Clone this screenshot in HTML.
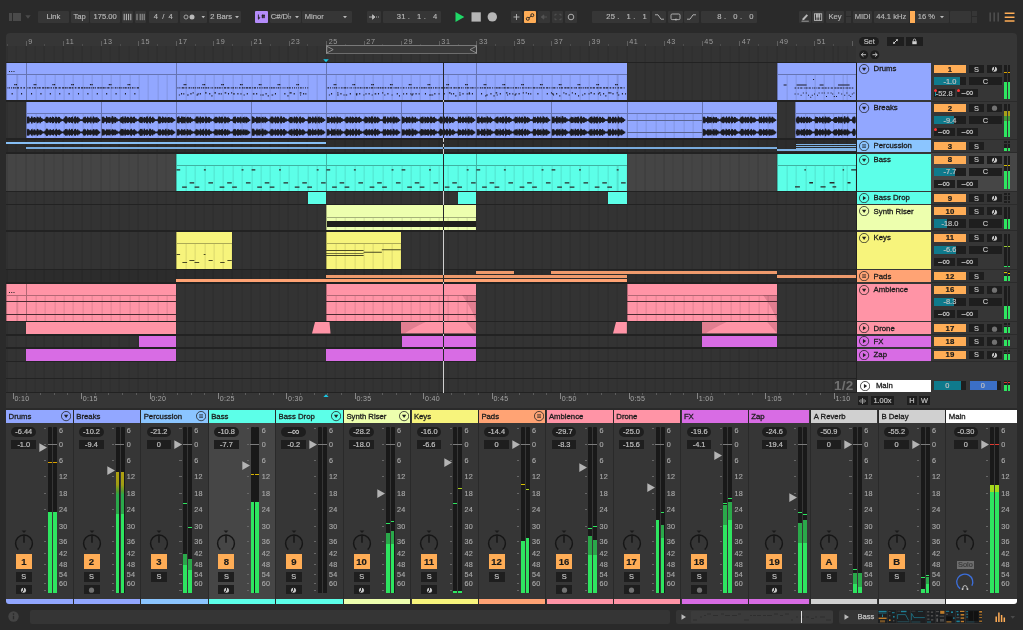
<!DOCTYPE html>
<html lang="en"><head><meta charset="utf-8"><title>Live Set</title><style>
*{box-sizing:border-box;margin:0;padding:0}
html,body{width:1023px;height:630px;overflow:hidden;background:#2a2a2a}
body{font-family:"Liberation Sans",sans-serif;font-size:7.5px;color:#b9b9b9;position:relative}
#r{position:absolute;left:0;top:0;width:1023px;height:630px;overflow:hidden;background:#2a2a2a}
#r div,#r svg{position:absolute}
#r svg{display:block}
#r div>span{position:static}
.tb{-webkit-text-stroke-width:0.15px;display:flex;align-items:center;justify-content:center;font-size:7.6px;color:#b9b9b9;white-space:nowrap;border-radius:1px}
.tb svg{position:static!important;flex:none}
.tb svg.a{position:absolute!important}
.pos{letter-spacing:0.2px}
.cb{-webkit-text-stroke-width:0.2px;display:flex;align-items:center;justify-content:center;font-size:7.4px;color:#c0c0c0;white-space:nowrap;overflow:hidden}
.cb svg{position:static!important;flex:none}
.dk{color:#1a1a1a;font-weight:bold;font-size:7.8px}
.tn{font-size:7.75px;font-weight:normal;color:#1c1c1c;white-space:nowrap;-webkit-text-stroke:0.3px #1c1c1c}
.rl{font-size:7.2px;color:#9c9c9c;white-space:nowrap;line-height:1;letter-spacing:0.65px}
.sl{font-size:7.2px;color:#a8a8a8;white-space:nowrap;letter-spacing:0.25px;-webkit-text-stroke-width:0.15px}
</style></head><body><div id="r">
<div style="left:8.75px;top:12.50px;width:3.00px;height:8.30px;background:#4a4a4a;"></div>
<div style="left:13.25px;top:12.50px;width:7.30px;height:8.30px;background:#4a4a4a;"></div>
<svg class="a" style="left:24.5px;top:14.5px" width="6" height="4"><path d="M0.3 0.3H5.7L3 3.7Z" fill="#4a4a4a"/></svg>
<div class="tb" style="left:38.00px;top:10.90px;width:30.75px;height:11.90px;background:#363636;">Link</div>
<div class="tb" style="left:70.50px;top:10.90px;width:18.00px;height:11.90px;background:#363636;">Tap</div>
<div class="tb" style="left:90.25px;top:10.90px;width:29.75px;height:11.90px;background:#363636;">175.00</div>
<div class="tb" style="left:121.75px;top:10.90px;width:11.00px;height:11.90px;background:#363636;"><svg width="11" height="12"><path d="M2.2 2.8V9.2M4.4 2.8V9.2M6.6 2.8V9.2M8.8 2.8V9.2" stroke="#b9b9b9" stroke-width="1"/></svg></div>
<div class="tb" style="left:135.00px;top:10.90px;width:11.25px;height:11.90px;background:#363636;"><svg width="11" height="12"><path d="M2 2.8V9.2M5.2 2.8V9.2M7.2 2.8V9.2M9.2 2.8V9.2" stroke="#b9b9b9" stroke-width="0.8"/></svg></div>
<div class="tb" style="left:148.75px;top:10.90px;width:29.00px;height:11.90px;background:#363636;">4&nbsp; / &nbsp;4</div>
<div class="tb" style="left:180.00px;top:10.90px;width:27.00px;height:11.90px;background:#363636;"><svg width="27" height="12"><circle cx="6" cy="6" r="2" fill="none" stroke="#b9b9b9" stroke-width="0.8"/><circle cx="12" cy="6" r="2.5" fill="#b9b9b9"/><path d="M21.5 5H25L23.25 7.3Z" fill="#b9b9b9"/></svg></div>
<div class="tb" style="left:209.00px;top:10.90px;width:31.75px;height:11.90px;background:#363636;">2 Bars<svg width="6" height="12" style="margin-left:1.5px"><path d="M1 5H5L3 7.3Z" fill="#b9b9b9"/></svg></div>
<div class="tb" style="left:254.50px;top:10.90px;width:13.25px;height:11.90px;background:#b48cfa;"><svg width="13" height="12"><path d="M3.4 3.5V8.2M3.4 6.6C5 5.6 5.4 7.2 3.4 8.2" stroke="#1e1e1e" stroke-width="0.9" fill="none"/><path d="M6.6 4.6H10M6.6 6H10M7.6 3.4V7.2M9 3.4V7.2" stroke="#1e1e1e" stroke-width="0.9"/></svg></div>
<div class="tb" style="left:269.75px;top:10.90px;width:30.75px;height:11.90px;background:#363636;overflow:hidden;">C#/D&#9837;<svg width="6" height="12" style="margin-left:1.5px"><path d="M1 5H5L3 7.3Z" fill="#b9b9b9"/></svg></div>
<div class="tb" style="left:302.25px;top:10.90px;width:49.50px;height:11.90px;background:#363636;"><span style="position:absolute;left:2.5px">Minor</span><svg class="a" style="right:3.5px;top:0" width="6" height="12"><path d="M1 5H5L3 7.3Z" fill="#b9b9b9"/></svg></div>
<div class="tb" style="left:366.75px;top:10.90px;width:13.75px;height:11.90px;background:#363636;"><svg width="14" height="12"><path d="M2 6H7.5M5.5 3.8L8 6L5.5 8.2Z" stroke="#b9b9b9" stroke-width="0.9" fill="#b9b9b9"/><path d="M9 6H10M11 6H12" stroke="#b9b9b9" stroke-width="0.9"/></svg></div>
<div class="tb" style="left:382.75px;top:10.90px;width:57.75px;height:11.90px;background:#363636;justify-content:flex-end;"><span class="pos" style="padding-right:3px">31 .&nbsp;&nbsp; 1 .&nbsp;&nbsp; 4</span></div>
<svg class="a" style="left:454px;top:10px" width="48" height="14"><path d="M1.5 2L10.3 6.9L1.5 12Z" fill="#1fd867"/><rect x="17.5" y="2.3" width="9.3" height="9.3" fill="#b6b6b6"/><circle cx="38.3" cy="6.9" r="4.7" fill="#b6b6b6"/></svg>
<div class="tb" style="left:511.40px;top:10.90px;width:11.00px;height:11.90px;background:#363636;"><svg width="11" height="12"><path d="M5.5 3V9M2.5 6H8.5" stroke="#b9b9b9" stroke-width="0.9"/></svg></div>
<div class="tb" style="left:524.10px;top:10.90px;width:12.20px;height:11.90px;background:#ffad56;"><svg width="12" height="12"><circle cx="3.8" cy="7.8" r="1.5" fill="none" stroke="#1e1e1e" stroke-width="0.9"/><circle cx="8.3" cy="4.2" r="1.5" fill="none" stroke="#1e1e1e" stroke-width="0.9"/><path d="M4.8 6.9L7.3 5.1" stroke="#1e1e1e" stroke-width="0.9"/></svg></div>
<div class="tb" style="left:538.10px;top:10.90px;width:11.70px;height:11.90px;background:#363636;"><svg width="12" height="12"><path d="M3.5 6H9M5.8 3.9L3.3 6L5.8 8.1Z" stroke="#555" stroke-width="0.9" fill="#555"/></svg></div>
<div class="tb" style="left:551.60px;top:10.90px;width:11.90px;height:11.90px;background:#363636;"><svg width="12" height="12"><path d="M3 4.8V3.3H4.6M7.4 3.3H9V4.8M9 7.2V8.7H7.4M4.6 8.7H3V7.2" stroke="#555" stroke-width="0.9" fill="none"/></svg></div>
<div class="tb" style="left:565.00px;top:10.90px;width:12.00px;height:11.90px;background:#363636;"><svg width="12" height="12"><circle cx="6" cy="6" r="2.8" fill="none" stroke="#b9b9b9" stroke-width="0.9"/></svg></div>
<div class="tb" style="left:592.00px;top:10.90px;width:58.00px;height:11.90px;background:#363636;justify-content:flex-end;"><span class="pos" style="padding-right:3px">25 .&nbsp;&nbsp; 1 .&nbsp;&nbsp; 1</span></div>
<div class="tb" style="left:651.70px;top:10.90px;width:14.80px;height:11.90px;background:#363636;"><svg width="15" height="12"><path d="M3 3.8H6L9 8.2H12" stroke="#b9b9b9" stroke-width="0.9" fill="none"/></svg></div>
<div class="tb" style="left:668.20px;top:10.90px;width:14.80px;height:11.90px;background:#363636;"><svg width="15" height="12"><rect x="3" y="3" width="9" height="5.6" rx="1.2" fill="none" stroke="#b9b9b9" stroke-width="0.9"/><path d="M6.5 8.6L8.3 7.2V10Z" fill="#b9b9b9"/></svg></div>
<div class="tb" style="left:684.20px;top:10.90px;width:14.80px;height:11.90px;background:#363636;"><svg width="15" height="12"><path d="M3 8.2H6L9 3.8H12" stroke="#b9b9b9" stroke-width="0.9" fill="none"/></svg></div>
<div class="tb" style="left:700.80px;top:10.90px;width:55.90px;height:11.90px;background:#363636;justify-content:flex-end;"><span class="pos" style="padding-right:3px">8 .&nbsp;&nbsp; 0 .&nbsp;&nbsp; 0</span></div>
<div class="tb" style="left:798.60px;top:10.90px;width:12.00px;height:11.90px;background:#363636;"><svg width="12" height="12"><path d="M3.6 7.6L7.6 3.2L9 4.5L5 8.9L3.3 9.2Z" fill="#b9b9b9"/><path d="M2.5 10.2H9.8" stroke="#b9b9b9" stroke-width="0.8"/></svg></div>
<div class="tb" style="left:812.20px;top:10.90px;width:12.10px;height:11.90px;background:#363636;"><svg width="12" height="12"><rect x="2.5" y="2.8" width="7.2" height="6.6" fill="none" stroke="#b9b9b9" stroke-width="0.9"/><path d="M4.9 2.8V9.4M7.3 2.8V9.4" stroke="#b9b9b9" stroke-width="0.9"/><path d="M4.9 2.8V6.5M7.3 2.8V6.5" stroke="#b9b9b9" stroke-width="1.8"/></svg></div>
<div class="tb" style="left:825.80px;top:10.90px;width:18.50px;height:11.90px;background:#363636;">Key</div>
<div style="left:845.90px;top:10.90px;width:5.40px;height:5.60px;background:#363636;"></div>
<div style="left:845.90px;top:17.20px;width:5.40px;height:5.60px;background:#363636;"></div>
<div class="tb" style="left:853.00px;top:10.90px;width:19.30px;height:11.90px;background:#363636;">MIDI</div>
<div class="tb" style="left:873.90px;top:10.90px;width:34.70px;height:11.90px;background:#363636;">44.1 kHz</div>
<div style="left:910.40px;top:10.90px;width:4.40px;height:11.90px;background:#ffad56;"></div>
<div class="tb" style="left:914.80px;top:10.90px;width:34.20px;height:11.90px;background:#363636;"><span style="position:absolute;left:3px">16 %</span><svg class="a" style="right:3.5px;top:0" width="6" height="12"><path d="M1 5H5L3 7.3Z" fill="#b9b9b9"/></svg></div>
<div class="tb" style="left:950.20px;top:10.90px;width:20.60px;height:11.90px;background:#363636;"></div>
<div style="left:971.80px;top:10.90px;width:5.40px;height:5.60px;background:#363636;"></div>
<div style="left:971.80px;top:17.20px;width:5.40px;height:5.60px;background:#363636;"></div>
<svg class="a" style="left:989px;top:11.5px" width="28" height="11"><path d="M1.2 0.5V9.5M5.2 0.5V9.5M9.2 0.5V9.5" stroke="#4c4c4c" stroke-width="1.6"/><path d="M15.7 1.3H25.5M15.7 5.2H25.5M15.7 9.1H25.5" stroke="#ffad56" stroke-width="1.5"/></svg>
<div style="left:6.20px;top:33.40px;width:1010.50px;height:374.40px;background:#363636;border-radius:4px 4px 0 0;"></div>
<div style="left:6.20px;top:45.50px;width:850.00px;height:347.00px;background:#222222;"></div>
<div style="left:6.20px;top:45.50px;width:850.00px;height:16.50px;background:#333333;background-image:repeating-linear-gradient(90deg,rgba(0,0,0,0.15) 0,rgba(0,0,0,0.15) 1px,rgba(0,0,0,0) 1px,rgba(0,0,0,0) 9.39px,rgba(0,0,0,0.09) 9.39px,rgba(0,0,0,0.09) 10.39px,rgba(0,0,0,0) 10.39px,rgba(0,0,0,0) 18.78px);background-position:-18.46px 0;"></div>
<div style="left:6.20px;top:63.10px;width:850.00px;height:37.30px;background:#333333;background-image:repeating-linear-gradient(90deg,rgba(0,0,0,0.15) 0,rgba(0,0,0,0.15) 1px,rgba(0,0,0,0) 1px,rgba(0,0,0,0) 9.39px,rgba(0,0,0,0.09) 9.39px,rgba(0,0,0,0.09) 10.39px,rgba(0,0,0,0) 10.39px,rgba(0,0,0,0) 18.78px);background-position:-18.46px 0;"></div>
<div style="left:6.20px;top:102.10px;width:850.00px;height:36.40px;background:#333333;background-image:repeating-linear-gradient(90deg,rgba(0,0,0,0.15) 0,rgba(0,0,0,0.15) 1px,rgba(0,0,0,0) 1px,rgba(0,0,0,0) 9.39px,rgba(0,0,0,0.09) 9.39px,rgba(0,0,0,0.09) 10.39px,rgba(0,0,0,0) 10.39px,rgba(0,0,0,0) 18.78px);background-position:-18.46px 0;"></div>
<div style="left:6.20px;top:140.30px;width:850.00px;height:11.90px;background:#2c2c2c;background-image:repeating-linear-gradient(90deg,rgba(0,0,0,0.15) 0,rgba(0,0,0,0.15) 1px,rgba(0,0,0,0) 1px,rgba(0,0,0,0) 9.39px,rgba(0,0,0,0.09) 9.39px,rgba(0,0,0,0.09) 10.39px,rgba(0,0,0,0) 10.39px,rgba(0,0,0,0) 18.78px);background-position:-18.46px 0;"></div>
<div style="left:6.20px;top:153.80px;width:850.00px;height:36.90px;background:#454545;background-image:repeating-linear-gradient(90deg,rgba(0,0,0,0.15) 0,rgba(0,0,0,0.15) 1px,rgba(0,0,0,0) 1px,rgba(0,0,0,0) 9.39px,rgba(0,0,0,0.09) 9.39px,rgba(0,0,0,0.09) 10.39px,rgba(0,0,0,0) 10.39px,rgba(0,0,0,0) 18.78px);background-position:-18.46px 0;"></div>
<div style="left:6.20px;top:192.30px;width:850.00px;height:11.40px;background:#333333;background-image:repeating-linear-gradient(90deg,rgba(0,0,0,0.15) 0,rgba(0,0,0,0.15) 1px,rgba(0,0,0,0) 1px,rgba(0,0,0,0) 9.39px,rgba(0,0,0,0.09) 9.39px,rgba(0,0,0,0.09) 10.39px,rgba(0,0,0,0) 10.39px,rgba(0,0,0,0) 18.78px);background-position:-18.46px 0;"></div>
<div style="left:6.20px;top:205.40px;width:850.00px;height:24.80px;background:#333333;background-image:repeating-linear-gradient(90deg,rgba(0,0,0,0.15) 0,rgba(0,0,0,0.15) 1px,rgba(0,0,0,0) 1px,rgba(0,0,0,0) 9.39px,rgba(0,0,0,0.09) 9.39px,rgba(0,0,0,0.09) 10.39px,rgba(0,0,0,0) 10.39px,rgba(0,0,0,0) 18.78px);background-position:-18.46px 0;"></div>
<div style="left:6.20px;top:231.90px;width:850.00px;height:36.90px;background:#333333;background-image:repeating-linear-gradient(90deg,rgba(0,0,0,0.15) 0,rgba(0,0,0,0.15) 1px,rgba(0,0,0,0) 1px,rgba(0,0,0,0) 9.39px,rgba(0,0,0,0.09) 9.39px,rgba(0,0,0,0.09) 10.39px,rgba(0,0,0,0) 10.39px,rgba(0,0,0,0) 18.78px);background-position:-18.46px 0;"></div>
<div style="left:6.20px;top:270.40px;width:850.00px;height:11.80px;background:#2c2c2c;background-image:repeating-linear-gradient(90deg,rgba(0,0,0,0.15) 0,rgba(0,0,0,0.15) 1px,rgba(0,0,0,0) 1px,rgba(0,0,0,0) 9.39px,rgba(0,0,0,0.09) 9.39px,rgba(0,0,0,0.09) 10.39px,rgba(0,0,0,0) 10.39px,rgba(0,0,0,0) 18.78px);background-position:-18.46px 0;"></div>
<div style="left:6.20px;top:283.80px;width:850.00px;height:37.00px;background:#333333;background-image:repeating-linear-gradient(90deg,rgba(0,0,0,0.15) 0,rgba(0,0,0,0.15) 1px,rgba(0,0,0,0) 1px,rgba(0,0,0,0) 9.39px,rgba(0,0,0,0.09) 9.39px,rgba(0,0,0,0.09) 10.39px,rgba(0,0,0,0) 10.39px,rgba(0,0,0,0) 18.78px);background-position:-18.46px 0;"></div>
<div style="left:6.20px;top:322.40px;width:850.00px;height:11.40px;background:#333333;background-image:repeating-linear-gradient(90deg,rgba(0,0,0,0.15) 0,rgba(0,0,0,0.15) 1px,rgba(0,0,0,0) 1px,rgba(0,0,0,0) 9.39px,rgba(0,0,0,0.09) 9.39px,rgba(0,0,0,0.09) 10.39px,rgba(0,0,0,0) 10.39px,rgba(0,0,0,0) 18.78px);background-position:-18.46px 0;"></div>
<div style="left:6.20px;top:335.70px;width:850.00px;height:11.70px;background:#333333;background-image:repeating-linear-gradient(90deg,rgba(0,0,0,0.15) 0,rgba(0,0,0,0.15) 1px,rgba(0,0,0,0) 1px,rgba(0,0,0,0) 9.39px,rgba(0,0,0,0.09) 9.39px,rgba(0,0,0,0.09) 10.39px,rgba(0,0,0,0) 10.39px,rgba(0,0,0,0) 18.78px);background-position:-18.46px 0;"></div>
<div style="left:6.20px;top:349.20px;width:850.00px;height:11.60px;background:#333333;background-image:repeating-linear-gradient(90deg,rgba(0,0,0,0.15) 0,rgba(0,0,0,0.15) 1px,rgba(0,0,0,0) 1px,rgba(0,0,0,0) 9.39px,rgba(0,0,0,0.09) 9.39px,rgba(0,0,0,0.09) 10.39px,rgba(0,0,0,0) 10.39px,rgba(0,0,0,0) 18.78px);background-position:-18.46px 0;"></div>
<div style="left:6.20px;top:362.20px;width:850.00px;height:15.40px;background:#333333;background-image:repeating-linear-gradient(90deg,rgba(0,0,0,0.15) 0,rgba(0,0,0,0.15) 1px,rgba(0,0,0,0) 1px,rgba(0,0,0,0) 9.39px,rgba(0,0,0,0.09) 9.39px,rgba(0,0,0,0.09) 10.39px,rgba(0,0,0,0) 10.39px,rgba(0,0,0,0) 18.78px);background-position:-18.46px 0;"></div>
<div style="left:6.20px;top:379.30px;width:850.00px;height:12.80px;background:#333333;background-image:repeating-linear-gradient(90deg,rgba(0,0,0,0.15) 0,rgba(0,0,0,0.15) 1px,rgba(0,0,0,0) 1px,rgba(0,0,0,0) 9.39px,rgba(0,0,0,0.09) 9.39px,rgba(0,0,0,0.09) 10.39px,rgba(0,0,0,0) 10.39px,rgba(0,0,0,0) 18.78px);background-position:-18.46px 0;"></div>
<div class="a" style="left:25.60px;top:41px;width:0.8px;height:4.5px;background:#5e5e5e"></div>
<div class="a rl" style="left:28.20px;top:38.3px">9</div>
<div class="a" style="left:63.16px;top:41px;width:0.8px;height:4.5px;background:#5e5e5e"></div>
<div class="a rl" style="left:65.76px;top:38.3px">11</div>
<div class="a" style="left:100.72px;top:41px;width:0.8px;height:4.5px;background:#5e5e5e"></div>
<div class="a rl" style="left:103.32px;top:38.3px">13</div>
<div class="a" style="left:138.28px;top:41px;width:0.8px;height:4.5px;background:#5e5e5e"></div>
<div class="a rl" style="left:140.88px;top:38.3px">15</div>
<div class="a" style="left:175.84px;top:41px;width:0.8px;height:4.5px;background:#5e5e5e"></div>
<div class="a rl" style="left:178.44px;top:38.3px">17</div>
<div class="a" style="left:213.40px;top:41px;width:0.8px;height:4.5px;background:#5e5e5e"></div>
<div class="a rl" style="left:216.00px;top:38.3px">19</div>
<div class="a" style="left:250.96px;top:41px;width:0.8px;height:4.5px;background:#5e5e5e"></div>
<div class="a rl" style="left:253.56px;top:38.3px">21</div>
<div class="a" style="left:288.52px;top:41px;width:0.8px;height:4.5px;background:#5e5e5e"></div>
<div class="a rl" style="left:291.12px;top:38.3px">23</div>
<div class="a" style="left:326.08px;top:41px;width:0.8px;height:4.5px;background:#5e5e5e"></div>
<div class="a rl" style="left:328.68px;top:38.3px">25</div>
<div class="a" style="left:363.64px;top:41px;width:0.8px;height:4.5px;background:#5e5e5e"></div>
<div class="a rl" style="left:366.24px;top:38.3px">27</div>
<div class="a" style="left:401.20px;top:41px;width:0.8px;height:4.5px;background:#5e5e5e"></div>
<div class="a rl" style="left:403.80px;top:38.3px">29</div>
<div class="a" style="left:438.76px;top:41px;width:0.8px;height:4.5px;background:#5e5e5e"></div>
<div class="a rl" style="left:441.36px;top:38.3px">31</div>
<div class="a" style="left:476.32px;top:41px;width:0.8px;height:4.5px;background:#5e5e5e"></div>
<div class="a rl" style="left:478.92px;top:38.3px">33</div>
<div class="a" style="left:513.88px;top:41px;width:0.8px;height:4.5px;background:#5e5e5e"></div>
<div class="a rl" style="left:516.48px;top:38.3px">35</div>
<div class="a" style="left:551.44px;top:41px;width:0.8px;height:4.5px;background:#5e5e5e"></div>
<div class="a rl" style="left:554.04px;top:38.3px">37</div>
<div class="a" style="left:589.00px;top:41px;width:0.8px;height:4.5px;background:#5e5e5e"></div>
<div class="a rl" style="left:591.60px;top:38.3px">39</div>
<div class="a" style="left:626.56px;top:41px;width:0.8px;height:4.5px;background:#5e5e5e"></div>
<div class="a rl" style="left:629.16px;top:38.3px">41</div>
<div class="a" style="left:664.12px;top:41px;width:0.8px;height:4.5px;background:#5e5e5e"></div>
<div class="a rl" style="left:666.72px;top:38.3px">43</div>
<div class="a" style="left:701.68px;top:41px;width:0.8px;height:4.5px;background:#5e5e5e"></div>
<div class="a rl" style="left:704.28px;top:38.3px">45</div>
<div class="a" style="left:739.24px;top:41px;width:0.8px;height:4.5px;background:#5e5e5e"></div>
<div class="a rl" style="left:741.84px;top:38.3px">47</div>
<div class="a" style="left:776.80px;top:41px;width:0.8px;height:4.5px;background:#5e5e5e"></div>
<div class="a rl" style="left:779.40px;top:38.3px">49</div>
<div class="a" style="left:814.36px;top:41px;width:0.8px;height:4.5px;background:#5e5e5e"></div>
<div class="a rl" style="left:816.96px;top:38.3px">51</div>
<div class="a" style="left:851.92px;top:41px;width:0.8px;height:4.5px;background:#5e5e5e"></div>
<div class="a" style="left:6.82px;top:44px;width:0.8px;height:1.6px;background:#4c4c4c"></div>
<div class="a" style="left:44.38px;top:44px;width:0.8px;height:1.6px;background:#4c4c4c"></div>
<div class="a" style="left:81.94px;top:44px;width:0.8px;height:1.6px;background:#4c4c4c"></div>
<div class="a" style="left:119.50px;top:44px;width:0.8px;height:1.6px;background:#4c4c4c"></div>
<div class="a" style="left:157.06px;top:44px;width:0.8px;height:1.6px;background:#4c4c4c"></div>
<div class="a" style="left:194.62px;top:44px;width:0.8px;height:1.6px;background:#4c4c4c"></div>
<div class="a" style="left:232.18px;top:44px;width:0.8px;height:1.6px;background:#4c4c4c"></div>
<div class="a" style="left:269.74px;top:44px;width:0.8px;height:1.6px;background:#4c4c4c"></div>
<div class="a" style="left:307.30px;top:44px;width:0.8px;height:1.6px;background:#4c4c4c"></div>
<div class="a" style="left:344.86px;top:44px;width:0.8px;height:1.6px;background:#4c4c4c"></div>
<div class="a" style="left:382.42px;top:44px;width:0.8px;height:1.6px;background:#4c4c4c"></div>
<div class="a" style="left:419.98px;top:44px;width:0.8px;height:1.6px;background:#4c4c4c"></div>
<div class="a" style="left:457.54px;top:44px;width:0.8px;height:1.6px;background:#4c4c4c"></div>
<div class="a" style="left:495.10px;top:44px;width:0.8px;height:1.6px;background:#4c4c4c"></div>
<div class="a" style="left:532.66px;top:44px;width:0.8px;height:1.6px;background:#4c4c4c"></div>
<div class="a" style="left:570.22px;top:44px;width:0.8px;height:1.6px;background:#4c4c4c"></div>
<div class="a" style="left:607.78px;top:44px;width:0.8px;height:1.6px;background:#4c4c4c"></div>
<div class="a" style="left:645.34px;top:44px;width:0.8px;height:1.6px;background:#4c4c4c"></div>
<div class="a" style="left:682.90px;top:44px;width:0.8px;height:1.6px;background:#4c4c4c"></div>
<div class="a" style="left:720.46px;top:44px;width:0.8px;height:1.6px;background:#4c4c4c"></div>
<div class="a" style="left:758.02px;top:44px;width:0.8px;height:1.6px;background:#4c4c4c"></div>
<div class="a" style="left:795.58px;top:44px;width:0.8px;height:1.6px;background:#4c4c4c"></div>
<div class="a" style="left:833.14px;top:44px;width:0.8px;height:1.6px;background:#4c4c4c"></div>
<svg class="a" style="left:325.58px;top:44.8px" width="151.74" height="9.5"><rect x="0.5" y="0.5" width="150.24" height="8.2" fill="#3a3a3a" stroke="#808080" stroke-width="0.9"/><path d="M0.8 1.2L7.2 4.6L0.8 8Z" fill="none" stroke="#a0a0a0" stroke-width="0.8"/><path d="M150.44 1.2L144.04 4.6L150.44 8Z" fill="none" stroke="#a0a0a0" stroke-width="0.8"/></svg>
<svg class="a" style="left:323.08px;top:58.8px" width="6" height="3.4"><path d="M0.2 0.2H5.8L3 3.2Z" fill="#19c8e4"/></svg>
<div class="a" style="left:6.20px;top:63.10px;width:19.40px;height:37.30px;background:#92a7ff;overflow:hidden;"><div class="a" style="left:0;top:11.60px;width:100%;height:25.70px;background-image:repeating-linear-gradient(90deg,#8193e1 0,#8193e1 1px,rgba(0,0,0,0) 1px,rgba(0,0,0,0) 9.39px);background-position:-8.77px 0;"></div><div class="a" style="left:0;top:11.20px;width:100%;height:0.9px;background:#6674b2"></div><div class="a" style="left:0;top:0;width:0.9px;height:100%;background:#6674b2"></div><div class="a" style="left:2.3px;top:3.2px;font-size:7px;color:#222;letter-spacing:0.3px;font-weight:bold">...</div><svg class="a" style="left:0;top:0" width="19.40" height="37.40"><path d="M1.50 24.20h0.90v1.30h-0.90zM3.10 24.20h0.90v1.30h-0.90zM5.00 24.20h0.90v1.30h-0.90zM6.90 24.20h1.60v1.30h-1.60zM9.20 24.20h0.90v1.30h-0.90zM10.80 24.20h2.20v1.30h-2.20zM14.40 24.20h1.60v1.30h-1.60zM17.40 24.20h1.60v1.30h-1.60zM8.22 21.00h1.20v1.20h-1.20zM9.82 21.00h1.20v1.20h-1.20zM5.62 30.00h1.10v1.40h-1.10zM15.02 30.00h1.10v1.40h-1.10z" fill="#1e1e28"/></svg></div>
<div class="a" style="left:25.60px;top:63.10px;width:150.24px;height:37.30px;background:#92a7ff;overflow:hidden;"><div class="a" style="left:0;top:11.60px;width:100%;height:25.70px;background-image:repeating-linear-gradient(90deg,#8193e1 0,#8193e1 1px,rgba(0,0,0,0) 1px,rgba(0,0,0,0) 9.39px);background-position:-9.39px 0;"></div><div class="a" style="left:0;top:11.20px;width:100%;height:0.9px;background:#6674b2"></div><div class="a" style="left:0;top:0;width:0.9px;height:100%;background:#6674b2"></div><svg class="a" style="left:0;top:0" width="150.24" height="37.40"><path d="M1.50 24.20h0.90v1.30h-0.90zM3.10 24.20h1.60v1.30h-1.60zM6.10 24.20h0.90v1.30h-0.90zM7.70 24.20h2.20v1.30h-2.20zM10.90 24.20h0.90v1.30h-0.90zM12.50 24.20h2.20v1.30h-2.20zM16.10 24.20h2.20v1.30h-2.20zM19.00 24.20h0.90v1.30h-0.90zM20.60 24.20h2.20v1.30h-2.20zM23.50 24.20h0.90v1.30h-0.90zM25.10 24.20h0.90v1.30h-0.90zM27.00 24.20h0.90v1.30h-0.90zM28.90 24.20h2.20v1.30h-2.20zM32.50 24.20h2.20v1.30h-2.20zM36.10 24.20h2.20v1.30h-2.20zM39.00 24.20h1.60v1.30h-1.60zM41.30 24.20h0.90v1.30h-0.90zM42.90 24.20h2.20v1.30h-2.20zM45.80 24.20h1.60v1.30h-1.60zM48.80 24.20h1.60v1.30h-1.60zM51.80 24.20h2.20v1.30h-2.20zM55.00 24.20h2.20v1.30h-2.20zM57.90 24.20h1.60v1.30h-1.60zM60.20 24.20h1.60v1.30h-1.60zM62.50 24.20h1.60v1.30h-1.60zM64.80 24.20h0.90v1.30h-0.90zM66.70 24.20h1.60v1.30h-1.60zM69.00 24.20h0.90v1.30h-0.90zM71.30 24.20h2.20v1.30h-2.20zM74.20 24.20h1.60v1.30h-1.60zM76.50 24.20h2.20v1.30h-2.20zM79.40 24.20h0.90v1.30h-0.90zM81.30 24.20h2.20v1.30h-2.20zM84.90 24.20h0.90v1.30h-0.90zM86.50 24.20h0.90v1.30h-0.90zM88.80 24.20h1.60v1.30h-1.60zM91.40 24.20h0.90v1.30h-0.90zM93.00 24.20h1.60v1.30h-1.60zM95.30 24.20h0.90v1.30h-0.90zM96.90 24.20h0.90v1.30h-0.90zM98.50 24.20h2.20v1.30h-2.20zM101.70 24.20h1.60v1.30h-1.60zM104.00 24.20h0.90v1.30h-0.90zM105.90 24.20h1.60v1.30h-1.60zM108.50 24.20h0.90v1.30h-0.90zM110.80 24.20h2.20v1.30h-2.20zM7.60 21.00h1.20v1.20h-1.20zM9.20 21.00h1.20v1.20h-1.20zM26.38 21.00h1.20v1.20h-1.20zM27.98 21.00h1.20v1.20h-1.20zM45.16 21.00h1.20v1.20h-1.20zM46.76 21.00h1.20v1.20h-1.20zM63.94 21.00h1.20v1.20h-1.20zM65.54 21.00h1.20v1.20h-1.20zM82.72 21.00h1.20v1.20h-1.20zM84.32 21.00h1.20v1.20h-1.20zM101.50 21.00h1.20v1.20h-1.20zM103.10 21.00h1.20v1.20h-1.20zM5.00 30.00h1.10v1.40h-1.10zM14.40 30.00h1.10v1.40h-1.10zM23.78 30.00h1.10v1.40h-1.10zM33.18 30.00h1.10v1.40h-1.10zM42.56 30.00h1.10v1.40h-1.10zM51.96 30.00h1.10v1.40h-1.10zM61.34 30.00h1.10v1.40h-1.10zM70.74 30.00h1.10v1.40h-1.10zM80.12 30.00h1.10v1.40h-1.10zM89.52 30.00h1.10v1.40h-1.10zM98.90 30.00h1.10v1.40h-1.10zM108.30 30.00h1.10v1.40h-1.10z" fill="#1e1e28"/></svg></div>
<div class="a" style="left:175.84px;top:63.10px;width:150.24px;height:37.30px;background:#92a7ff;overflow:hidden;"><div class="a" style="left:0;top:11.60px;width:100%;height:25.70px;background-image:repeating-linear-gradient(90deg,#8193e1 0,#8193e1 1px,rgba(0,0,0,0) 1px,rgba(0,0,0,0) 9.39px);background-position:-9.39px 0;"></div><div class="a" style="left:0;top:11.20px;width:100%;height:0.9px;background:#6674b2"></div><div class="a" style="left:0;top:0;width:0.9px;height:100%;background:#6674b2"></div><svg class="a" style="left:0;top:0" width="150.24" height="37.40"><path d="M1.50 24.20h0.90v1.30h-0.90zM3.40 24.20h0.90v1.30h-0.90zM5.70 24.20h2.20v1.30h-2.20zM8.60 24.20h0.90v1.30h-0.90zM10.20 24.20h0.90v1.30h-0.90zM12.50 24.20h1.60v1.30h-1.60zM14.80 24.20h0.90v1.30h-0.90zM16.70 24.20h1.60v1.30h-1.60zM19.00 24.20h0.90v1.30h-0.90zM20.90 24.20h0.90v1.30h-0.90zM22.50 24.20h1.60v1.30h-1.60zM25.10 24.20h0.90v1.30h-0.90zM26.70 24.20h1.60v1.30h-1.60zM29.30 24.20h1.60v1.30h-1.60zM31.60 24.20h1.60v1.30h-1.60zM34.60 24.20h0.90v1.30h-0.90zM36.20 24.20h0.90v1.30h-0.90zM38.50 24.20h1.60v1.30h-1.60zM40.80 24.20h1.60v1.30h-1.60zM43.10 24.20h1.60v1.30h-1.60zM45.70 24.20h0.90v1.30h-0.90zM48.00 24.20h2.20v1.30h-2.20zM51.20 24.20h2.20v1.30h-2.20zM54.80 24.20h0.90v1.30h-0.90zM56.40 24.20h1.60v1.30h-1.60zM59.00 24.20h0.90v1.30h-0.90zM60.60 24.20h0.90v1.30h-0.90zM62.90 24.20h1.60v1.30h-1.60zM65.90 24.20h1.60v1.30h-1.60zM68.20 24.20h0.90v1.30h-0.90zM69.80 24.20h2.20v1.30h-2.20zM72.70 24.20h2.20v1.30h-2.20zM75.90 24.20h0.90v1.30h-0.90zM77.80 24.20h2.20v1.30h-2.20zM81.00 24.20h0.90v1.30h-0.90zM82.90 24.20h0.90v1.30h-0.90zM84.50 24.20h0.90v1.30h-0.90zM86.40 24.20h0.90v1.30h-0.90zM88.00 24.20h1.60v1.30h-1.60zM90.30 24.20h1.60v1.30h-1.60zM93.30 24.20h0.90v1.30h-0.90zM94.90 24.20h1.60v1.30h-1.60zM97.20 24.20h1.60v1.30h-1.60zM99.80 24.20h0.90v1.30h-0.90zM101.70 24.20h1.60v1.30h-1.60zM104.30 24.20h0.90v1.30h-0.90zM106.60 24.20h0.90v1.30h-0.90zM108.50 24.20h0.90v1.30h-0.90zM110.80 24.20h1.60v1.30h-1.60zM113.10 24.20h1.60v1.30h-1.60zM116.10 24.20h0.90v1.30h-0.90zM118.00 24.20h0.90v1.30h-0.90zM119.90 24.20h0.90v1.30h-0.90zM122.20 24.20h0.90v1.30h-0.90zM124.10 24.20h1.60v1.30h-1.60zM126.70 24.20h0.90v1.30h-0.90zM129.00 24.20h0.90v1.30h-0.90zM131.30 24.20h0.90v1.30h-0.90zM7.60 21.00h1.20v1.20h-1.20zM9.20 21.00h1.20v1.20h-1.20zM26.38 21.00h1.20v1.20h-1.20zM27.98 21.00h1.20v1.20h-1.20zM45.16 21.00h1.20v1.20h-1.20zM46.76 21.00h1.20v1.20h-1.20zM63.94 21.00h1.20v1.20h-1.20zM65.54 21.00h1.20v1.20h-1.20zM82.72 21.00h1.20v1.20h-1.20zM84.32 21.00h1.20v1.20h-1.20zM101.50 21.00h1.20v1.20h-1.20zM103.10 21.00h1.20v1.20h-1.20zM120.28 21.00h1.20v1.20h-1.20zM121.88 21.00h1.20v1.20h-1.20zM5.00 30.00h1.10v1.40h-1.10zM7.20 30.20h1.10v1.20h-1.10zM2.80 31.40h1.10v1.20h-1.10zM11.10 31.40h1.60v1.20h-1.60zM14.40 30.00h1.10v1.40h-1.10zM16.60 29.20h1.10v1.20h-1.10zM20.50 31.40h1.60v1.20h-1.60zM23.78 30.00h1.10v1.40h-1.10zM21.58 30.20h1.10v1.20h-1.10zM28.98 29.20h1.60v1.20h-1.60zM33.18 30.00h1.10v1.40h-1.10zM35.38 32.20h1.10v1.20h-1.10zM38.38 29.20h1.60v1.20h-1.60zM42.56 30.00h1.10v1.40h-1.10zM44.76 30.20h1.10v1.20h-1.10zM48.66 29.20h1.60v1.20h-1.60zM51.96 30.00h1.10v1.40h-1.10zM55.06 29.20h1.10v1.20h-1.10zM57.16 30.20h1.60v1.20h-1.60zM61.34 30.00h1.10v1.40h-1.10zM64.44 30.20h1.10v1.20h-1.10zM70.74 30.00h1.10v1.40h-1.10zM67.64 31.40h1.10v1.20h-1.10zM76.84 30.20h1.60v1.20h-1.60zM80.12 30.00h1.10v1.40h-1.10zM84.32 31.40h1.10v1.20h-1.10zM77.02 30.20h1.10v1.20h-1.10zM86.22 31.40h1.60v1.20h-1.60zM89.52 30.00h1.10v1.40h-1.10zM91.72 32.20h1.10v1.20h-1.10zM95.62 31.40h1.60v1.20h-1.60zM98.90 30.00h1.10v1.40h-1.10zM108.30 30.00h1.10v1.40h-1.10zM111.40 32.20h1.10v1.20h-1.10zM113.50 29.20h1.60v1.20h-1.60zM117.68 30.00h1.10v1.40h-1.10zM114.58 29.20h1.10v1.20h-1.10zM123.78 29.20h1.60v1.20h-1.60zM127.08 30.00h1.10v1.40h-1.10zM129.28 30.20h1.10v1.20h-1.10zM123.98 31.40h1.10v1.20h-1.10z" fill="#1e1e28"/></svg></div>
<div class="a" style="left:326.08px;top:63.10px;width:150.24px;height:37.30px;background:#92a7ff;overflow:hidden;"><div class="a" style="left:0;top:11.60px;width:100%;height:25.70px;background-image:repeating-linear-gradient(90deg,#8193e1 0,#8193e1 1px,rgba(0,0,0,0) 1px,rgba(0,0,0,0) 9.39px);background-position:-9.39px 0;"></div><div class="a" style="left:0;top:11.20px;width:100%;height:0.9px;background:#6674b2"></div><div class="a" style="left:0;top:0;width:0.9px;height:100%;background:#6674b2"></div><svg class="a" style="left:0;top:0" width="150.24" height="37.40"><path d="M1.50 24.20h1.60v1.30h-1.60zM4.10 24.20h0.90v1.30h-0.90zM6.40 24.20h0.90v1.30h-0.90zM8.00 24.20h0.90v1.30h-0.90zM9.60 24.20h1.60v1.30h-1.60zM12.60 24.20h0.90v1.30h-0.90zM14.90 24.20h0.90v1.30h-0.90zM16.50 24.20h0.90v1.30h-0.90zM18.10 24.20h2.20v1.30h-2.20zM21.30 24.20h0.90v1.30h-0.90zM23.60 24.20h0.90v1.30h-0.90zM25.20 24.20h0.90v1.30h-0.90zM27.50 24.20h0.90v1.30h-0.90zM29.10 24.20h0.90v1.30h-0.90zM30.70 24.20h0.90v1.30h-0.90zM32.30 24.20h0.90v1.30h-0.90zM33.90 24.20h1.60v1.30h-1.60zM36.50 24.20h0.90v1.30h-0.90zM38.10 24.20h0.90v1.30h-0.90zM39.70 24.20h2.20v1.30h-2.20zM42.90 24.20h0.90v1.30h-0.90zM44.80 24.20h2.20v1.30h-2.20zM47.70 24.20h0.90v1.30h-0.90zM49.60 24.20h0.90v1.30h-0.90zM51.50 24.20h1.60v1.30h-1.60zM53.80 24.20h1.60v1.30h-1.60zM56.10 24.20h1.60v1.30h-1.60zM58.70 24.20h1.60v1.30h-1.60zM61.70 24.20h1.60v1.30h-1.60zM64.00 24.20h2.20v1.30h-2.20zM67.60 24.20h0.90v1.30h-0.90zM69.20 24.20h1.60v1.30h-1.60zM71.50 24.20h1.60v1.30h-1.60zM74.50 24.20h0.90v1.30h-0.90zM76.80 24.20h1.60v1.30h-1.60zM79.80 24.20h0.90v1.30h-0.90zM82.10 24.20h0.90v1.30h-0.90zM83.70 24.20h0.90v1.30h-0.90zM85.30 24.20h0.90v1.30h-0.90zM87.60 24.20h1.60v1.30h-1.60zM90.20 24.20h1.60v1.30h-1.60zM93.20 24.20h0.90v1.30h-0.90zM95.10 24.20h1.60v1.30h-1.60zM97.40 24.20h2.20v1.30h-2.20zM100.30 24.20h0.90v1.30h-0.90zM102.20 24.20h1.60v1.30h-1.60zM104.50 24.20h1.60v1.30h-1.60zM107.10 24.20h0.90v1.30h-0.90zM109.00 24.20h1.60v1.30h-1.60zM111.60 24.20h0.90v1.30h-0.90zM113.20 24.20h0.90v1.30h-0.90zM115.10 24.20h2.20v1.30h-2.20zM118.00 24.20h0.90v1.30h-0.90zM119.60 24.20h2.20v1.30h-2.20zM122.50 24.20h0.90v1.30h-0.90zM124.40 24.20h1.60v1.30h-1.60zM127.40 24.20h2.20v1.30h-2.20zM130.30 24.20h0.90v1.30h-0.90zM131.90 24.20h2.20v1.30h-2.20zM135.10 24.20h0.90v1.30h-0.90zM136.70 24.20h0.90v1.30h-0.90zM139.00 24.20h0.90v1.30h-0.90zM140.60 24.20h2.20v1.30h-2.20zM143.80 24.20h0.90v1.30h-0.90zM145.40 24.20h2.20v1.30h-2.20zM148.60 24.20h0.90v1.30h-0.90zM7.60 21.00h1.20v1.20h-1.20zM9.20 21.00h1.20v1.20h-1.20zM26.38 21.00h1.20v1.20h-1.20zM27.98 21.00h1.20v1.20h-1.20zM45.16 21.00h1.20v1.20h-1.20zM46.76 21.00h1.20v1.20h-1.20zM63.94 21.00h1.20v1.20h-1.20zM65.54 21.00h1.20v1.20h-1.20zM82.72 21.00h1.20v1.20h-1.20zM84.32 21.00h1.20v1.20h-1.20zM101.50 21.00h1.20v1.20h-1.20zM103.10 21.00h1.20v1.20h-1.20zM120.28 21.00h1.20v1.20h-1.20zM121.88 21.00h1.20v1.20h-1.20zM139.06 21.00h1.20v1.20h-1.20zM140.66 21.00h1.20v1.20h-1.20zM5.00 30.00h1.10v1.40h-1.10zM2.80 31.40h1.10v1.20h-1.10zM11.10 31.40h1.60v1.20h-1.60zM14.40 30.00h1.10v1.40h-1.10zM17.50 31.40h1.10v1.20h-1.10zM11.30 29.20h1.10v1.20h-1.10zM19.60 31.40h1.60v1.20h-1.60zM23.78 30.00h1.10v1.40h-1.10zM29.88 30.20h1.60v1.20h-1.60zM33.18 30.00h1.10v1.40h-1.10zM37.38 31.40h1.10v1.20h-1.10zM30.08 31.40h1.10v1.20h-1.10zM42.56 30.00h1.10v1.40h-1.10zM45.66 31.40h1.10v1.20h-1.10zM39.46 30.20h1.10v1.20h-1.10zM48.66 30.20h1.60v1.20h-1.60zM51.96 30.00h1.10v1.40h-1.10zM56.16 29.20h1.10v1.20h-1.10zM48.86 30.20h1.10v1.20h-1.10zM61.34 30.00h1.10v1.40h-1.10zM65.54 31.40h1.10v1.20h-1.10zM58.24 31.40h1.10v1.20h-1.10zM70.74 30.00h1.10v1.40h-1.10zM72.94 32.20h1.10v1.20h-1.10zM80.12 30.00h1.10v1.40h-1.10zM84.32 30.20h1.10v1.20h-1.10zM77.02 30.20h1.10v1.20h-1.10zM85.32 31.40h1.60v1.20h-1.60zM89.52 30.00h1.10v1.40h-1.10zM92.62 30.20h1.10v1.20h-1.10zM86.42 30.20h1.10v1.20h-1.10zM98.90 30.00h1.10v1.40h-1.10zM103.10 31.40h1.10v1.20h-1.10zM104.10 31.40h1.60v1.20h-1.60zM108.30 30.00h1.10v1.40h-1.10zM112.50 30.20h1.10v1.20h-1.10zM106.10 31.40h1.10v1.20h-1.10zM117.68 30.00h1.10v1.40h-1.10zM122.88 29.20h1.60v1.20h-1.60zM127.08 30.00h1.10v1.40h-1.10zM129.28 32.20h1.10v1.20h-1.10zM124.88 30.20h1.10v1.20h-1.10zM133.18 31.40h1.60v1.20h-1.60zM136.46 30.00h1.10v1.40h-1.10zM140.66 30.20h1.10v1.20h-1.10zM133.36 29.20h1.10v1.20h-1.10zM142.56 30.20h1.60v1.20h-1.60zM145.86 30.00h1.10v1.40h-1.10zM142.76 29.20h1.10v1.20h-1.10z" fill="#1e1e28"/></svg></div>
<div class="a" style="left:476.32px;top:63.10px;width:150.24px;height:37.30px;background:#92a7ff;overflow:hidden;"><div class="a" style="left:0;top:11.60px;width:100%;height:25.70px;background-image:repeating-linear-gradient(90deg,#8193e1 0,#8193e1 1px,rgba(0,0,0,0) 1px,rgba(0,0,0,0) 9.39px);background-position:-9.39px 0;"></div><div class="a" style="left:0;top:11.20px;width:100%;height:0.9px;background:#6674b2"></div><div class="a" style="left:0;top:0;width:0.9px;height:100%;background:#6674b2"></div><svg class="a" style="left:0;top:0" width="150.24" height="37.40"><path d="M1.50 24.20h0.90v1.30h-0.90zM3.80 24.20h1.60v1.30h-1.60zM6.10 24.20h0.90v1.30h-0.90zM7.70 24.20h2.20v1.30h-2.20zM10.90 24.20h1.60v1.30h-1.60zM13.20 24.20h1.60v1.30h-1.60zM16.20 24.20h0.90v1.30h-0.90zM18.50 24.20h0.90v1.30h-0.90zM20.10 24.20h1.60v1.30h-1.60zM22.40 24.20h2.20v1.30h-2.20zM25.60 24.20h0.90v1.30h-0.90zM27.50 24.20h2.20v1.30h-2.20zM30.70 24.20h2.20v1.30h-2.20zM33.60 24.20h0.90v1.30h-0.90zM35.50 24.20h0.90v1.30h-0.90zM37.10 24.20h0.90v1.30h-0.90zM39.00 24.20h2.20v1.30h-2.20zM41.90 24.20h0.90v1.30h-0.90zM43.80 24.20h0.90v1.30h-0.90zM46.10 24.20h1.60v1.30h-1.60zM48.70 24.20h0.90v1.30h-0.90zM50.30 24.20h0.90v1.30h-0.90zM51.90 24.20h1.60v1.30h-1.60zM54.50 24.20h0.90v1.30h-0.90zM56.80 24.20h2.20v1.30h-2.20zM59.70 24.20h0.90v1.30h-0.90zM61.30 24.20h0.90v1.30h-0.90zM62.90 24.20h0.90v1.30h-0.90zM64.50 24.20h1.60v1.30h-1.60zM67.10 24.20h1.60v1.30h-1.60zM70.10 24.20h2.20v1.30h-2.20zM73.30 24.20h0.90v1.30h-0.90zM75.60 24.20h0.90v1.30h-0.90zM77.20 24.20h2.20v1.30h-2.20zM80.80 24.20h0.90v1.30h-0.90zM83.10 24.20h0.90v1.30h-0.90zM84.70 24.20h2.20v1.30h-2.20zM88.30 24.20h2.20v1.30h-2.20zM91.20 24.20h2.20v1.30h-2.20zM94.80 24.20h1.60v1.30h-1.60zM97.80 24.20h0.90v1.30h-0.90zM99.40 24.20h1.60v1.30h-1.60zM102.40 24.20h2.20v1.30h-2.20zM105.30 24.20h0.90v1.30h-0.90zM106.90 24.20h0.90v1.30h-0.90zM108.80 24.20h1.60v1.30h-1.60zM111.10 24.20h1.60v1.30h-1.60zM114.10 24.20h1.60v1.30h-1.60zM116.70 24.20h2.20v1.30h-2.20zM120.30 24.20h2.20v1.30h-2.20zM123.50 24.20h2.20v1.30h-2.20zM127.10 24.20h2.20v1.30h-2.20zM130.00 24.20h2.20v1.30h-2.20zM133.60 24.20h1.60v1.30h-1.60zM136.60 24.20h1.60v1.30h-1.60zM139.20 24.20h0.90v1.30h-0.90zM141.50 24.20h1.60v1.30h-1.60zM144.10 24.20h2.20v1.30h-2.20zM147.70 24.20h0.90v1.30h-0.90zM7.60 21.00h1.20v1.20h-1.20zM9.20 21.00h1.20v1.20h-1.20zM26.38 21.00h1.20v1.20h-1.20zM27.98 21.00h1.20v1.20h-1.20zM45.16 21.00h1.20v1.20h-1.20zM46.76 21.00h1.20v1.20h-1.20zM63.94 21.00h1.20v1.20h-1.20zM65.54 21.00h1.20v1.20h-1.20zM82.72 21.00h1.20v1.20h-1.20zM84.32 21.00h1.20v1.20h-1.20zM101.50 21.00h1.20v1.20h-1.20zM103.10 21.00h1.20v1.20h-1.20zM120.28 21.00h1.20v1.20h-1.20zM121.88 21.00h1.20v1.20h-1.20zM139.06 21.00h1.20v1.20h-1.20zM140.66 21.00h1.20v1.20h-1.20zM5.00 30.00h1.10v1.40h-1.10zM9.20 32.20h1.10v1.20h-1.10zM10.20 31.40h1.60v1.20h-1.60zM14.40 30.00h1.10v1.40h-1.10zM17.50 32.20h1.10v1.20h-1.10zM19.60 29.20h1.60v1.20h-1.60zM23.78 30.00h1.10v1.40h-1.10zM20.68 31.40h1.10v1.20h-1.10zM29.88 29.20h1.60v1.20h-1.60zM33.18 30.00h1.10v1.40h-1.10zM36.28 30.20h1.10v1.20h-1.10zM30.98 31.40h1.10v1.20h-1.10zM38.38 31.40h1.60v1.20h-1.60zM42.56 30.00h1.10v1.40h-1.10zM46.76 29.20h1.10v1.20h-1.10zM39.46 30.20h1.10v1.20h-1.10zM51.96 30.00h1.10v1.40h-1.10zM54.16 30.20h1.10v1.20h-1.10zM49.76 29.20h1.10v1.20h-1.10zM61.34 30.00h1.10v1.40h-1.10zM70.74 30.00h1.10v1.40h-1.10zM74.94 29.20h1.10v1.20h-1.10zM75.94 30.20h1.60v1.20h-1.60zM80.12 30.00h1.10v1.40h-1.10zM83.22 32.20h1.10v1.20h-1.10zM77.02 31.40h1.10v1.20h-1.10zM89.52 30.00h1.10v1.40h-1.10zM92.62 31.40h1.10v1.20h-1.10zM87.32 29.20h1.10v1.20h-1.10zM98.90 30.00h1.10v1.40h-1.10zM102.00 32.20h1.10v1.20h-1.10zM95.80 29.20h1.10v1.20h-1.10zM108.30 30.00h1.10v1.40h-1.10zM112.50 30.20h1.10v1.20h-1.10zM106.10 31.40h1.10v1.20h-1.10zM114.40 29.20h1.60v1.20h-1.60zM117.68 30.00h1.10v1.40h-1.10zM121.88 30.20h1.10v1.20h-1.10zM122.88 29.20h1.60v1.20h-1.60zM127.08 30.00h1.10v1.40h-1.10zM129.28 32.20h1.10v1.20h-1.10zM123.98 31.40h1.10v1.20h-1.10zM132.28 29.20h1.60v1.20h-1.60zM136.46 30.00h1.10v1.40h-1.10zM140.66 29.20h1.10v1.20h-1.10zM134.26 29.20h1.10v1.20h-1.10zM141.66 31.40h1.60v1.20h-1.60zM145.86 30.00h1.10v1.40h-1.10zM148.96 30.20h1.10v1.20h-1.10z" fill="#1e1e28"/></svg></div>
<div class="a" style="left:776.80px;top:63.10px;width:79.40px;height:37.30px;background:#92a7ff;overflow:hidden;"><div class="a" style="left:0;top:11.60px;width:100%;height:25.70px;background-image:repeating-linear-gradient(90deg,#8193e1 0,#8193e1 1px,rgba(0,0,0,0) 1px,rgba(0,0,0,0) 9.39px);background-position:-9.39px 0;"></div><div class="a" style="left:0;top:11.20px;width:100%;height:0.9px;background:#6674b2"></div><div class="a" style="left:0;top:0;width:0.9px;height:100%;background:#6674b2"></div><svg class="a" style="left:0;top:0" width="80.00" height="37.40"><path d="M17.60 24.40h1.60v1.10h-1.60zM20.60 24.40h1.60v1.10h-1.60zM23.20 24.40h2.20v1.10h-2.20zM26.80 24.40h0.90v1.10h-0.90zM28.40 24.40h2.20v1.10h-2.20zM31.60 24.40h2.20v1.10h-2.20zM35.20 24.40h0.90v1.10h-0.90zM36.80 24.40h1.60v1.10h-1.60zM39.40 24.40h0.90v1.10h-0.90zM41.00 24.40h2.20v1.10h-2.20zM44.60 24.40h2.20v1.10h-2.20zM47.50 24.40h2.20v1.10h-2.20zM50.70 24.40h1.60v1.10h-1.60zM53.70 24.40h2.20v1.10h-2.20zM57.30 24.40h2.20v1.10h-2.20zM60.20 24.40h2.20v1.10h-2.20zM63.10 24.40h2.20v1.10h-2.20zM66.00 24.40h0.90v1.10h-0.90zM67.60 24.40h0.90v1.10h-0.90zM69.20 24.40h2.20v1.10h-2.20zM72.10 24.40h1.60v1.10h-1.60zM74.70 24.40h1.60v1.10h-1.60zM6.60 21.50h3.00v1.10h-3.00zM19.60 21.50h10.00v1.10h-10.00zM42.60 21.50h4.00v1.10h-4.00zM61.00 21.50h11.60v1.10h-11.60zM36.00 15.90h1.10v1.10h-1.10zM17.60 30.60h1.00v1.00h-1.00zM20.60 30.60h1.00v1.00h-1.00zM23.60 31.80h1.00v1.00h-1.00zM25.80 29.40h1.00v1.00h-1.00zM28.80 29.40h1.00v1.00h-1.00zM31.00 31.80h1.00v1.00h-1.00zM33.20 33.80h1.00v1.00h-1.00zM34.80 31.80h1.00v1.00h-1.00zM37.00 30.60h1.00v1.00h-1.00zM40.00 31.80h1.00v1.00h-1.00zM41.60 29.40h1.00v1.00h-1.00zM44.60 29.40h1.00v1.00h-1.00zM46.80 29.40h1.00v1.00h-1.00zM49.00 33.00h1.00v1.00h-1.00zM50.60 29.40h1.00v1.00h-1.00zM53.60 29.40h1.00v1.00h-1.00zM55.20 30.60h1.00v1.00h-1.00zM56.80 33.00h1.00v1.00h-1.00zM59.00 33.00h1.00v1.00h-1.00zM61.20 29.40h1.00v1.00h-1.00zM64.20 30.60h1.00v1.00h-1.00zM67.20 31.80h1.00v1.00h-1.00zM69.40 29.40h1.00v1.00h-1.00zM71.60 31.80h1.00v1.00h-1.00zM73.20 33.00h1.00v1.00h-1.00zM74.80 30.60h1.00v1.00h-1.00zM76.40 29.40h1.00v1.00h-1.00z" fill="#1e1e28"/></svg></div>
<div class="a" style="left:25.60px;top:102.10px;width:75.12px;height:36.40px;background:#92a7ff;overflow:hidden;"><div class="a" style="left:0;top:11.60px;width:100%;height:24.80px;background-image:repeating-linear-gradient(90deg,#8193e1 0,#8193e1 1px,rgba(0,0,0,0) 1px,rgba(0,0,0,0) 9.39px);background-position:-9.39px 0;"></div><div class="a" style="left:0;top:11.20px;width:100%;height:0.9px;background:#6674b2"></div><div class="a" style="left:0;top:0;width:0.9px;height:100%;background:#6674b2"></div><svg class="a" style="left:0;top:0" width="75.12" height="37"><path d="M0.8 14.3L1.3 14.5L1.8 15.0L2.3 14.3L2.8 14.7L3.3 14.8L3.8 16.4L4.3 15.9L4.8 16.3L5.3 14.1L5.8 14.7L6.3 14.2L6.8 16.0L7.3 16.0L7.8 15.1L8.3 15.0L8.8 15.1L9.3 15.3L9.8 16.1L10.3 16.5L10.8 14.4L11.3 15.0L11.8 14.5L12.3 15.0L12.8 15.8L13.3 16.1L13.8 14.6L14.3 14.4L14.8 15.1L15.3 16.1L15.8 16.2L16.3 15.9L16.8 17.2L17.3 17.2L17.8 17.2L18.3 17.2L18.8 16.4L19.3 16.4L19.8 14.9L20.3 14.5L20.8 15.0L21.3 14.6L21.8 15.2L22.3 15.1L22.8 16.5L23.3 16.1L23.8 15.0L24.3 15.0L24.8 14.7L25.3 15.9L25.8 15.8L26.3 14.3L26.8 14.8L27.3 15.1L27.8 14.9L28.3 16.1L28.8 16.4L29.3 14.4L29.8 14.8L30.3 14.7L30.8 14.7L31.3 15.8L31.8 15.8L32.3 14.5L32.8 14.9L33.3 14.9L33.8 14.7L34.3 16.3L34.8 16.4L35.3 16.5L35.8 17.2L36.3 17.2L36.8 17.2L37.3 17.2L37.8 15.9L38.3 15.9L38.8 15.0L39.3 14.3L39.8 14.3L40.3 14.5L40.8 14.2L41.3 15.1L41.8 16.4L42.3 16.0L42.8 15.0L43.3 15.0L43.8 15.1L44.3 15.8L44.8 15.8L45.3 15.0L45.8 14.9L46.3 14.5L46.8 14.6L47.3 16.5L47.8 16.6L48.3 14.7L48.8 14.4L49.3 14.6L49.8 14.1L50.3 15.7L50.8 15.7L51.3 14.7L51.8 14.7L52.3 14.8L52.8 16.2L53.3 16.2L53.8 16.2L54.3 17.2L54.8 17.2L55.3 17.2L55.8 17.2L56.3 17.2L56.8 16.4L57.3 15.2L57.8 15.2L58.3 15.2L58.8 14.5L59.3 14.6L59.8 15.1L60.3 16.2L60.8 15.9L61.3 14.4L61.8 14.6L62.3 14.9L62.8 15.9L63.3 16.0L63.8 15.4L64.3 15.2L64.8 14.3L65.3 14.5L65.8 16.5L66.3 16.4L66.8 14.7L67.3 14.2L67.8 14.5L68.3 15.0L68.8 15.9L69.3 15.5L69.8 15.3L70.3 14.8L70.8 15.4L71.3 14.5L71.8 16.4L72.3 15.9L72.8 16.2L73.3 17.2L73.8 17.2L74.3 17.2L74.3 19.0L73.8 19.0L73.3 19.0L72.8 20.0L72.3 20.2L71.8 19.6L71.3 21.4L70.8 20.7L70.3 21.1L69.8 20.5L69.3 20.7L68.8 20.1L68.3 20.9L67.8 21.6L67.3 21.5L66.8 21.1L66.3 19.7L65.8 19.5L65.3 21.6L64.8 21.8L64.3 20.7L63.8 20.6L63.3 20.1L62.8 20.1L62.3 20.9L61.8 21.2L61.3 21.7L60.8 20.1L60.3 19.9L59.8 20.9L59.3 21.5L58.8 21.4L58.3 20.7L57.8 20.6L57.3 20.7L56.8 19.6L56.3 19.0L55.8 18.9L55.3 19.0L54.8 18.9L54.3 18.9L53.8 19.8L53.3 19.8L52.8 19.7L52.3 21.2L51.8 21.4L51.3 21.2L50.8 20.4L50.3 20.3L49.8 22.1L49.3 21.3L48.8 21.7L48.3 21.0L47.8 19.5L47.3 19.7L46.8 21.4L46.3 21.3L45.8 21.1L45.3 20.9L44.8 20.2L44.3 20.1L43.8 20.9L43.3 21.1L42.8 20.8L42.3 19.9L41.8 19.6L41.3 20.7L40.8 21.6L40.3 21.4L39.8 21.5L39.3 21.4L38.8 21.1L38.3 20.1L37.8 20.1L37.3 19.0L36.8 18.9L36.3 18.9L35.8 18.9L35.3 19.7L34.8 19.8L34.3 19.9L33.8 21.1L33.3 21.3L32.8 21.3L32.3 21.5L31.8 20.2L31.3 20.1L30.8 21.4L30.3 21.5L29.8 21.3L29.3 21.3L28.8 19.6L28.3 19.9L27.8 21.3L27.3 20.9L26.8 20.9L26.3 21.7L25.8 20.3L25.3 20.1L24.8 21.1L24.3 20.9L23.8 20.9L23.3 20.0L22.8 19.5L22.3 20.9L21.8 20.5L21.3 21.3L20.8 20.8L20.3 21.2L19.8 20.8L19.3 19.7L18.8 19.7L18.3 19.0L17.8 19.0L17.3 18.9L16.8 18.9L16.3 20.0L15.8 20.0L15.3 20.0L14.8 20.7L14.3 21.6L13.8 21.5L13.3 20.1L12.8 20.2L12.3 21.1L11.8 21.4L11.3 21.0L10.8 21.4L10.3 19.5L9.8 19.8L9.3 20.8L8.8 20.7L8.3 21.1L7.8 21.0L7.3 19.9L6.8 20.1L6.3 21.7L5.8 21.4L5.3 21.7L4.8 19.7L4.3 20.1L3.8 19.6L3.3 21.4L2.8 21.1L2.3 21.8L1.8 21.0L1.3 21.7L0.8 21.7Z" fill="#1c1c22"/><path d="M0.8 27.1L1.3 27.5L1.8 26.6L2.3 27.1L2.8 27.2L3.3 27.4L3.8 28.6L4.3 28.6L4.8 28.3L5.3 27.2L5.8 26.9L6.3 26.5L6.8 28.4L7.3 28.4L7.8 26.9L8.3 27.4L8.8 27.2L9.3 27.7L9.8 28.8L10.3 28.7L10.8 27.2L11.3 27.0L11.8 26.8L12.3 27.2L12.8 28.4L13.3 28.5L13.8 27.5L14.3 27.7L14.8 27.7L15.3 28.3L15.8 28.5L16.3 28.7L16.8 29.6L17.3 29.6L17.8 29.6L18.3 29.6L18.8 28.6L19.3 28.7L19.8 27.3L20.3 26.6L20.8 26.8L21.3 26.6L21.8 27.2L22.3 27.6L22.8 28.5L23.3 28.3L23.8 27.1L24.3 27.5L24.8 27.0L25.3 28.2L25.8 28.1L26.3 27.7L26.8 27.7L27.3 27.2L27.8 26.7L28.3 28.6L28.8 28.8L29.3 27.5L29.8 27.5L30.3 26.4L30.8 26.9L31.3 28.1L31.8 28.3L32.3 27.4L32.8 27.8L33.3 27.7L33.8 27.0L34.3 28.3L34.8 28.7L35.3 28.8L35.8 29.6L36.3 29.6L36.8 29.6L37.3 29.6L37.8 28.3L38.3 28.4L38.8 27.5L39.3 27.1L39.8 27.0L40.3 26.7L40.8 27.4L41.3 26.7L41.8 28.4L42.3 28.5L42.8 27.2L43.3 26.5L43.8 27.1L44.3 28.2L44.8 28.0L45.3 26.8L45.8 27.1L46.3 26.8L46.8 27.5L47.3 28.7L47.8 29.0L48.3 27.0L48.8 27.3L49.3 27.0L49.8 26.6L50.3 28.3L50.8 28.3L51.3 26.9L51.8 27.6L52.3 27.4L52.8 28.8L53.3 28.3L53.8 28.9L54.3 29.6L54.8 29.6L55.3 29.6L55.8 29.6L56.3 29.6L56.8 28.8L57.3 26.7L57.8 27.7L58.3 27.4L58.8 26.6L59.3 27.5L59.8 27.2L60.3 28.5L60.8 28.9L61.3 27.0L61.8 26.7L62.3 27.4L62.8 28.3L63.3 27.7L63.8 28.4L64.3 27.6L64.8 27.5L65.3 27.6L65.8 28.9L66.3 28.5L66.8 27.3L67.3 26.9L67.8 27.2L68.3 27.0L68.8 28.5L69.3 28.0L69.8 27.1L70.3 26.9L70.8 27.5L71.3 26.9L71.8 28.3L72.3 28.3L72.8 28.7L73.3 29.6L73.8 29.6L74.3 29.6L74.3 31.3L73.8 31.3L73.3 31.4L72.8 32.1L72.3 32.6L71.8 32.4L71.3 34.0L70.8 33.4L70.3 33.9L69.8 33.7L69.3 32.8L68.8 32.4L68.3 33.7L67.8 33.4L67.3 34.0L66.8 33.7L66.3 32.3L65.8 32.0L65.3 33.0L64.8 33.2L64.3 33.4L63.8 32.5L63.3 33.2L62.8 32.4L62.3 33.3L61.8 33.8L61.3 33.7L60.8 31.9L60.3 32.4L59.8 33.4L59.3 33.2L58.8 34.3L58.3 33.5L57.8 33.1L57.3 34.0L56.8 32.2L56.3 31.4L55.8 31.3L55.3 31.3L54.8 31.3L54.3 31.3L53.8 31.9L53.3 32.7L52.8 32.1L52.3 33.5L51.8 33.3L51.3 33.7L50.8 32.4L50.3 32.4L49.8 34.2L49.3 33.6L48.8 33.7L48.3 33.7L47.8 31.8L47.3 32.2L46.8 33.1L46.3 33.7L45.8 33.4L45.3 34.1L44.8 32.9L44.3 32.7L43.8 33.5L43.3 34.3L42.8 33.6L42.3 32.5L41.8 32.6L41.3 34.3L40.8 33.1L40.3 33.9L39.8 34.0L39.3 33.5L38.8 33.1L38.3 32.4L37.8 32.6L37.3 31.3L36.8 31.3L36.3 31.3L35.8 31.3L35.3 32.0L34.8 32.1L34.3 32.4L33.8 33.8L33.3 33.1L32.8 32.8L32.3 33.3L31.8 32.4L31.3 32.6L30.8 34.0L30.3 34.5L29.8 33.4L29.3 33.2L28.8 32.1L28.3 32.4L27.8 33.8L27.3 33.5L26.8 33.3L26.3 32.9L25.8 32.7L25.3 32.6L24.8 33.6L24.3 33.4L23.8 33.7L23.3 32.7L22.8 32.4L22.3 33.0L21.8 33.7L21.3 34.0L20.8 33.7L20.3 34.2L19.8 33.3L19.3 32.3L18.8 32.4L18.3 31.3L17.8 31.3L17.3 31.4L16.8 31.3L16.3 32.1L15.8 32.3L15.3 32.7L14.8 33.3L14.3 33.0L13.8 33.4L13.3 32.2L12.8 32.4L12.3 33.3L11.8 34.1L11.3 33.8L10.8 33.7L10.3 32.2L9.8 32.2L9.3 33.2L8.8 33.7L8.3 33.1L7.8 33.7L7.3 32.4L6.8 32.6L6.3 34.4L5.8 33.9L5.3 33.4L4.8 32.6L4.3 32.2L3.8 32.3L3.3 33.4L2.8 33.5L2.3 33.7L1.8 33.8L1.3 33.5L0.8 33.7Z" fill="#1c1c22"/></svg></div>
<div class="a" style="left:100.72px;top:102.10px;width:75.12px;height:36.40px;background:#92a7ff;overflow:hidden;"><div class="a" style="left:0;top:11.60px;width:100%;height:24.80px;background-image:repeating-linear-gradient(90deg,#8193e1 0,#8193e1 1px,rgba(0,0,0,0) 1px,rgba(0,0,0,0) 9.39px);background-position:-9.39px 0;"></div><div class="a" style="left:0;top:11.20px;width:100%;height:0.9px;background:#6674b2"></div><div class="a" style="left:0;top:0;width:0.9px;height:100%;background:#6674b2"></div><svg class="a" style="left:0;top:0" width="75.12" height="37"><path d="M0.8 15.1L1.3 14.6L1.8 15.1L2.3 14.4L2.8 14.7L3.3 15.3L3.8 16.1L4.3 16.0L4.8 16.3L5.3 14.0L5.8 14.1L6.3 15.1L6.8 15.6L7.3 15.3L7.8 15.1L8.3 15.2L8.8 14.8L9.3 14.9L9.8 16.5L10.3 16.1L10.8 14.3L11.3 14.0L11.8 14.3L12.3 14.5L12.8 16.1L13.3 15.6L13.8 14.5L14.3 15.0L14.8 15.0L15.3 15.8L15.8 16.5L16.3 16.0L16.8 17.2L17.3 17.2L17.8 17.2L18.3 17.2L18.8 16.4L19.3 16.3L19.8 14.9L20.3 15.0L20.8 15.2L21.3 14.4L21.8 14.6L22.3 14.3L22.8 16.2L23.3 15.9L23.8 14.1L24.3 14.7L24.8 14.1L25.3 16.0L25.8 15.4L26.3 14.4L26.8 15.0L27.3 14.8L27.8 15.2L28.3 16.1L28.8 16.2L29.3 14.9L29.8 14.5L30.3 15.1L30.8 14.2L31.3 15.5L31.8 15.9L32.3 14.6L32.8 14.9L33.3 14.6L33.8 14.7L34.3 16.5L34.8 16.1L35.3 16.1L35.8 17.2L36.3 17.2L36.8 17.2L37.3 17.2L37.8 16.4L38.3 16.1L38.8 14.7L39.3 14.8L39.8 15.1L40.3 14.9L40.8 14.7L41.3 14.5L41.8 16.0L42.3 16.5L42.8 15.1L43.3 14.9L43.8 14.9L44.3 15.8L44.8 15.7L45.3 14.3L45.8 14.7L46.3 14.3L46.8 14.6L47.3 16.2L47.8 16.4L48.3 14.5L48.8 15.1L49.3 14.0L49.8 14.8L50.3 16.1L50.8 16.1L51.3 14.7L51.8 14.8L52.3 14.8L52.8 16.1L53.3 16.2L53.8 16.4L54.3 17.2L54.8 17.2L55.3 17.2L55.8 17.2L56.3 17.2L56.8 16.4L57.3 14.8L57.8 14.3L58.3 14.6L58.8 14.6L59.3 14.5L59.8 15.0L60.3 16.2L60.8 16.0L61.3 14.0L61.8 14.8L62.3 14.7L62.8 15.6L63.3 15.8L63.8 15.4L64.3 15.2L64.8 14.5L65.3 14.9L65.8 16.2L66.3 16.1L66.8 14.9L67.3 15.0L67.8 14.9L68.3 14.8L68.8 15.5L69.3 15.9L69.8 15.2L70.3 15.0L70.8 15.2L71.3 15.4L71.8 15.9L72.3 16.5L72.8 16.5L73.3 17.2L73.8 17.2L74.3 17.2L74.3 18.9L73.8 18.9L73.3 18.9L72.8 19.7L72.3 19.6L71.8 20.2L71.3 20.7L70.8 20.9L70.3 20.8L69.8 20.7L69.3 20.2L68.8 20.5L68.3 21.1L67.8 21.1L67.3 21.1L66.8 21.3L66.3 19.9L65.8 19.8L65.3 21.1L64.8 21.2L64.3 21.0L63.8 20.5L63.3 20.4L62.8 20.3L62.3 21.1L61.8 21.1L61.3 21.6L60.8 20.2L60.3 19.9L59.8 21.1L59.3 21.5L58.8 21.6L58.3 21.5L57.8 21.8L57.3 21.3L56.8 19.6L56.3 19.0L55.8 18.9L55.3 18.9L54.8 19.0L54.3 19.0L53.8 19.6L53.3 19.8L52.8 19.9L52.3 21.1L51.8 20.9L51.3 21.3L50.8 20.0L50.3 19.8L49.8 21.4L49.3 21.8L48.8 21.0L48.3 21.4L47.8 19.7L47.3 20.0L46.8 21.3L46.3 21.4L45.8 21.2L45.3 21.5L44.8 20.2L44.3 20.1L43.8 21.2L43.3 21.1L42.8 21.0L42.3 19.6L41.8 20.1L41.3 21.6L40.8 21.0L40.3 21.2L39.8 20.7L39.3 21.1L38.8 21.1L38.3 19.9L37.8 19.8L37.3 18.9L36.8 18.9L36.3 18.9L35.8 19.0L35.3 19.9L34.8 20.1L34.3 19.6L33.8 21.4L33.3 21.0L32.8 21.0L32.3 21.3L31.8 20.2L31.3 20.5L30.8 21.9L30.3 20.7L29.8 21.5L29.3 21.3L28.8 19.9L28.3 20.1L27.8 20.7L27.3 21.0L26.8 20.9L26.3 21.3L25.8 20.6L25.3 20.2L24.8 21.6L24.3 21.1L23.8 21.8L23.3 20.2L22.8 20.0L22.3 21.9L21.8 21.5L21.3 21.4L20.8 20.9L20.3 20.8L19.8 21.1L19.3 19.9L18.8 19.6L18.3 18.9L17.8 18.9L17.3 19.0L16.8 18.9L16.3 20.2L15.8 19.5L15.3 20.1L14.8 20.9L14.3 20.9L13.8 21.6L13.3 20.3L12.8 20.0L12.3 21.6L11.8 21.8L11.3 22.1L10.8 21.5L10.3 19.8L9.8 19.5L9.3 21.0L8.8 21.2L8.3 21.0L7.8 21.0L7.3 20.7L6.8 20.2L6.3 20.8L5.8 21.8L5.3 22.0L4.8 19.6L4.3 20.0L3.8 19.8L3.3 20.6L2.8 21.1L2.3 21.5L1.8 21.0L1.3 21.3L0.8 20.9Z" fill="#1c1c22"/><path d="M0.8 27.2L1.3 27.3L1.8 26.8L2.3 27.1L2.8 27.5L3.3 27.1L3.8 28.4L4.3 28.3L4.8 28.9L5.3 27.5L5.8 26.7L6.3 27.3L6.8 27.8L7.3 27.9L7.8 26.8L8.3 27.4L8.8 27.4L9.3 26.7L9.8 29.0L10.3 28.6L10.8 27.2L11.3 27.5L11.8 26.8L12.3 27.4L12.8 27.9L13.3 28.3L13.8 27.1L14.3 27.8L14.8 27.6L15.3 28.7L15.8 28.5L16.3 28.4L16.8 29.6L17.3 29.6L17.8 29.6L18.3 29.6L18.8 28.5L19.3 28.3L19.8 26.7L20.3 26.8L20.8 27.3L21.3 27.0L21.8 27.0L22.3 26.7L22.8 28.3L23.3 28.2L23.8 26.7L24.3 26.5L24.8 27.5L25.3 28.3L25.8 27.8L26.3 27.6L26.8 27.2L27.3 27.7L27.8 27.5L28.3 28.5L28.8 28.5L29.3 27.4L29.8 27.1L30.3 26.7L30.8 26.8L31.3 28.3L31.8 28.2L32.3 27.3L32.8 27.8L33.3 27.2L33.8 27.1L34.3 28.2L34.8 28.6L35.3 28.5L35.8 29.6L36.3 29.6L36.8 29.6L37.3 29.6L37.8 28.6L38.3 28.6L38.8 27.3L39.3 27.0L39.8 26.8L40.3 27.3L40.8 26.8L41.3 26.7L41.8 28.3L42.3 28.8L42.8 26.8L43.3 26.6L43.8 26.8L44.3 28.3L44.8 28.0L45.3 27.5L45.8 27.3L46.3 27.3L46.8 27.5L47.3 28.6L47.8 29.0L48.3 26.8L48.8 26.7L49.3 27.0L49.8 26.4L50.3 28.1L50.8 28.3L51.3 27.1L51.8 27.4L52.3 27.6L52.8 28.9L53.3 28.6L53.8 28.5L54.3 29.6L54.8 29.6L55.3 29.6L55.8 29.6L56.3 29.6L56.8 28.5L57.3 27.5L57.8 27.1L58.3 27.3L58.8 27.5L59.3 27.1L59.8 27.4L60.3 28.8L60.8 28.5L61.3 27.0L61.8 27.5L62.3 27.2L62.8 28.1L63.3 28.4L63.8 27.7L64.3 27.1L64.8 26.7L65.3 26.6L65.8 28.6L66.3 28.9L66.8 26.8L67.3 27.1L67.8 27.5L68.3 27.4L68.8 28.0L69.3 28.5L69.8 27.7L70.3 27.4L70.8 27.5L71.3 27.4L71.8 28.5L72.3 28.5L72.8 28.8L73.3 29.6L73.8 29.6L74.3 29.6L74.3 31.3L73.8 31.4L73.3 31.3L72.8 32.1L72.3 32.3L71.8 32.4L71.3 33.5L70.8 33.5L70.3 33.3L69.8 33.1L69.3 32.3L68.8 32.9L68.3 33.2L67.8 33.2L67.3 33.8L66.8 34.0L66.3 31.9L65.8 32.3L65.3 34.2L64.8 33.8L64.3 33.5L63.8 33.2L63.3 32.4L62.8 32.8L62.3 33.8L61.8 33.2L61.3 33.9L60.8 32.4L60.3 32.0L59.8 33.4L59.3 33.4L58.8 33.4L58.3 33.6L57.8 33.4L57.3 33.1L56.8 32.5L56.3 31.3L55.8 31.3L55.3 31.3L54.8 31.4L54.3 31.3L53.8 32.4L53.3 32.2L52.8 32.0L52.3 33.3L51.8 33.4L51.3 33.7L50.8 32.5L50.3 32.8L49.8 34.2L49.3 33.7L48.8 34.1L48.3 33.7L47.8 32.0L47.3 32.2L46.8 33.0L46.3 33.3L45.8 33.5L45.3 33.4L44.8 32.9L44.3 32.5L43.8 33.8L43.3 34.0L42.8 33.7L42.3 32.0L41.8 32.6L41.3 33.9L40.8 34.0L40.3 33.4L39.8 34.1L39.3 33.8L38.8 33.5L38.3 32.3L37.8 32.3L37.3 31.3L36.8 31.4L36.3 31.3L35.8 31.4L35.3 32.4L34.8 32.1L34.3 32.5L33.8 33.8L33.3 33.7L32.8 33.1L32.3 33.5L31.8 32.5L31.3 32.5L30.8 33.8L30.3 34.2L29.8 33.8L29.3 33.2L28.8 32.3L28.3 32.4L27.8 33.1L27.3 33.2L26.8 33.6L26.3 33.0L25.8 33.0L25.3 32.6L24.8 33.3L24.3 34.1L23.8 34.2L23.3 32.6L22.8 32.4L22.3 34.1L21.8 33.6L21.3 33.8L20.8 33.5L20.3 33.6L19.8 34.3L19.3 32.5L18.8 32.4L18.3 31.4L17.8 31.3L17.3 31.4L16.8 31.4L16.3 32.4L15.8 32.3L15.3 32.2L14.8 33.0L14.3 33.2L13.8 33.7L13.3 32.6L12.8 32.9L12.3 33.2L11.8 34.0L11.3 33.3L10.8 33.3L10.3 32.1L9.8 31.9L9.3 33.7L8.8 33.5L8.3 33.3L7.8 33.8L7.3 32.9L6.8 33.1L6.3 33.2L5.8 34.2L5.3 33.5L4.8 32.0L4.3 32.7L3.8 32.6L3.3 33.5L2.8 33.2L2.3 33.4L1.8 34.1L1.3 33.3L0.8 33.7Z" fill="#1c1c22"/></svg></div>
<div class="a" style="left:175.84px;top:102.10px;width:75.12px;height:36.40px;background:#92a7ff;overflow:hidden;"><div class="a" style="left:0;top:11.60px;width:100%;height:24.80px;background-image:repeating-linear-gradient(90deg,#8193e1 0,#8193e1 1px,rgba(0,0,0,0) 1px,rgba(0,0,0,0) 9.39px);background-position:-9.39px 0;"></div><div class="a" style="left:0;top:11.20px;width:100%;height:0.9px;background:#6674b2"></div><div class="a" style="left:0;top:0;width:0.9px;height:100%;background:#6674b2"></div><svg class="a" style="left:0;top:0" width="75.12" height="37"><path d="M0.8 14.3L1.3 15.3L1.8 15.1L2.3 14.6L2.8 14.3L3.3 14.2L3.8 16.1L4.3 16.0L4.8 16.0L5.3 14.1L5.8 14.8L6.3 14.2L6.8 15.3L7.3 15.3L7.8 14.5L8.3 15.0L8.8 15.0L9.3 14.3L9.8 16.5L10.3 16.2L10.8 15.1L11.3 15.1L11.8 14.6L12.3 14.7L12.8 15.5L13.3 15.9L13.8 15.1L14.3 14.9L14.8 14.7L15.3 16.4L15.8 16.3L16.3 16.2L16.8 17.2L17.3 17.2L17.8 17.2L18.3 17.2L18.8 16.3L19.3 16.4L19.8 14.7L20.3 14.6L20.8 14.5L21.3 14.8L21.8 14.3L22.3 14.4L22.8 16.1L23.3 15.9L23.8 14.6L24.3 14.4L24.8 14.2L25.3 15.5L25.8 16.0L26.3 14.6L26.8 15.1L27.3 14.8L27.8 15.2L28.3 16.4L28.8 16.5L29.3 14.2L29.8 14.8L30.3 14.6L30.8 14.8L31.3 15.5L31.8 16.2L32.3 14.6L32.8 15.2L33.3 15.0L33.8 14.7L34.3 16.3L34.8 16.3L35.3 16.1L35.8 17.2L36.3 17.2L36.8 17.2L37.3 17.2L37.8 16.0L38.3 16.1L38.8 14.4L39.3 14.7L39.8 14.9L40.3 14.4L40.8 14.9L41.3 15.1L41.8 15.9L42.3 16.2L42.8 14.6L43.3 14.8L43.8 14.2L44.3 15.5L44.8 15.3L45.3 14.9L45.8 14.5L46.3 14.6L46.8 15.1L47.3 16.4L47.8 16.3L48.3 15.0L48.8 14.2L49.3 14.5L49.8 15.1L50.3 15.7L50.8 15.6L51.3 15.4L51.8 14.9L52.3 14.5L52.8 16.1L53.3 16.3L53.8 15.9L54.3 17.2L54.8 17.2L55.3 17.2L55.8 17.2L56.3 17.2L56.8 16.3L57.3 14.8L57.8 15.1L58.3 14.8L58.8 14.4L59.3 14.7L59.8 14.2L60.3 16.5L60.8 16.2L61.3 15.0L61.8 14.8L62.3 15.1L62.8 15.4L63.3 15.6L63.8 15.6L64.3 14.9L64.8 14.3L65.3 14.8L65.8 16.6L66.3 16.2L66.8 14.7L67.3 15.1L67.8 15.0L68.3 14.3L68.8 15.8L69.3 15.7L69.8 14.5L70.3 15.1L70.8 14.7L71.3 15.1L71.8 16.1L72.3 16.2L72.8 16.1L73.3 17.2L73.8 17.2L74.3 17.2L74.3 19.0L73.8 18.9L73.3 19.0L72.8 20.0L72.3 20.0L71.8 19.8L71.3 20.8L70.8 21.4L70.3 20.7L69.8 21.5L69.3 20.1L68.8 20.2L68.3 21.5L67.8 21.0L67.3 20.7L66.8 21.1L66.3 19.9L65.8 19.5L65.3 21.2L64.8 21.7L64.3 21.0L63.8 20.2L63.3 20.5L62.8 20.5L62.3 21.1L61.8 21.0L61.3 20.8L60.8 19.8L60.3 19.7L59.8 21.6L59.3 21.4L58.8 21.4L58.3 21.0L57.8 20.9L57.3 21.1L56.8 19.7L56.3 18.9L55.8 19.0L55.3 18.9L54.8 18.9L54.3 19.0L53.8 20.2L53.3 19.9L52.8 20.0L52.3 21.4L51.8 21.2L51.3 20.5L50.8 20.3L50.3 20.5L49.8 21.1L49.3 21.5L48.8 21.8L48.3 21.0L47.8 19.9L47.3 19.6L46.8 20.7L46.3 21.2L45.8 21.4L45.3 21.3L44.8 20.6L44.3 20.7L43.8 21.7L43.3 21.0L42.8 21.2L42.3 19.9L41.8 20.1L41.3 21.0L40.8 21.1L40.3 21.2L39.8 21.2L39.3 21.1L38.8 21.4L38.3 20.1L37.8 19.9L37.3 18.9L36.8 18.9L36.3 18.9L35.8 19.0L35.3 19.9L34.8 19.6L34.3 19.7L33.8 21.2L33.3 21.0L32.8 20.7L32.3 21.1L31.8 19.9L31.3 20.6L30.8 21.3L30.3 21.2L29.8 20.9L29.3 21.6L28.8 19.5L28.3 19.6L27.8 20.9L27.3 21.0L26.8 21.0L26.3 21.3L25.8 20.0L25.3 20.6L24.8 21.8L24.3 21.4L23.8 21.5L23.3 20.3L22.8 19.9L22.3 21.5L21.8 21.6L21.3 21.3L20.8 21.2L20.3 21.2L19.8 21.4L19.3 19.6L18.8 19.8L18.3 18.9L17.8 18.9L17.3 18.9L16.8 18.9L16.3 20.0L15.8 19.8L15.3 19.8L14.8 21.2L14.3 21.0L13.8 20.9L13.3 20.2L12.8 20.4L12.3 21.3L11.8 21.4L11.3 21.1L10.8 20.9L10.3 19.7L9.8 19.6L9.3 21.7L8.8 21.1L8.3 21.2L7.8 21.5L7.3 20.8L6.8 20.8L6.3 21.8L5.8 21.0L5.3 21.8L4.8 19.9L4.3 20.1L3.8 20.1L3.3 21.6L2.8 21.4L2.3 21.3L1.8 20.7L1.3 20.9L0.8 21.5Z" fill="#1c1c22"/><path d="M0.8 27.1L1.3 27.4L1.8 27.3L2.3 27.3L2.8 27.1L3.3 27.2L3.8 28.4L4.3 28.5L4.8 28.4L5.3 26.8L5.8 27.3L6.3 27.1L6.8 28.2L7.3 28.1L7.8 27.5L8.3 27.1L8.8 27.6L9.3 27.2L9.8 29.0L10.3 28.9L10.8 27.0L11.3 26.9L11.8 27.3L12.3 27.5L12.8 28.5L13.3 28.2L13.8 27.2L14.3 27.4L14.8 27.6L15.3 28.6L15.8 28.7L16.3 28.8L16.8 29.6L17.3 29.6L17.8 29.6L18.3 29.6L18.8 28.6L19.3 28.8L19.8 26.8L20.3 27.4L20.8 26.8L21.3 27.4L21.8 27.7L22.3 27.4L22.8 28.6L23.3 28.9L23.8 27.2L24.3 26.6L24.8 27.2L25.3 27.8L25.8 28.4L26.3 27.5L26.8 27.3L27.3 26.7L27.8 26.7L28.3 29.0L28.8 28.6L29.3 26.5L29.8 27.5L30.3 27.2L30.8 26.6L31.3 28.3L31.8 28.4L32.3 27.4L32.8 27.2L33.3 26.9L33.8 27.4L34.3 28.7L34.8 28.8L35.3 28.7L35.8 29.6L36.3 29.6L36.8 29.6L37.3 29.6L37.8 28.7L38.3 28.7L38.8 26.7L39.3 27.6L39.8 27.1L40.3 27.2L40.8 27.7L41.3 26.9L41.8 28.6L42.3 28.5L42.8 27.0L43.3 27.2L43.8 27.4L44.3 28.0L44.8 28.0L45.3 27.4L45.8 27.0L46.3 26.9L46.8 27.1L47.3 28.8L47.8 28.8L48.3 27.1L48.8 27.4L49.3 27.0L49.8 27.1L50.3 28.0L50.8 28.4L51.3 27.0L51.8 27.5L52.3 27.5L52.8 28.7L53.3 28.3L53.8 28.8L54.3 29.6L54.8 29.6L55.3 29.6L55.8 29.6L56.3 29.6L56.8 28.6L57.3 27.3L57.8 27.2L58.3 26.8L58.8 27.3L59.3 27.2L59.8 26.7L60.3 28.5L60.8 28.5L61.3 26.9L61.8 27.1L62.3 26.7L62.8 27.7L63.3 27.7L63.8 28.0L64.3 27.7L64.8 26.9L65.3 26.9L65.8 28.6L66.3 28.8L66.8 27.1L67.3 27.5L67.8 27.3L68.3 26.9L68.8 28.5L69.3 28.0L69.8 27.1L70.3 27.7L70.8 27.7L71.3 27.3L71.8 28.7L72.3 28.7L72.8 28.4L73.3 29.6L73.8 29.6L74.3 29.6L74.3 31.4L73.8 31.3L73.3 31.4L72.8 32.5L72.3 32.3L71.8 32.3L71.3 33.6L70.8 32.9L70.3 33.2L69.8 33.7L69.3 33.0L68.8 32.2L68.3 33.5L67.8 33.3L67.3 33.1L66.8 33.6L66.3 32.2L65.8 32.2L65.3 33.6L64.8 34.0L64.3 33.2L63.8 32.8L63.3 33.2L62.8 33.2L62.3 34.0L61.8 33.6L61.3 33.9L60.8 32.5L60.3 32.4L59.8 34.2L59.3 33.7L58.8 33.4L58.3 33.7L57.8 33.6L57.3 33.6L56.8 32.1L56.3 31.3L55.8 31.4L55.3 31.4L54.8 31.4L54.3 31.4L53.8 32.1L53.3 32.5L52.8 32.2L52.3 33.1L51.8 33.2L51.3 34.0L50.8 32.5L50.3 32.7L49.8 33.5L49.3 34.0L48.8 33.2L48.3 33.8L47.8 32.0L47.3 32.1L46.8 33.4L46.3 33.8L45.8 33.8L45.3 33.2L44.8 32.8L44.3 32.7L43.8 33.2L43.3 33.3L42.8 33.6L42.3 32.2L41.8 32.3L41.3 33.9L40.8 33.2L40.3 33.6L39.8 33.5L39.3 33.1L38.8 33.9L38.3 32.3L37.8 32.0L37.3 31.3L36.8 31.3L36.3 31.3L35.8 31.4L35.3 32.2L34.8 32.0L34.3 32.1L33.8 33.5L33.3 33.8L32.8 33.5L32.3 33.2L31.8 32.4L31.3 32.4L30.8 33.9L30.3 33.7L29.8 33.1L29.3 34.2L28.8 32.3L28.3 32.0L27.8 34.1L27.3 33.9L26.8 33.3L26.3 33.2L25.8 32.5L25.3 32.9L24.8 33.6L24.3 34.1L23.8 33.6L23.3 31.9L22.8 32.2L22.3 33.6L21.8 33.3L21.3 33.4L20.8 33.7L20.3 33.4L19.8 33.9L19.3 32.1L18.8 32.2L18.3 31.4L17.8 31.3L17.3 31.4L16.8 31.3L16.3 32.2L15.8 32.2L15.3 32.1L14.8 33.3L14.3 33.5L13.8 33.5L13.3 32.8L12.8 32.4L12.3 33.1L11.8 33.6L11.3 33.7L10.8 33.8L10.3 32.0L9.8 31.9L9.3 33.4L8.8 33.1L8.3 33.4L7.8 33.5L7.3 32.9L6.8 32.4L6.3 33.7L5.8 33.3L5.3 34.1L4.8 32.3L4.3 32.3L3.8 32.3L3.3 33.3L2.8 33.5L2.3 33.7L1.8 33.6L1.3 33.4L0.8 33.7Z" fill="#1c1c22"/></svg></div>
<div class="a" style="left:250.96px;top:102.10px;width:75.12px;height:36.40px;background:#92a7ff;overflow:hidden;"><div class="a" style="left:0;top:11.60px;width:100%;height:24.80px;background-image:repeating-linear-gradient(90deg,#8193e1 0,#8193e1 1px,rgba(0,0,0,0) 1px,rgba(0,0,0,0) 9.39px);background-position:-9.39px 0;"></div><div class="a" style="left:0;top:11.20px;width:100%;height:0.9px;background:#6674b2"></div><div class="a" style="left:0;top:0;width:0.9px;height:100%;background:#6674b2"></div><svg class="a" style="left:0;top:0" width="75.12" height="37"><path d="M0.8 14.3L1.3 14.3L1.8 14.6L2.3 14.7L2.8 15.1L3.3 15.1L3.8 16.5L4.3 16.0L4.8 16.2L5.3 14.7L5.8 14.2L6.3 14.4L6.8 15.3L7.3 15.4L7.8 14.7L8.3 15.0L8.8 14.8L9.3 14.7L9.8 16.3L10.3 16.5L10.8 14.2L11.3 15.0L11.8 15.1L12.3 14.5L12.8 15.9L13.3 16.0L13.8 14.6L14.3 15.2L14.8 14.6L15.3 16.0L15.8 16.1L16.3 16.1L16.8 17.2L17.3 17.2L17.8 17.2L18.3 17.2L18.8 16.0L19.3 16.1L19.8 14.5L20.3 14.2L20.8 15.1L21.3 14.8L21.8 14.3L22.3 15.1L22.8 16.1L23.3 16.1L23.8 14.9L24.3 14.1L24.8 14.8L25.3 15.4L25.8 15.5L26.3 14.5L26.8 14.6L27.3 15.0L27.8 14.5L28.3 16.3L28.8 16.6L29.3 14.8L29.8 14.2L30.3 14.1L30.8 14.5L31.3 16.0L31.8 15.8L32.3 14.7L32.8 15.1L33.3 15.3L33.8 15.2L34.3 16.4L34.8 16.2L35.3 16.0L35.8 17.2L36.3 17.2L36.8 17.2L37.3 17.2L37.8 15.9L38.3 16.0L38.8 14.6L39.3 14.9L39.8 15.0L40.3 14.9L40.8 14.8L41.3 14.8L41.8 16.3L42.3 16.4L42.8 14.8L43.3 14.6L43.8 14.6L44.3 15.6L44.8 15.3L45.3 14.4L45.8 14.2L46.3 15.2L46.8 15.0L47.3 16.5L47.8 16.6L48.3 14.7L48.8 14.8L49.3 14.1L49.8 15.0L50.3 15.5L50.8 16.2L51.3 15.3L51.8 15.0L52.3 14.9L52.8 16.0L53.3 16.1L53.8 16.4L54.3 17.2L54.8 17.2L55.3 17.2L55.8 17.2L56.3 17.2L56.8 16.0L57.3 15.0L57.8 14.2L58.3 15.2L58.8 14.5L59.3 15.3L59.8 14.5L60.3 16.1L60.8 16.2L61.3 14.8L61.8 14.2L62.3 14.7L62.8 15.8L63.3 15.7L63.8 15.4L64.3 14.2L64.8 14.6L65.3 14.6L65.8 16.1L66.3 16.4L66.8 14.2L67.3 14.7L67.8 15.1L68.3 14.0L68.8 15.7L69.3 16.0L69.8 14.8L70.3 14.8L70.8 14.9L71.3 15.4L71.8 16.4L72.3 16.3L72.8 16.0L73.3 17.2L73.8 17.2L74.3 17.2L74.3 18.9L73.8 19.0L73.3 18.9L72.8 20.1L72.3 19.8L71.8 19.7L71.3 20.6L70.8 20.9L70.3 21.1L69.8 20.9L69.3 20.0L68.8 20.4L68.3 22.0L67.8 20.8L67.3 21.0L66.8 21.7L66.3 19.6L65.8 20.0L65.3 21.5L64.8 21.3L64.3 21.7L63.8 20.7L63.3 20.2L62.8 20.3L62.3 21.1L61.8 21.8L61.3 21.1L60.8 19.7L60.3 19.8L59.8 21.6L59.3 20.7L58.8 21.7L58.3 20.8L57.8 22.0L57.3 21.2L56.8 20.2L56.3 19.0L55.8 18.9L55.3 18.9L54.8 18.9L54.3 18.9L53.8 19.6L53.3 19.9L52.8 20.1L52.3 21.2L51.8 21.1L51.3 20.8L50.8 19.9L50.3 20.4L49.8 21.2L49.3 21.9L48.8 20.9L48.3 21.3L47.8 19.6L47.3 19.6L46.8 20.9L46.3 20.9L45.8 21.8L45.3 21.4L44.8 20.5L44.3 20.4L43.8 21.1L43.3 21.2L42.8 21.3L42.3 19.6L41.8 19.7L41.3 21.2L40.8 21.3L40.3 21.0L39.8 21.2L39.3 20.9L38.8 21.2L38.3 20.1L37.8 20.1L37.3 19.0L36.8 19.0L36.3 18.9L35.8 18.9L35.3 20.0L34.8 19.7L34.3 19.7L33.8 20.8L33.3 20.8L32.8 21.0L32.3 21.0L31.8 20.2L31.3 20.1L30.8 21.4L30.3 21.6L29.8 21.6L29.3 21.2L28.8 19.6L28.3 19.8L27.8 21.5L27.3 20.9L26.8 21.2L26.3 21.6L25.8 20.5L25.3 20.8L24.8 21.4L24.3 21.8L23.8 21.1L23.3 20.0L22.8 19.8L22.3 20.7L21.8 21.9L21.3 21.0L20.8 20.7L20.3 21.6L19.8 21.4L19.3 20.1L18.8 20.2L18.3 19.0L17.8 19.0L17.3 18.9L16.8 19.0L16.3 20.1L15.8 20.0L15.3 20.0L14.8 21.4L14.3 20.6L13.8 21.3L13.3 20.0L12.8 20.1L12.3 21.6L11.8 20.8L11.3 20.8L10.8 21.5L10.3 19.5L9.8 19.7L9.3 21.3L8.8 21.3L8.3 20.8L7.8 21.4L7.3 20.5L6.8 20.7L6.3 21.6L5.8 21.7L5.3 21.0L4.8 20.0L4.3 20.0L3.8 19.5L3.3 20.9L2.8 20.9L2.3 21.0L1.8 21.3L1.3 21.4L0.8 21.9Z" fill="#1c1c22"/><path d="M0.8 27.2L1.3 26.8L1.8 26.6L2.3 26.8L2.8 26.7L3.3 26.9L3.8 28.5L4.3 28.3L4.8 28.8L5.3 27.5L5.8 26.6L6.3 26.4L6.8 28.0L7.3 28.0L7.8 27.0L8.3 27.5L8.8 26.9L9.3 26.8L9.8 28.9L10.3 28.6L10.8 26.4L11.3 26.6L11.8 26.9L12.3 26.6L12.8 28.5L13.3 28.3L13.8 27.3L14.3 27.4L14.8 27.8L15.3 28.5L15.8 28.4L16.3 28.4L16.8 29.6L17.3 29.6L17.8 29.6L18.3 29.6L18.8 28.5L19.3 28.5L19.8 26.8L20.3 27.4L20.8 26.8L21.3 26.7L21.8 27.6L22.3 27.3L22.8 28.6L23.3 28.4L23.8 27.3L24.3 26.5L24.8 27.4L25.3 28.2L25.8 28.0L26.3 26.8L26.8 27.5L27.3 27.0L27.8 27.2L28.3 28.5L28.8 28.6L29.3 26.7L29.8 27.4L30.3 27.0L30.8 27.1L31.3 28.3L31.8 28.5L32.3 26.9L32.8 27.0L33.3 27.1L33.8 27.1L34.3 28.5L34.8 28.3L35.3 28.3L35.8 29.6L36.3 29.6L36.8 29.6L37.3 29.6L37.8 28.6L38.3 28.5L38.8 27.3L39.3 27.7L39.8 27.4L40.3 27.2L40.8 26.7L41.3 27.0L41.8 28.7L42.3 28.5L42.8 26.4L43.3 26.5L43.8 27.4L44.3 27.9L44.8 27.7L45.3 26.9L45.8 26.6L46.3 26.9L46.8 26.9L47.3 28.7L47.8 28.5L48.3 27.1L48.8 26.6L49.3 27.5L49.8 27.4L50.3 27.9L50.8 28.5L51.3 27.5L51.8 27.1L52.3 27.1L52.8 28.3L53.3 28.3L53.8 28.7L54.3 29.6L54.8 29.6L55.3 29.6L55.8 29.6L56.3 29.6L56.8 28.3L57.3 27.2L57.8 26.7L58.3 27.5L58.8 26.7L59.3 27.6L59.8 27.1L60.3 28.4L60.8 28.5L61.3 26.8L61.8 26.6L62.3 27.3L62.8 28.4L63.3 27.7L63.8 28.3L64.3 27.5L64.8 27.0L65.3 27.5L65.8 28.9L66.3 28.5L66.8 26.9L67.3 26.7L67.8 27.1L68.3 27.5L68.8 28.3L69.3 28.1L69.8 26.9L70.3 27.0L70.8 27.7L71.3 27.8L71.8 28.8L72.3 28.3L72.8 28.6L73.3 29.6L73.8 29.6L74.3 29.6L74.3 31.3L73.8 31.4L73.3 31.3L72.8 32.3L72.3 32.5L71.8 32.0L71.3 32.9L70.8 32.9L70.3 33.5L69.8 33.7L69.3 32.6L68.8 32.5L68.3 33.2L67.8 33.7L67.3 33.7L66.8 33.6L66.3 32.2L65.8 31.9L65.3 33.1L64.8 33.6L64.3 33.2L63.8 32.7L63.3 33.3L62.8 32.4L62.3 33.4L61.8 33.8L61.3 33.8L60.8 32.2L60.3 32.4L59.8 33.8L59.3 33.4L58.8 34.0L58.3 33.1L57.8 34.1L57.3 33.4L56.8 32.7L56.3 31.4L55.8 31.3L55.3 31.3L54.8 31.4L54.3 31.4L53.8 32.2L53.3 32.6L52.8 32.6L52.3 33.7L51.8 33.6L51.3 33.3L50.8 32.4L50.3 32.8L49.8 33.3L49.3 33.1L48.8 33.8L48.3 33.5L47.8 32.2L47.3 32.2L46.8 33.7L46.3 34.0L45.8 33.9L45.3 34.0L44.8 33.3L44.3 32.8L43.8 33.4L43.3 34.0L42.8 34.2L42.3 32.3L41.8 32.1L41.3 33.9L40.8 34.2L40.3 33.5L39.8 33.2L39.3 33.0L38.8 33.3L38.3 32.3L37.8 32.3L37.3 31.4L36.8 31.3L36.3 31.4L35.8 31.3L35.3 32.4L34.8 32.6L34.3 32.5L33.8 33.8L33.3 33.4L32.8 33.9L32.3 33.6L31.8 32.5L31.3 32.6L30.8 33.7L30.3 33.9L29.8 33.3L29.3 34.0L28.8 32.2L28.3 32.3L27.8 33.3L27.3 33.9L26.8 33.3L26.3 34.0L25.8 33.0L25.3 32.4L24.8 33.4L24.3 34.1L23.8 33.4L23.3 32.3L22.8 32.4L22.3 33.3L21.8 33.2L21.3 34.3L20.8 34.0L20.3 33.4L19.8 34.1L19.3 32.5L18.8 32.3L18.3 31.4L17.8 31.3L17.3 31.4L16.8 31.3L16.3 32.6L15.8 32.4L15.3 32.4L14.8 33.0L14.3 33.5L13.8 33.6L13.3 32.5L12.8 32.5L12.3 34.2L11.8 33.9L11.3 34.2L10.8 34.0L10.3 32.1L9.8 31.9L9.3 33.7L8.8 33.6L8.3 33.4L7.8 33.9L7.3 33.0L6.8 32.7L6.3 34.3L5.8 34.2L5.3 33.1L4.8 32.1L4.3 32.7L3.8 32.3L3.3 34.0L2.8 33.8L2.3 33.9L1.8 33.8L1.3 33.8L0.8 33.6Z" fill="#1c1c22"/></svg></div>
<div class="a" style="left:326.08px;top:102.10px;width:75.12px;height:36.40px;background:#92a7ff;overflow:hidden;"><div class="a" style="left:0;top:11.60px;width:100%;height:24.80px;background-image:repeating-linear-gradient(90deg,#8193e1 0,#8193e1 1px,rgba(0,0,0,0) 1px,rgba(0,0,0,0) 9.39px);background-position:-9.39px 0;"></div><div class="a" style="left:0;top:11.20px;width:100%;height:0.9px;background:#6674b2"></div><div class="a" style="left:0;top:0;width:0.9px;height:100%;background:#6674b2"></div><svg class="a" style="left:0;top:0" width="75.12" height="37"><path d="M0.8 14.5L1.3 15.1L1.8 15.1L2.3 15.2L2.8 15.1L3.3 14.5L3.8 16.2L4.3 15.9L4.8 16.2L5.3 14.3L5.8 14.8L6.3 15.1L6.8 15.4L7.3 15.8L7.8 14.7L8.3 14.3L8.8 15.0L9.3 15.2L9.8 16.2L10.3 16.2L10.8 14.2L11.3 14.3L11.8 15.0L12.3 15.0L12.8 15.8L13.3 15.5L13.8 14.9L14.3 14.7L14.8 15.2L15.3 16.3L15.8 16.1L16.3 16.0L16.8 17.2L17.3 17.2L17.8 17.2L18.3 17.2L18.8 16.2L19.3 16.2L19.8 14.8L20.3 15.3L20.8 14.5L21.3 14.7L21.8 14.8L22.3 15.1L22.8 16.3L23.3 15.9L23.8 14.4L24.3 14.8L24.8 14.4L25.3 15.5L25.8 15.8L26.3 14.5L26.8 14.5L27.3 15.3L27.8 15.2L28.3 16.1L28.8 16.1L29.3 14.6L29.8 15.1L30.3 15.1L30.8 14.5L31.3 16.1L31.8 15.6L32.3 15.3L32.8 14.9L33.3 14.6L33.8 14.7L34.3 16.1L34.8 16.1L35.3 15.9L35.8 17.2L36.3 17.2L36.8 17.2L37.3 17.2L37.8 16.3L38.3 16.3L38.8 14.5L39.3 14.3L39.8 15.0L40.3 15.1L40.8 14.7L41.3 14.9L41.8 16.0L42.3 16.4L42.8 14.2L43.3 14.9L43.8 14.8L44.3 15.4L44.8 15.8L45.3 14.3L45.8 14.3L46.3 14.6L46.8 14.3L47.3 16.5L47.8 16.1L48.3 14.8L48.8 14.6L49.3 14.7L49.8 14.5L50.3 16.1L50.8 15.5L51.3 15.1L51.8 14.6L52.3 15.1L52.8 16.0L53.3 16.3L53.8 16.4L54.3 17.2L54.8 17.2L55.3 17.2L55.8 17.2L56.3 17.2L56.8 16.4L57.3 14.3L57.8 14.8L58.3 14.7L58.8 14.2L59.3 14.3L59.8 14.4L60.3 16.4L60.8 16.4L61.3 14.9L61.8 14.3L62.3 14.9L62.8 15.7L63.3 15.8L63.8 15.7L64.3 14.7L64.8 14.8L65.3 14.6L65.8 16.3L66.3 16.2L66.8 14.8L67.3 14.5L67.8 14.5L68.3 14.3L68.8 15.6L69.3 15.8L69.8 15.1L70.3 14.6L70.8 15.3L71.3 14.8L71.8 16.4L72.3 16.3L72.8 16.1L73.3 17.2L73.8 17.2L74.3 17.2L74.3 18.9L73.8 19.0L73.3 18.9L72.8 20.1L72.3 19.9L71.8 19.8L71.3 21.1L70.8 20.5L70.3 21.4L69.8 21.1L69.3 20.2L68.8 20.6L68.3 21.8L67.8 21.5L67.3 21.4L66.8 21.2L66.3 19.7L65.8 19.8L65.3 21.2L64.8 21.3L64.3 21.1L63.8 20.1L63.3 20.2L62.8 20.5L62.3 20.9L61.8 21.9L61.3 21.1L60.8 19.7L60.3 19.7L59.8 21.5L59.3 21.7L58.8 21.7L58.3 21.2L57.8 20.9L57.3 21.4L56.8 19.7L56.3 19.0L55.8 19.0L55.3 18.9L54.8 19.0L54.3 18.9L53.8 19.8L53.3 19.6L52.8 20.1L52.3 20.8L51.8 21.4L51.3 21.0L50.8 20.7L50.3 20.0L49.8 21.3L49.3 21.2L48.8 21.5L48.3 21.0L47.8 20.0L47.3 19.7L46.8 21.6L46.3 21.4L45.8 21.5L45.3 21.7L44.8 20.2L44.3 20.5L43.8 21.2L43.3 20.9L42.8 21.8L42.3 19.5L41.8 19.9L41.3 21.2L40.8 21.3L40.3 21.1L39.8 20.8L39.3 21.5L38.8 21.5L38.3 19.7L37.8 19.8L37.3 19.0L36.8 19.0L36.3 18.9L35.8 18.9L35.3 20.3L34.8 20.0L34.3 20.0L33.8 21.1L33.3 21.3L32.8 20.8L32.3 20.6L31.8 20.3L31.3 20.0L30.8 21.5L30.3 21.1L29.8 21.0L29.3 21.1L28.8 19.9L28.3 19.9L27.8 20.9L27.3 20.7L26.8 21.4L26.3 21.4L25.8 20.2L25.3 20.6L24.8 21.5L24.3 21.1L23.8 21.2L23.3 20.2L22.8 19.7L22.3 20.8L21.8 21.1L21.3 21.3L20.8 21.6L20.3 20.9L19.8 21.3L19.3 19.8L18.8 19.7L18.3 18.9L17.8 18.9L17.3 18.9L16.8 19.0L16.3 20.0L15.8 19.9L15.3 19.8L14.8 20.8L14.3 21.3L13.8 21.3L13.3 20.4L12.8 20.3L12.3 20.8L11.8 20.9L11.3 21.9L10.8 21.6L10.3 20.0L9.8 19.9L9.3 20.6L8.8 21.2L8.3 21.8L7.8 21.2L7.3 20.2L6.8 20.5L6.3 21.0L5.8 21.4L5.3 21.6L4.8 20.0L4.3 20.0L3.8 20.0L3.3 21.6L2.8 20.9L2.3 20.9L1.8 21.0L1.3 21.1L0.8 21.6Z" fill="#1c1c22"/><path d="M0.8 26.9L1.3 26.9L1.8 27.4L2.3 27.6L2.8 26.8L3.3 27.7L3.8 28.8L4.3 28.7L4.8 28.7L5.3 26.6L5.8 26.6L6.3 27.2L6.8 27.8L7.3 27.7L7.8 27.0L8.3 27.6L8.8 27.0L9.3 26.6L9.8 28.7L10.3 28.9L10.8 26.9L11.3 27.1L11.8 27.4L12.3 26.4L12.8 28.6L13.3 28.5L13.8 26.9L14.3 26.9L14.8 27.2L15.3 28.7L15.8 28.5L16.3 28.8L16.8 29.6L17.3 29.6L17.8 29.6L18.3 29.6L18.8 28.4L19.3 28.7L19.8 27.0L20.3 26.6L20.8 26.9L21.3 27.3L21.8 27.1L22.3 27.3L22.8 28.3L23.3 28.6L23.8 27.4L24.3 26.4L24.8 27.4L25.3 28.4L25.8 28.0L26.3 27.0L26.8 26.7L27.3 26.7L27.8 27.4L28.3 28.5L28.8 28.9L29.3 27.3L29.8 26.4L30.3 27.3L30.8 26.5L31.3 28.6L31.8 28.3L32.3 26.9L32.8 27.7L33.3 26.8L33.8 27.4L34.3 28.8L34.8 28.8L35.3 28.6L35.8 29.6L36.3 29.6L36.8 29.6L37.3 29.6L37.8 28.3L38.3 28.8L38.8 27.4L39.3 27.6L39.8 27.6L40.3 26.8L40.8 27.0L41.3 27.4L41.8 28.4L42.3 28.3L42.8 27.1L43.3 27.4L43.8 26.8L44.3 28.3L44.8 28.3L45.3 26.7L45.8 27.7L46.3 27.4L46.8 26.7L47.3 28.8L47.8 28.5L48.3 27.2L48.8 26.8L49.3 26.4L49.8 26.8L50.3 28.0L50.8 28.1L51.3 27.0L51.8 27.3L52.3 27.0L52.8 28.8L53.3 28.5L53.8 28.9L54.3 29.6L54.8 29.6L55.3 29.6L55.8 29.6L56.3 29.6L56.8 28.5L57.3 26.8L57.8 27.5L58.3 27.2L58.8 27.5L59.3 27.3L59.8 26.8L60.3 28.6L60.8 28.4L61.3 26.9L61.8 27.1L62.3 27.3L62.8 27.9L63.3 28.3L63.8 28.0L64.3 27.0L64.8 27.4L65.3 27.0L65.8 28.8L66.3 28.9L66.8 26.8L67.3 26.8L67.8 27.0L68.3 27.0L68.8 28.5L69.3 28.4L69.8 27.8L70.3 26.9L70.8 27.7L71.3 26.9L71.8 28.4L72.3 28.7L72.8 28.5L73.3 29.6L73.8 29.6L74.3 29.6L74.3 31.3L73.8 31.4L73.3 31.3L72.8 32.5L72.3 32.1L71.8 32.3L71.3 33.8L70.8 33.2L70.3 33.9L69.8 33.1L69.3 32.6L68.8 32.3L68.3 33.5L67.8 33.8L67.3 33.7L66.8 33.8L66.3 31.9L65.8 32.1L65.3 33.8L64.8 33.2L64.3 33.9L63.8 32.9L63.3 32.5L62.8 32.8L62.3 33.6L61.8 33.6L61.3 33.8L60.8 32.4L60.3 32.2L59.8 34.1L59.3 33.4L58.8 33.5L58.3 33.7L57.8 33.4L57.3 34.0L56.8 32.5L56.3 31.3L55.8 31.3L55.3 31.4L54.8 31.3L54.3 31.3L53.8 32.1L53.3 32.2L52.8 32.0L52.3 33.5L51.8 33.4L51.3 33.8L50.8 32.5L50.3 32.6L49.8 33.8L49.3 34.4L48.8 33.8L48.3 33.6L47.8 32.2L47.3 32.0L46.8 34.1L46.3 33.6L45.8 33.0L45.3 34.0L44.8 32.6L44.3 32.5L43.8 33.8L43.3 33.2L42.8 33.6L42.3 32.5L41.8 32.6L41.3 33.4L40.8 33.9L40.3 33.7L39.8 33.1L39.3 33.1L38.8 33.5L38.3 32.1L37.8 32.5L37.3 31.3L36.8 31.3L36.3 31.3L35.8 31.4L35.3 32.3L34.8 32.0L34.3 32.0L33.8 33.3L33.3 33.8L32.8 33.0L32.3 33.8L31.8 32.4L31.3 32.3L30.8 34.1L30.3 33.6L29.8 34.4L29.3 33.5L28.8 32.0L28.3 32.4L27.8 33.4L27.3 33.8L26.8 34.1L26.3 33.6L25.8 32.9L25.3 32.5L24.8 33.5L24.3 34.4L23.8 33.4L23.3 32.3L22.8 32.7L22.3 33.3L21.8 33.6L21.3 33.7L20.8 34.1L20.3 34.3L19.8 33.8L19.3 32.3L18.8 32.4L18.3 31.4L17.8 31.4L17.3 31.3L16.8 31.3L16.3 32.2L15.8 32.5L15.3 32.2L14.8 33.3L14.3 34.1L13.8 34.1L13.3 32.4L12.8 32.4L12.3 34.5L11.8 33.3L11.3 33.5L10.8 33.8L10.3 32.1L9.8 32.2L9.3 34.0L8.8 34.0L8.3 33.0L7.8 33.7L7.3 33.3L6.8 33.2L6.3 33.4L5.8 33.9L5.3 34.3L4.8 32.0L4.3 32.1L3.8 32.1L3.3 33.3L2.8 33.7L2.3 33.3L1.8 33.5L1.3 33.8L0.8 33.9Z" fill="#1c1c22"/></svg></div>
<div class="a" style="left:401.20px;top:102.10px;width:75.12px;height:36.40px;background:#92a7ff;overflow:hidden;"><div class="a" style="left:0;top:11.60px;width:100%;height:24.80px;background-image:repeating-linear-gradient(90deg,#8193e1 0,#8193e1 1px,rgba(0,0,0,0) 1px,rgba(0,0,0,0) 9.39px);background-position:-9.39px 0;"></div><div class="a" style="left:0;top:11.20px;width:100%;height:0.9px;background:#6674b2"></div><div class="a" style="left:0;top:0;width:0.9px;height:100%;background:#6674b2"></div><svg class="a" style="left:0;top:0" width="75.12" height="37"><path d="M0.8 14.9L1.3 14.4L1.8 14.3L2.3 15.2L2.8 15.0L3.3 14.8L3.8 16.4L4.3 16.0L4.8 16.0L5.3 14.2L5.8 14.7L6.3 15.0L6.8 15.5L7.3 15.6L7.8 15.1L8.3 14.8L8.8 14.7L9.3 15.2L9.8 16.6L10.3 16.2L10.8 14.7L11.3 14.6L11.8 14.6L12.3 15.1L12.8 16.0L13.3 15.9L13.8 14.8L14.3 14.9L14.8 14.8L15.3 16.4L15.8 16.4L16.3 15.9L16.8 17.2L17.3 17.2L17.8 17.2L18.3 17.2L18.8 16.2L19.3 16.2L19.8 14.6L20.3 14.9L20.8 15.2L21.3 14.8L21.8 14.5L22.3 14.6L22.8 16.5L23.3 16.3L23.8 14.2L24.3 15.1L24.8 15.0L25.3 15.8L25.8 15.5L26.3 14.8L26.8 14.5L27.3 14.9L27.8 15.2L28.3 16.2L28.8 16.3L29.3 14.1L29.8 15.1L30.3 14.8L30.8 14.2L31.3 15.6L31.8 16.0L32.3 15.1L32.8 15.1L33.3 14.6L33.8 15.0L34.3 16.5L34.8 16.0L35.3 16.3L35.8 17.2L36.3 17.2L36.8 17.2L37.3 17.2L37.8 16.2L38.3 16.4L38.8 15.2L39.3 14.7L39.8 14.3L40.3 14.5L40.8 15.0L41.3 14.2L41.8 16.4L42.3 15.9L42.8 14.2L43.3 15.1L43.8 14.3L44.3 16.0L44.8 16.0L45.3 14.3L45.8 15.1L46.3 14.6L46.8 14.3L47.3 16.4L47.8 16.6L48.3 14.8L48.8 14.5L49.3 14.9L49.8 15.0L50.3 15.7L50.8 16.0L51.3 14.6L51.8 15.2L52.3 15.0L52.8 16.4L53.3 16.2L53.8 16.3L54.3 17.2L54.8 17.2L55.3 17.2L55.8 17.2L56.3 17.2L56.8 16.2L57.3 14.3L57.8 14.8L58.3 15.3L58.8 14.7L59.3 14.4L59.8 14.6L60.3 16.2L60.8 16.3L61.3 15.1L61.8 14.6L62.3 14.5L62.8 15.3L63.3 16.0L63.8 16.0L64.3 15.2L64.8 14.6L65.3 14.6L65.8 16.1L66.3 16.1L66.8 14.6L67.3 15.0L67.8 14.0L68.3 14.2L68.8 15.9L69.3 15.5L69.8 14.7L70.3 14.7L70.8 14.4L71.3 15.2L71.8 16.2L72.3 15.9L72.8 15.9L73.3 17.2L73.8 17.2L74.3 17.2L74.3 19.0L73.8 19.0L73.3 18.9L72.8 20.1L72.3 20.1L71.8 19.8L71.3 21.0L70.8 21.2L70.3 21.3L69.8 21.1L69.3 20.5L68.8 20.1L68.3 21.6L67.8 21.9L67.3 21.0L66.8 21.3L66.3 20.0L65.8 20.1L65.3 21.4L64.8 21.1L64.3 20.8L63.8 20.1L63.3 20.0L62.8 20.6L62.3 21.3L61.8 21.2L61.3 21.0L60.8 19.7L60.3 19.9L59.8 21.1L59.3 21.3L58.8 21.1L58.3 20.6L57.8 20.9L57.3 21.6L56.8 19.7L56.3 19.0L55.8 18.9L55.3 19.0L54.8 18.9L54.3 18.9L53.8 19.8L53.3 19.8L52.8 19.7L52.3 21.2L51.8 20.7L51.3 21.1L50.8 19.9L50.3 20.5L49.8 20.9L49.3 21.0L48.8 21.4L48.3 21.4L47.8 19.6L47.3 19.6L46.8 21.7L46.3 21.2L45.8 20.8L45.3 21.6L44.8 19.9L44.3 20.2L43.8 21.8L43.3 21.0L42.8 21.9L42.3 20.0L41.8 19.7L41.3 21.9L40.8 21.2L40.3 21.6L39.8 21.7L39.3 21.0L38.8 20.9L38.3 19.5L37.8 19.7L37.3 19.0L36.8 18.9L36.3 18.9L35.8 18.9L35.3 19.8L34.8 20.2L34.3 19.6L33.8 21.0L33.3 21.3L32.8 20.7L32.3 21.0L31.8 20.1L31.3 20.4L30.8 21.5L30.3 21.0L29.8 21.1L29.3 21.6L28.8 19.9L28.3 19.8L27.8 20.8L27.3 21.0L26.8 21.2L26.3 21.3L25.8 20.3L25.3 20.4L24.8 21.2L24.3 20.9L23.8 21.7L23.3 19.6L22.8 19.7L22.3 21.2L21.8 21.4L21.3 21.3L20.8 20.9L20.3 21.3L19.8 21.4L19.3 19.9L18.8 19.8L18.3 18.9L17.8 18.9L17.3 18.9L16.8 18.9L16.3 20.2L15.8 19.7L15.3 19.5L14.8 21.1L14.3 20.9L13.8 21.1L13.3 20.3L12.8 19.9L12.3 21.0L11.8 21.4L11.3 21.3L10.8 21.3L10.3 19.8L9.8 19.4L9.3 21.0L8.8 21.3L8.3 20.9L7.8 20.7L7.3 20.4L6.8 20.3L6.3 21.2L5.8 21.2L5.3 21.5L4.8 20.1L4.3 20.1L3.8 19.7L3.3 21.2L2.8 20.9L2.3 20.9L1.8 21.7L1.3 21.4L0.8 21.3Z" fill="#1c1c22"/><path d="M0.8 26.8L1.3 26.9L1.8 27.7L2.3 27.3L2.8 27.4L3.3 27.0L3.8 28.6L4.3 28.4L4.8 28.3L5.3 27.5L5.8 26.8L6.3 27.3L6.8 27.9L7.3 28.1L7.8 26.6L8.3 27.0L8.8 26.8L9.3 26.9L9.8 28.5L10.3 28.7L10.8 26.5L11.3 26.5L11.8 26.9L12.3 26.5L12.8 28.2L13.3 28.2L13.8 27.6L14.3 27.6L14.8 27.4L15.3 28.6L15.8 28.5L16.3 28.6L16.8 29.6L17.3 29.6L17.8 29.6L18.3 29.6L18.8 28.3L19.3 28.5L19.8 26.7L20.3 27.0L20.8 26.9L21.3 27.6L21.8 26.9L22.3 27.3L22.8 28.3L23.3 28.3L23.8 26.8L24.3 27.3L24.8 27.3L25.3 27.7L25.8 28.1L26.3 27.5L26.8 26.9L27.3 27.6L27.8 26.8L28.3 28.7L28.8 28.5L29.3 27.2L29.8 26.8L30.3 27.3L30.8 27.3L31.3 28.1L31.8 28.1L32.3 27.8L32.8 27.0L33.3 27.4L33.8 26.9L34.3 28.8L34.8 28.7L35.3 28.3L35.8 29.6L36.3 29.6L36.8 29.6L37.3 29.6L37.8 28.7L38.3 28.6L38.8 26.8L39.3 26.6L39.8 27.1L40.3 27.1L40.8 27.3L41.3 27.5L41.8 28.3L42.3 28.8L42.8 27.1L43.3 27.5L43.8 26.6L44.3 28.3L44.8 28.4L45.3 26.7L45.8 27.1L46.3 27.4L46.8 26.7L47.3 29.0L47.8 28.5L48.3 26.8L48.8 26.4L49.3 26.9L49.8 27.2L50.3 28.5L50.8 28.4L51.3 27.7L51.8 27.3L52.3 27.0L52.8 28.6L53.3 28.6L53.8 28.9L54.3 29.6L54.8 29.6L55.3 29.6L55.8 29.6L56.3 29.6L56.8 28.3L57.3 27.0L57.8 26.7L58.3 27.7L58.8 27.4L59.3 27.7L59.8 27.7L60.3 28.4L60.8 28.7L61.3 26.7L61.8 27.4L62.3 27.1L62.8 27.8L63.3 28.0L63.8 28.4L64.3 26.7L64.8 26.6L65.3 27.7L65.8 29.0L66.3 28.5L66.8 26.6L67.3 27.1L67.8 26.9L68.3 26.8L68.8 28.2L69.3 28.5L69.8 27.4L70.3 27.4L70.8 27.5L71.3 27.5L71.8 28.3L72.3 28.9L72.8 28.3L73.3 29.6L73.8 29.6L74.3 29.6L74.3 31.4L73.8 31.4L73.3 31.4L72.8 32.5L72.3 32.0L71.8 32.7L71.3 33.5L70.8 33.2L70.3 33.5L69.8 33.3L69.3 32.3L68.8 32.6L68.3 33.7L67.8 33.7L67.3 33.6L66.8 34.2L66.3 32.5L65.8 31.9L65.3 33.1L64.8 33.8L64.3 33.8L63.8 32.4L63.3 32.7L62.8 33.1L62.3 33.6L61.8 33.2L61.3 34.2L60.8 32.3L60.3 32.4L59.8 33.1L59.3 33.2L58.8 33.3L58.3 32.9L57.8 34.1L57.3 33.7L56.8 32.6L56.3 31.3L55.8 31.3L55.3 31.3L54.8 31.4L54.3 31.3L53.8 31.9L53.3 32.3L52.8 32.3L52.3 33.8L51.8 33.3L51.3 33.1L50.8 32.5L50.3 32.4L49.8 33.6L49.3 33.7L48.8 34.1L48.3 33.9L47.8 32.3L47.3 31.9L46.8 33.7L46.3 33.3L45.8 33.8L45.3 33.7L44.8 32.5L44.3 32.6L43.8 34.0L43.3 33.1L42.8 33.8L42.3 32.0L41.8 32.6L41.3 33.3L40.8 33.4L40.3 33.5L39.8 33.7L39.3 33.9L38.8 34.1L38.3 32.2L37.8 32.2L37.3 31.3L36.8 31.3L36.3 31.3L35.8 31.3L35.3 32.5L34.8 32.2L34.3 32.1L33.8 33.6L33.3 33.5L32.8 34.0L32.3 32.9L31.8 32.7L31.3 32.6L30.8 33.7L30.3 33.3L29.8 34.2L29.3 33.4L28.8 32.2L28.3 32.2L27.8 34.0L27.3 33.4L26.8 33.6L26.3 33.4L25.8 32.9L25.3 33.0L24.8 33.3L24.3 33.6L23.8 34.1L23.3 32.4L22.8 32.5L22.3 33.4L21.8 33.8L21.3 33.0L20.8 33.6L20.3 33.9L19.8 34.3L19.3 32.4L18.8 32.3L18.3 31.3L17.8 31.4L17.3 31.3L16.8 31.3L16.3 32.2L15.8 32.3L15.3 32.4L14.8 33.5L14.3 33.4L13.8 33.1L13.3 32.6L12.8 32.7L12.3 34.3L11.8 34.1L11.3 34.2L10.8 34.3L10.3 32.2L9.8 32.5L9.3 33.6L8.8 34.0L8.3 33.8L7.8 34.2L7.3 32.7L6.8 32.9L6.3 33.6L5.8 34.1L5.3 33.4L4.8 32.7L4.3 32.4L3.8 32.3L3.3 33.5L2.8 33.5L2.3 33.6L1.8 33.0L1.3 33.9L0.8 34.0Z" fill="#1c1c22"/></svg></div>
<div class="a" style="left:476.32px;top:102.10px;width:75.12px;height:36.40px;background:#92a7ff;overflow:hidden;"><div class="a" style="left:0;top:11.60px;width:100%;height:24.80px;background-image:repeating-linear-gradient(90deg,#8193e1 0,#8193e1 1px,rgba(0,0,0,0) 1px,rgba(0,0,0,0) 9.39px);background-position:-9.39px 0;"></div><div class="a" style="left:0;top:11.20px;width:100%;height:0.9px;background:#6674b2"></div><div class="a" style="left:0;top:0;width:0.9px;height:100%;background:#6674b2"></div><svg class="a" style="left:0;top:0" width="75.12" height="37"><path d="M0.8 14.5L1.3 15.1L1.8 15.2L2.3 14.5L2.8 14.6L3.3 14.6L3.8 15.9L4.3 15.9L4.8 15.9L5.3 14.1L5.8 15.0L6.3 14.2L6.8 15.7L7.3 16.0L7.8 15.0L8.3 15.2L8.8 15.3L9.3 14.7L9.8 16.1L10.3 16.1L10.8 14.1L11.3 14.1L11.8 14.7L12.3 15.1L12.8 15.8L13.3 16.1L13.8 15.1L14.3 14.4L14.8 14.9L15.3 16.0L15.8 16.0L16.3 16.5L16.8 17.2L17.3 17.2L17.8 17.2L18.3 17.2L18.8 15.9L19.3 16.3L19.8 14.9L20.3 15.2L20.8 14.7L21.3 14.6L21.8 14.8L22.3 14.4L22.8 16.5L23.3 16.3L23.8 15.1L24.3 15.0L24.8 15.1L25.3 15.5L25.8 16.0L26.3 14.8L26.8 14.6L27.3 14.9L27.8 14.2L28.3 16.4L28.8 16.3L29.3 14.7L29.8 14.3L30.3 14.4L30.8 14.1L31.3 16.1L31.8 16.1L32.3 15.0L32.8 14.9L33.3 14.5L33.8 15.3L34.3 16.0L34.8 16.0L35.3 16.1L35.8 17.2L36.3 17.2L36.8 17.2L37.3 17.2L37.8 16.3L38.3 16.4L38.8 15.0L39.3 14.7L39.8 14.5L40.3 15.0L40.8 15.0L41.3 14.2L41.8 16.2L42.3 16.3L42.8 15.1L43.3 14.5L43.8 14.5L44.3 15.9L44.8 15.5L45.3 15.3L45.8 14.5L46.3 15.2L46.8 14.2L47.3 16.6L47.8 16.1L48.3 14.3L48.8 14.2L49.3 14.7L49.8 14.4L50.3 15.7L50.8 15.9L51.3 14.8L51.8 15.0L52.3 15.2L52.8 16.0L53.3 16.2L53.8 16.3L54.3 17.2L54.8 17.2L55.3 17.2L55.8 17.2L56.3 17.2L56.8 16.2L57.3 14.5L57.8 14.8L58.3 15.2L58.8 15.0L59.3 14.6L59.8 15.3L60.3 16.0L60.8 16.2L61.3 14.2L61.8 14.6L62.3 14.6L62.8 15.5L63.3 15.5L63.8 15.6L64.3 14.6L64.8 14.2L65.3 15.3L65.8 16.3L66.3 16.1L66.8 14.1L67.3 14.5L67.8 14.3L68.3 15.1L68.8 15.6L69.3 16.2L69.8 15.1L70.3 15.1L70.8 14.8L71.3 14.5L71.8 16.3L72.3 16.0L72.8 16.5L73.3 17.2L73.8 17.2L74.3 17.2L74.3 19.0L73.8 18.9L73.3 18.9L72.8 19.6L72.3 20.1L71.8 19.8L71.3 21.5L70.8 21.1L70.3 20.8L69.8 21.0L69.3 20.0L68.8 20.4L68.3 20.8L67.8 21.6L67.3 21.6L66.8 21.8L66.3 19.9L65.8 19.9L65.3 20.6L64.8 21.7L64.3 21.1L63.8 20.3L63.3 20.6L62.8 20.7L62.3 21.3L61.8 21.6L61.3 21.7L60.8 19.8L60.3 19.9L59.8 20.6L59.3 21.2L58.8 21.0L58.3 20.6L57.8 21.0L57.3 21.4L56.8 19.8L56.3 18.9L55.8 18.9L55.3 18.9L54.8 19.0L54.3 18.9L53.8 19.8L53.3 19.8L52.8 20.1L52.3 20.6L51.8 21.2L51.3 21.0L50.8 20.3L50.3 20.2L49.8 21.7L49.3 21.3L48.8 21.4L48.3 21.9L47.8 20.1L47.3 19.4L46.8 21.4L46.3 20.6L45.8 21.4L45.3 20.8L44.8 20.6L44.3 20.1L43.8 21.3L43.3 21.4L42.8 20.7L42.3 19.9L41.8 19.7L41.3 21.7L40.8 21.0L40.3 21.1L39.8 21.3L39.3 21.4L38.8 20.8L38.3 19.5L37.8 19.6L37.3 19.0L36.8 18.9L36.3 19.0L35.8 19.0L35.3 20.0L34.8 19.9L34.3 19.9L33.8 20.5L33.3 21.5L32.8 20.8L32.3 20.8L31.8 19.9L31.3 19.9L30.8 21.5L30.3 21.7L29.8 21.6L29.3 21.4L28.8 19.9L28.3 19.5L27.8 21.6L27.3 20.9L26.8 21.4L26.3 21.4L25.8 20.2L25.3 20.5L24.8 20.7L24.3 21.0L23.8 20.7L23.3 19.8L22.8 19.6L22.3 21.3L21.8 21.2L21.3 21.5L20.8 21.5L20.3 20.8L19.8 20.9L19.3 19.8L18.8 20.2L18.3 19.0L17.8 19.0L17.3 19.0L16.8 18.9L16.3 19.5L15.8 20.0L15.3 20.2L14.8 20.9L14.3 21.3L13.8 21.0L13.3 19.9L12.8 20.3L12.3 20.7L11.8 21.3L11.3 21.8L10.8 21.6L10.3 19.8L9.8 19.9L9.3 21.4L8.8 20.7L8.3 20.6L7.8 21.0L7.3 20.2L6.8 20.4L6.3 22.0L5.8 21.0L5.3 21.7L4.8 20.0L4.3 20.2L3.8 20.1L3.3 21.6L2.8 21.4L2.3 21.2L1.8 20.9L1.3 20.9L0.8 21.3Z" fill="#1c1c22"/><path d="M0.8 26.9L1.3 27.6L1.8 27.1L2.3 27.3L2.8 27.2L3.3 27.0L3.8 28.8L4.3 28.9L4.8 28.6L5.3 27.1L5.8 26.7L6.3 27.1L6.8 27.8L7.3 27.8L7.8 27.4L8.3 26.8L8.8 26.7L9.3 27.2L9.8 28.9L10.3 29.0L10.8 26.4L11.3 26.8L11.8 27.3L12.3 26.8L12.8 28.1L13.3 27.9L13.8 27.3L14.3 26.9L14.8 27.6L15.3 28.6L15.8 28.8L16.3 28.5L16.8 29.6L17.3 29.6L17.8 29.6L18.3 29.6L18.8 28.8L19.3 28.5L19.8 27.1L20.3 27.1L20.8 27.1L21.3 27.4L21.8 27.3L22.3 26.6L22.8 28.7L23.3 28.8L23.8 26.5L24.3 26.8L24.8 27.5L25.3 28.4L25.8 27.9L26.3 27.3L26.8 27.6L27.3 26.7L27.8 27.1L28.3 28.9L28.8 29.0L29.3 26.5L29.8 26.5L30.3 27.4L30.8 27.4L31.3 28.1L31.8 27.8L32.3 27.6L32.8 27.8L33.3 27.2L33.8 27.3L34.3 28.5L34.8 28.8L35.3 28.3L35.8 29.6L36.3 29.6L36.8 29.6L37.3 29.6L37.8 28.3L38.3 28.5L38.8 27.0L39.3 27.7L39.8 27.2L40.3 27.6L40.8 27.0L41.3 26.8L41.8 28.6L42.3 28.8L42.8 26.8L43.3 27.1L43.8 26.8L44.3 27.9L44.8 27.7L45.3 27.0L45.8 27.6L46.3 26.7L46.8 26.8L47.3 28.5L47.8 28.9L48.3 27.2L48.8 27.1L49.3 27.0L49.8 26.6L50.3 27.9L50.8 28.6L51.3 27.2L51.8 27.3L52.3 27.8L52.8 28.6L53.3 28.8L53.8 28.8L54.3 29.6L54.8 29.6L55.3 29.6L55.8 29.6L56.3 29.6L56.8 28.6L57.3 27.3L57.8 26.8L58.3 26.9L58.8 27.0L59.3 26.7L59.8 27.2L60.3 28.7L60.8 28.3L61.3 27.4L61.8 26.7L62.3 26.4L62.8 27.9L63.3 27.7L63.8 27.7L64.3 27.3L64.8 27.4L65.3 26.9L65.8 28.9L66.3 28.6L66.8 26.7L67.3 27.0L67.8 26.6L68.3 27.4L68.8 27.9L69.3 28.2L69.8 27.0L70.3 26.9L70.8 27.6L71.3 27.3L71.8 28.8L72.3 28.8L72.8 28.5L73.3 29.6L73.8 29.6L74.3 29.6L74.3 31.3L73.8 31.4L73.3 31.3L72.8 32.4L72.3 32.1L71.8 32.0L71.3 33.5L70.8 33.3L70.3 34.0L69.8 33.7L69.3 32.6L68.8 32.8L68.3 33.5L67.8 33.9L67.3 33.5L66.8 34.1L66.3 32.2L65.8 31.9L65.3 34.0L64.8 33.3L64.3 33.4L63.8 33.1L63.3 33.1L62.8 33.0L62.3 34.2L61.8 33.8L61.3 33.1L60.8 32.6L60.3 32.0L59.8 33.6L59.3 33.9L58.8 33.5L58.3 33.9L57.8 33.7L57.3 33.7L56.8 32.2L56.3 31.3L55.8 31.4L55.3 31.3L54.8 31.4L54.3 31.3L53.8 32.0L53.3 31.9L52.8 32.2L52.3 32.9L51.8 33.6L51.3 33.8L50.8 32.2L50.3 32.7L49.8 34.0L49.3 33.5L48.8 33.8L48.3 33.4L47.8 31.9L47.3 32.3L46.8 34.2L46.3 34.3L45.8 33.0L45.3 33.8L44.8 33.0L44.3 32.7L43.8 33.7L43.3 33.6L42.8 34.0L42.3 32.0L41.8 32.3L41.3 33.9L40.8 33.6L40.3 33.3L39.8 33.5L39.3 32.9L38.8 33.7L38.3 32.2L37.8 32.7L37.3 31.3L36.8 31.3L36.3 31.4L35.8 31.3L35.3 32.6L34.8 32.2L34.3 32.3L33.8 33.3L33.3 33.8L32.8 32.9L32.3 33.0L31.8 32.8L31.3 32.6L30.8 33.5L30.3 33.2L29.8 33.9L29.3 34.4L28.8 32.0L28.3 31.9L27.8 33.7L27.3 33.9L26.8 33.1L26.3 33.5L25.8 33.1L25.3 32.5L24.8 33.2L24.3 33.7L23.8 34.3L23.3 32.2L22.8 32.1L22.3 34.1L21.8 33.4L21.3 33.6L20.8 33.5L20.3 33.5L19.8 33.5L19.3 32.5L18.8 31.9L18.3 31.3L17.8 31.3L17.3 31.4L16.8 31.3L16.3 32.2L15.8 32.2L15.3 32.3L14.8 33.3L14.3 34.0L13.8 33.6L13.3 33.1L12.8 32.8L12.3 33.7L11.8 33.3L11.3 34.2L10.8 34.1L10.3 31.9L9.8 32.1L9.3 33.5L8.8 33.9L8.3 33.9L7.8 33.4L7.3 33.2L6.8 33.0L6.3 33.5L5.8 34.0L5.3 33.8L4.8 32.2L4.3 32.0L3.8 32.2L3.3 33.6L2.8 33.4L2.3 33.4L1.8 33.7L1.3 33.1L0.8 33.8Z" fill="#1c1c22"/></svg></div>
<div class="a" style="left:551.44px;top:102.10px;width:75.12px;height:36.40px;background:#92a7ff;overflow:hidden;"><div class="a" style="left:0;top:11.60px;width:100%;height:24.80px;background-image:repeating-linear-gradient(90deg,#8193e1 0,#8193e1 1px,rgba(0,0,0,0) 1px,rgba(0,0,0,0) 9.39px);background-position:-9.39px 0;"></div><div class="a" style="left:0;top:11.20px;width:100%;height:0.9px;background:#6674b2"></div><div class="a" style="left:0;top:0;width:0.9px;height:100%;background:#6674b2"></div><svg class="a" style="left:0;top:0" width="75.12" height="37"><path d="M0.8 14.6L1.3 14.3L1.8 15.2L2.3 14.9L2.8 14.4L3.3 14.3L3.8 16.4L4.3 16.1L4.8 15.9L5.3 14.3L5.8 14.0L6.3 14.0L6.8 15.8L7.3 15.8L7.8 14.5L8.3 15.2L8.8 15.0L9.3 14.3L9.8 16.3L10.3 16.2L10.8 14.0L11.3 14.0L11.8 14.3L12.3 14.5L12.8 16.0L13.3 15.6L13.8 15.1L14.3 15.3L14.8 14.9L15.3 16.4L15.8 16.2L16.3 16.3L16.8 17.2L17.3 17.2L17.8 17.2L18.3 17.2L18.8 16.1L19.3 16.3L19.8 14.7L20.3 14.5L20.8 15.2L21.3 15.0L21.8 15.2L22.3 14.8L22.8 16.5L23.3 15.9L23.8 14.4L24.3 14.9L24.8 14.8L25.3 15.3L25.8 15.2L26.3 14.4L26.8 15.1L27.3 14.4L27.8 14.6L28.3 16.6L28.8 16.4L29.3 14.2L29.8 14.8L30.3 14.2L30.8 14.3L31.3 15.7L31.8 16.1L32.3 14.8L32.8 15.0L33.3 15.3L33.8 15.4L34.3 16.4L34.8 16.0L35.3 15.9L35.8 17.2L36.3 17.2L36.8 17.2L37.3 17.2L37.8 16.1L38.3 16.2L38.8 15.1L39.3 15.1L39.8 14.7L40.3 14.3L40.8 14.8L41.3 14.6L41.8 16.0L42.3 16.0L42.8 14.2L43.3 14.5L43.8 14.4L44.3 15.5L44.8 15.3L45.3 14.5L45.8 14.9L46.3 14.2L46.8 14.9L47.3 16.1L47.8 16.5L48.3 14.9L48.8 14.4L49.3 14.9L49.8 14.8L50.3 16.1L50.8 16.0L51.3 14.6L51.8 15.0L52.3 15.4L52.8 16.0L53.3 16.4L53.8 16.3L54.3 17.2L54.8 17.2L55.3 17.2L55.8 17.2L56.3 17.2L56.8 16.0L57.3 14.7L57.8 14.6L58.3 14.5L58.8 15.3L59.3 14.8L59.8 14.8L60.3 16.5L60.8 16.4L61.3 14.4L61.8 14.9L62.3 14.6L62.8 15.3L63.3 15.6L63.8 15.9L64.3 14.2L64.8 15.1L65.3 15.1L65.8 16.4L66.3 16.4L66.8 14.7L67.3 14.0L67.8 14.8L68.3 15.0L68.8 16.1L69.3 15.6L69.8 15.3L70.3 14.5L70.8 15.0L71.3 15.2L71.8 15.9L72.3 16.2L72.8 15.9L73.3 17.2L73.8 17.2L74.3 17.2L74.3 19.0L73.8 18.9L73.3 18.9L72.8 20.2L72.3 19.9L71.8 20.3L71.3 20.6L70.8 21.0L70.3 21.5L69.8 20.6L69.3 20.5L68.8 20.0L68.3 20.8L67.8 21.2L67.3 21.8L66.8 21.3L66.3 19.8L65.8 19.6L65.3 20.8L64.8 20.8L64.3 21.8L63.8 20.1L63.3 20.4L62.8 20.7L62.3 21.4L61.8 21.0L61.3 21.7L60.8 19.6L60.3 19.6L59.8 20.9L59.3 21.3L58.8 20.7L58.3 21.6L57.8 21.1L57.3 21.2L56.8 20.2L56.3 18.9L55.8 19.0L55.3 19.0L54.8 18.9L54.3 18.9L53.8 19.9L53.3 19.7L52.8 20.2L52.3 20.8L51.8 20.8L51.3 21.1L50.8 20.0L50.3 20.0L49.8 21.1L49.3 21.0L48.8 21.7L48.3 21.1L47.8 19.6L47.3 20.1L46.8 21.2L46.3 21.4L45.8 21.0L45.3 21.7L44.8 20.8L44.3 20.6L43.8 21.3L43.3 21.4L42.8 22.0L42.3 19.9L41.8 19.9L41.3 21.3L40.8 21.0L40.3 21.9L39.8 21.3L39.3 20.8L38.8 21.0L38.3 19.9L37.8 20.0L37.3 18.9L36.8 19.0L36.3 18.9L35.8 18.9L35.3 20.3L34.8 19.9L34.3 19.7L33.8 20.8L33.3 20.6L32.8 20.9L32.3 20.9L31.8 20.0L31.3 20.5L30.8 21.9L30.3 21.5L29.8 21.0L29.3 21.7L28.8 19.6L28.3 19.5L27.8 21.5L27.3 21.3L26.8 20.8L26.3 21.4L25.8 20.6L25.3 20.6L24.8 21.1L24.3 21.2L23.8 21.3L23.3 20.2L22.8 19.7L22.3 21.1L21.8 20.8L21.3 21.0L20.8 20.9L20.3 21.1L19.8 21.5L19.3 19.8L18.8 20.1L18.3 18.9L17.8 18.9L17.3 18.9L16.8 18.9L16.3 19.7L15.8 19.8L15.3 19.8L14.8 21.1L14.3 20.7L13.8 21.0L13.3 20.4L12.8 20.1L12.3 21.4L11.8 21.6L11.3 21.6L10.8 21.7L10.3 19.8L9.8 19.7L9.3 21.8L8.8 21.1L8.3 20.7L7.8 21.4L7.3 20.3L6.8 20.2L6.3 22.0L5.8 21.6L5.3 21.7L4.8 20.2L4.3 19.8L3.8 19.7L3.3 21.6L2.8 21.3L2.3 21.0L1.8 20.9L1.3 21.5L0.8 21.5Z" fill="#1c1c22"/><path d="M0.8 27.7L1.3 26.8L1.8 27.6L2.3 26.9L2.8 27.1L3.3 27.3L3.8 28.4L4.3 28.5L4.8 28.6L5.3 26.7L5.8 27.5L6.3 26.4L6.8 27.7L7.3 28.0L7.8 26.8L8.3 27.1L8.8 27.5L9.3 26.6L9.8 28.7L10.3 28.5L10.8 26.7L11.3 27.2L11.8 26.5L12.3 27.1L12.8 28.3L13.3 27.8L13.8 27.6L14.3 27.2L14.8 26.9L15.3 28.6L15.8 28.5L16.3 28.7L16.8 29.6L17.3 29.6L17.8 29.6L18.3 29.6L18.8 28.6L19.3 28.4L19.8 26.7L20.3 26.8L20.8 26.9L21.3 27.5L21.8 27.2L22.3 26.8L22.8 28.5L23.3 28.6L23.8 26.8L24.3 26.5L24.8 27.0L25.3 27.7L25.8 28.1L26.3 27.1L26.8 27.1L27.3 26.8L27.8 26.9L28.3 28.7L28.8 28.5L29.3 27.1L29.8 26.6L30.3 27.3L30.8 26.4L31.3 28.0L31.8 28.2L32.3 27.4L32.8 27.7L33.3 27.1L33.8 27.5L34.3 28.6L34.8 28.3L35.3 28.4L35.8 29.6L36.3 29.6L36.8 29.6L37.3 29.6L37.8 28.8L38.3 28.7L38.8 26.9L39.3 27.6L39.8 27.2L40.3 27.5L40.8 26.8L41.3 26.9L41.8 28.9L42.3 28.4L42.8 26.8L43.3 26.7L43.8 27.2L44.3 28.2L44.8 28.3L45.3 27.5L45.8 27.1L46.3 27.5L46.8 26.7L47.3 28.9L47.8 28.9L48.3 26.7L48.8 27.2L49.3 27.1L49.8 27.1L50.3 27.9L50.8 27.9L51.3 26.8L51.8 27.0L52.3 27.6L52.8 28.8L53.3 28.6L53.8 28.4L54.3 29.6L54.8 29.6L55.3 29.6L55.8 29.6L56.3 29.6L56.8 28.6L57.3 26.7L57.8 27.4L58.3 27.4L58.8 27.1L59.3 26.7L59.8 27.5L60.3 28.4L60.8 28.8L61.3 27.0L61.8 26.5L62.3 27.0L62.8 27.7L63.3 28.4L63.8 28.3L64.3 27.5L64.8 27.5L65.3 27.4L65.8 28.8L66.3 28.5L66.8 26.7L67.3 26.8L67.8 26.8L68.3 27.1L68.8 28.2L69.3 28.5L69.8 27.3L70.3 27.1L70.8 27.8L71.3 27.2L71.8 28.5L72.3 28.7L72.8 28.5L73.3 29.6L73.8 29.6L74.3 29.6L74.3 31.3L73.8 31.4L73.3 31.3L72.8 32.3L72.3 32.1L71.8 32.3L71.3 33.3L70.8 33.2L70.3 33.6L69.8 33.6L69.3 32.5L68.8 32.6L68.3 33.7L67.8 34.2L67.3 34.2L66.8 34.1L66.3 32.4L65.8 32.1L65.3 33.2L64.8 33.5L64.3 33.5L63.8 32.5L63.3 32.4L62.8 32.9L62.3 33.8L61.8 34.0L61.3 33.8L60.8 32.0L60.3 32.4L59.8 33.3L59.3 34.1L58.8 33.9L58.3 33.5L57.8 33.6L57.3 34.0L56.8 32.2L56.3 31.3L55.8 31.3L55.3 31.4L54.8 31.4L54.3 31.3L53.8 32.5L53.3 32.4L52.8 32.1L52.3 33.3L51.8 33.7L51.3 34.0L50.8 32.9L50.3 33.0L49.8 33.6L49.3 33.6L48.8 33.7L48.3 34.0L47.8 32.1L47.3 31.9L46.8 34.0L46.3 33.1L45.8 33.6L45.3 33.1L44.8 32.6L44.3 32.5L43.8 33.4L43.3 33.9L42.8 34.0L42.3 32.6L41.8 32.0L41.3 34.1L40.8 33.9L40.3 33.3L39.8 33.7L39.3 33.4L38.8 33.7L38.3 32.2L37.8 32.2L37.3 31.4L36.8 31.3L36.3 31.4L35.8 31.4L35.3 32.4L34.8 32.4L34.3 32.3L33.8 33.3L33.3 33.6L32.8 33.0L32.3 33.6L31.8 32.5L31.3 32.9L30.8 34.0L30.3 33.3L29.8 34.0L29.3 33.9L28.8 32.3L28.3 32.3L27.8 34.0L27.3 33.8L26.8 33.7L26.3 33.8L25.8 32.8L25.3 33.2L24.8 33.6L24.3 34.3L23.8 34.0L23.3 32.3L22.8 32.5L22.3 33.9L21.8 33.6L21.3 33.3L20.8 33.7L20.3 33.9L19.8 34.1L19.3 32.4L18.8 32.2L18.3 31.3L17.8 31.4L17.3 31.3L16.8 31.4L16.3 32.0L15.8 32.5L15.3 32.2L14.8 34.0L14.3 33.7L13.8 33.2L13.3 32.8L12.8 32.6L12.3 33.7L11.8 34.3L11.3 33.8L10.8 34.2L10.3 32.2L9.8 32.0L9.3 34.0L8.8 33.4L8.3 33.8L7.8 33.7L7.3 32.7L6.8 32.9L6.3 34.6L5.8 33.4L5.3 34.1L4.8 32.2L4.3 32.4L3.8 32.3L3.3 33.3L2.8 33.6L2.3 33.8L1.8 33.2L1.3 33.9L0.8 33.2Z" fill="#1c1c22"/></svg></div>
<div class="a" style="left:626.56px;top:102.10px;width:75.12px;height:36.40px;background:#92a7ff;overflow:hidden;"><div class="a" style="left:0;top:11.60px;width:100%;height:24.80px;background-image:repeating-linear-gradient(90deg,#8193e1 0,#8193e1 1px,rgba(0,0,0,0) 1px,rgba(0,0,0,0) 9.39px);background-position:-9.39px 0;"></div><div class="a" style="left:0;top:11.20px;width:100%;height:0.9px;background:#6674b2"></div><div class="a" style="left:0;top:0;width:0.9px;height:100%;background:#6674b2"></div><div class="a" style="left:0;top:17.8px;width:100%;height:0.8px;background:#5a6490"></div><div class="a" style="left:0;top:30.2px;width:100%;height:0.8px;background:#5a6490"></div></div>
<div class="a" style="left:701.68px;top:102.10px;width:75.12px;height:36.40px;background:#92a7ff;overflow:hidden;"><div class="a" style="left:0;top:11.60px;width:100%;height:24.80px;background-image:repeating-linear-gradient(90deg,#8193e1 0,#8193e1 1px,rgba(0,0,0,0) 1px,rgba(0,0,0,0) 9.39px);background-position:-9.39px 0;"></div><div class="a" style="left:0;top:11.20px;width:100%;height:0.9px;background:#6674b2"></div><div class="a" style="left:0;top:0;width:0.9px;height:100%;background:#6674b2"></div><svg class="a" style="left:0;top:0" width="75.12" height="37"><path d="M0.8 14.8L1.3 15.3L1.8 14.2L2.3 15.2L2.8 14.3L3.3 15.3L3.8 16.4L4.3 16.1L4.8 15.9L5.3 14.5L5.8 14.0L6.3 14.6L6.8 15.3L7.3 15.3L7.8 15.0L8.3 15.0L8.8 15.1L9.3 14.4L9.8 16.1L10.3 16.5L10.8 15.1L11.3 14.4L11.8 15.0L12.3 15.0L12.8 15.8L13.3 15.5L13.8 15.1L14.3 15.1L14.8 14.9L15.3 16.4L15.8 16.4L16.3 16.0L16.8 17.2L17.3 17.2L17.8 17.2L18.3 17.2L18.8 16.0L19.3 16.4L19.8 14.6L20.3 14.9L20.8 15.2L21.3 14.4L21.8 14.8L22.3 14.8L22.8 16.3L23.3 16.0L23.8 15.1L24.3 14.2L24.8 14.2L25.3 15.7L25.8 15.7L26.3 15.3L26.8 14.6L27.3 14.8L27.8 14.3L28.3 16.1L28.8 16.6L29.3 14.3L29.8 14.5L30.3 14.5L30.8 15.1L31.3 16.1L31.8 15.8L32.3 14.7L32.8 15.1L33.3 14.9L33.8 15.3L34.3 16.4L34.8 15.9L35.3 16.0L35.8 17.2L36.3 17.2L36.8 17.2L37.3 17.2L37.8 16.4L38.3 16.1L38.8 14.9L39.3 14.4L39.8 15.3L40.3 14.3L40.8 14.5L41.3 14.7L41.8 16.1L42.3 16.3L42.8 15.0L43.3 14.4L43.8 15.0L44.3 15.7L44.8 15.3L45.3 15.3L45.8 14.7L46.3 14.7L46.8 15.1L47.3 16.6L47.8 16.5L48.3 14.5L48.8 14.8L49.3 14.6L49.8 14.5L50.3 15.6L50.8 16.0L51.3 15.4L51.8 15.4L52.3 14.8L52.8 15.9L53.3 16.2L53.8 16.4L54.3 17.2L54.8 17.2L55.3 17.2L55.8 17.2L56.3 17.2L56.8 16.3L57.3 14.3L57.8 15.2L58.3 15.2L58.8 15.2L59.3 14.5L59.8 14.5L60.3 16.2L60.8 16.2L61.3 14.8L61.8 14.1L62.3 14.6L62.8 15.8L63.3 15.4L63.8 16.0L64.3 14.8L64.8 14.7L65.3 14.7L65.8 16.4L66.3 16.4L66.8 14.4L67.3 14.9L67.8 14.2L68.3 14.4L68.8 16.0L69.3 16.1L69.8 14.6L70.3 15.1L70.8 14.5L71.3 15.3L71.8 16.3L72.3 16.2L72.8 16.5L73.3 17.2L73.8 17.2L74.3 17.2L74.3 19.0L73.8 19.0L73.3 18.9L72.8 19.6L72.3 19.9L71.8 19.6L71.3 20.8L70.8 21.6L70.3 20.7L69.8 21.3L69.3 19.8L68.8 20.0L68.3 21.3L67.8 21.6L67.3 21.2L66.8 21.4L66.3 19.6L65.8 19.6L65.3 21.4L64.8 21.1L64.3 21.0L63.8 20.1L63.3 20.6L62.8 20.2L62.3 21.2L61.8 21.6L61.3 21.2L60.8 19.9L60.3 19.9L59.8 21.3L59.3 21.3L58.8 20.8L58.3 20.7L57.8 20.9L57.3 21.6L56.8 19.9L56.3 18.9L55.8 18.9L55.3 19.0L54.8 18.9L54.3 19.0L53.8 19.7L53.3 19.9L52.8 20.0L52.3 21.1L51.8 20.7L51.3 20.4L50.8 19.9L50.3 20.4L49.8 21.5L49.3 21.3L48.8 21.1L48.3 21.4L47.8 19.7L47.3 19.5L46.8 20.9L46.3 21.1L45.8 21.2L45.3 20.7L44.8 20.6L44.3 20.2L43.8 20.8L43.3 21.6L42.8 20.8L42.3 19.8L41.8 19.9L41.3 21.2L40.8 21.2L40.3 21.8L39.8 20.8L39.3 21.7L38.8 20.9L38.3 19.9L37.8 19.8L37.3 18.9L36.8 19.0L36.3 19.0L35.8 18.9L35.3 19.9L34.8 20.1L34.3 19.8L33.8 20.5L33.3 21.1L32.8 20.9L32.3 21.4L31.8 20.1L31.3 19.9L30.8 21.1L30.3 21.2L29.8 21.5L29.3 21.4L28.8 19.5L28.3 20.0L27.8 21.4L27.3 21.2L26.8 21.2L26.3 20.9L25.8 20.3L25.3 20.4L24.8 21.6L24.3 21.6L23.8 20.7L23.3 20.2L22.8 19.8L22.3 21.1L21.8 21.1L21.3 21.4L20.8 20.6L20.3 21.2L19.8 21.2L19.3 19.8L18.8 20.0L18.3 18.9L17.8 19.0L17.3 18.9L16.8 19.0L16.3 20.1L15.8 19.7L15.3 19.5L14.8 21.2L14.3 20.8L13.8 21.1L13.3 20.7L12.8 20.1L12.3 21.1L11.8 21.0L11.3 21.5L10.8 20.9L10.3 19.6L9.8 20.1L9.3 21.5L8.8 20.8L8.3 20.8L7.8 21.1L7.3 20.8L6.8 20.5L6.3 21.6L5.8 21.6L5.3 21.3L4.8 20.1L4.3 20.0L3.8 19.7L3.3 20.9L2.8 21.5L2.3 20.8L1.8 21.8L1.3 20.6L0.8 21.3Z" fill="#1c1c22"/><path d="M0.8 27.6L1.3 26.8L1.8 27.1L2.3 26.9L2.8 27.5L3.3 27.4L3.8 28.5L4.3 28.5L4.8 28.5L5.3 27.3L5.8 27.3L6.3 26.7L6.8 28.0L7.3 28.3L7.8 26.7L8.3 27.6L8.8 27.5L9.3 27.2L9.8 28.7L10.3 28.9L10.8 27.0L11.3 27.0L11.8 27.4L12.3 26.5L12.8 28.4L13.3 28.3L13.8 26.8L14.3 26.9L14.8 27.8L15.3 28.6L15.8 28.3L16.3 28.6L16.8 29.6L17.3 29.6L17.8 29.6L18.3 29.6L18.8 28.8L19.3 28.3L19.8 27.6L20.3 27.6L20.8 27.3L21.3 27.2L21.8 27.2L22.3 27.4L22.8 28.7L23.3 28.6L23.8 26.6L24.3 26.7L24.8 27.3L25.3 28.1L25.8 27.8L26.3 27.4L26.8 27.0L27.3 27.0L27.8 27.0L28.3 28.7L28.8 28.7L29.3 26.8L29.8 27.3L30.3 27.1L30.8 27.0L31.3 28.4L31.8 28.0L32.3 27.5L32.8 27.1L33.3 27.4L33.8 27.0L34.3 28.5L34.8 28.7L35.3 28.9L35.8 29.6L36.3 29.6L36.8 29.6L37.3 29.6L37.8 28.8L38.3 28.8L38.8 27.6L39.3 26.8L39.8 27.0L40.3 27.1L40.8 26.8L41.3 27.1L41.8 28.4L42.3 28.8L42.8 27.4L43.3 27.4L43.8 26.6L44.3 28.1L44.8 28.0L45.3 27.6L45.8 27.1L46.3 26.9L46.8 26.8L47.3 28.8L47.8 28.9L48.3 27.4L48.8 27.5L49.3 26.8L49.8 26.9L50.3 28.5L50.8 28.3L51.3 27.8L51.8 26.9L52.3 27.8L52.8 28.3L53.3 28.4L53.8 28.5L54.3 29.6L54.8 29.6L55.3 29.6L55.8 29.6L56.3 29.6L56.8 28.5L57.3 26.7L57.8 27.6L58.3 27.3L58.8 27.0L59.3 27.5L59.8 27.3L60.3 28.8L60.8 28.3L61.3 26.7L61.8 26.9L62.3 27.4L62.8 28.0L63.3 27.6L63.8 28.1L64.3 27.0L64.8 27.0L65.3 27.1L65.8 28.7L66.3 28.6L66.8 27.0L67.3 27.1L67.8 27.4L68.3 26.9L68.8 27.8L69.3 28.0L69.8 27.0L70.3 27.2L70.8 27.8L71.3 26.9L71.8 28.6L72.3 28.6L72.8 28.5L73.3 29.6L73.8 29.6L74.3 29.6L74.3 31.3L73.8 31.4L73.3 31.4L72.8 32.4L72.3 32.4L71.8 32.3L71.3 33.6L70.8 33.1L70.3 33.3L69.8 33.9L69.3 32.9L68.8 33.1L68.3 33.7L67.8 33.5L67.3 33.9L66.8 33.8L66.3 32.3L65.8 32.2L65.3 33.4L64.8 33.9L64.3 33.8L63.8 32.9L63.3 33.3L62.8 33.0L62.3 33.2L61.8 33.8L61.3 34.1L60.8 32.5L60.3 32.1L59.8 33.4L59.3 33.4L58.8 33.9L58.3 33.4L57.8 33.0L57.3 34.0L56.8 32.2L56.3 31.4L55.8 31.4L55.3 31.3L54.8 31.3L54.3 31.3L53.8 32.4L53.3 32.3L52.8 32.4L52.3 33.2L51.8 34.0L51.3 32.9L50.8 32.6L50.3 32.4L49.8 33.7L49.3 34.0L48.8 33.3L48.3 33.1L47.8 32.0L47.3 32.1L46.8 33.9L46.3 33.7L45.8 33.8L45.3 33.2L44.8 32.8L44.3 32.8L43.8 34.4L43.3 33.2L42.8 33.3L42.3 31.9L41.8 32.5L41.3 33.8L40.8 33.8L40.3 33.5L39.8 33.6L39.3 34.1L38.8 33.3L38.3 32.1L37.8 32.1L37.3 31.4L36.8 31.3L36.3 31.4L35.8 31.4L35.3 31.9L34.8 32.3L34.3 32.3L33.8 33.8L33.3 33.2L32.8 33.4L32.3 33.4L31.8 32.8L31.3 32.6L30.8 33.9L30.3 33.7L29.8 33.5L29.3 33.9L28.8 32.1L28.3 32.1L27.8 33.7L27.3 33.7L26.8 33.6L26.3 33.2L25.8 33.0L25.3 32.7L24.8 33.5L24.3 34.2L23.8 33.9L23.3 32.3L22.8 32.2L22.3 33.1L21.8 33.5L21.3 33.7L20.8 33.5L20.3 33.1L19.8 33.1L19.3 32.5L18.8 32.1L18.3 31.3L17.8 31.4L17.3 31.4L16.8 31.3L16.3 32.4L15.8 32.5L15.3 32.3L14.8 33.0L14.3 34.0L13.8 33.9L13.3 32.4L12.8 32.5L12.3 34.3L11.8 33.2L11.3 33.5L10.8 33.8L10.3 32.0L9.8 32.1L9.3 33.7L8.8 33.4L8.3 33.0L7.8 34.1L7.3 32.7L6.8 33.0L6.3 34.2L5.8 33.6L5.3 33.6L4.8 32.3L4.3 32.4L3.8 32.3L3.3 33.4L2.8 33.4L2.3 33.7L1.8 33.8L1.3 34.0L0.8 33.2Z" fill="#1c1c22"/></svg></div>
<div class="a" style="left:795.00px;top:102.10px;width:61.20px;height:36.40px;background:#92a7ff;overflow:hidden;"><div class="a" style="left:0;top:11.60px;width:100%;height:24.80px;background-image:repeating-linear-gradient(90deg,#8193e1 0,#8193e1 1px,rgba(0,0,0,0) 1px,rgba(0,0,0,0) 9.39px);background-position:-8.81px 0;"></div><div class="a" style="left:0;top:11.20px;width:100%;height:0.9px;background:#6674b2"></div><div class="a" style="left:0;top:0;width:0.9px;height:100%;background:#6674b2"></div><svg class="a" style="left:0;top:0" width="61.20" height="37"><path d="M0.8 16.2L1.3 16.4L1.8 14.7L2.3 14.7L2.8 14.5L3.3 14.4L3.8 14.4L4.3 15.1L4.8 16.0L5.3 16.1L5.8 15.1L6.3 15.1L6.8 14.2L7.3 15.4L7.8 15.9L8.3 15.2L8.8 14.5L9.3 15.2L9.8 14.6L10.3 16.5L10.8 16.1L11.3 15.0L11.8 14.7L12.3 14.6L12.8 15.1L13.3 15.8L13.8 15.9L14.3 14.9L14.8 14.8L15.3 15.3L15.8 16.5L16.3 15.9L16.8 16.4L17.3 17.2L17.8 17.2L18.3 17.2L18.8 17.2L19.3 17.2L19.8 16.0L20.3 14.8L20.8 14.2L21.3 15.1L21.8 15.0L22.3 14.9L22.8 14.9L23.3 16.0L23.8 16.3L24.3 15.1L24.8 14.4L25.3 14.9L25.8 15.9L26.3 15.9L26.8 15.9L27.3 14.6L27.8 14.7L28.3 14.2L28.8 16.2L29.3 16.3L29.8 14.4L30.3 14.4L30.8 14.3L31.3 15.1L31.8 15.7L32.3 15.7L32.8 14.5L33.3 15.3L33.8 14.8L34.3 14.5L34.8 16.1L35.3 16.0L35.8 16.3L36.3 17.2L36.8 17.2L37.3 17.2L37.8 17.2L38.3 16.4L38.8 16.0L39.3 15.3L39.8 15.1L40.3 14.9L40.8 15.1L41.3 15.1L41.8 14.7L42.3 16.1L42.8 16.5L43.3 14.8L43.8 14.3L44.3 14.7L44.8 15.6L45.3 15.5L45.8 14.7L46.3 15.1L46.8 14.8L47.3 14.4L47.8 16.4L48.3 16.6L48.8 15.1L49.3 14.0L49.8 14.3L50.3 14.2L50.8 15.9L51.3 15.5L51.8 15.3L52.3 14.6L52.8 14.5L53.3 14.6L53.8 15.9L54.3 15.9L54.8 17.2L55.3 17.2L55.8 17.2L56.3 17.2L56.8 17.2L57.3 16.1L57.8 14.8L58.3 14.5L58.8 15.0L59.3 14.3L59.8 14.4L60.3 14.7L60.8 16.1L60.8 19.9L60.3 21.1L59.8 21.7L59.3 21.5L58.8 21.1L58.3 21.4L57.8 21.1L57.3 20.0L56.8 18.9L56.3 18.9L55.8 19.0L55.3 18.9L54.8 19.0L54.3 20.2L53.8 20.3L53.3 21.2L52.8 21.3L52.3 21.3L51.8 20.5L51.3 20.3L50.8 20.1L50.3 21.4L49.8 21.6L49.3 22.0L48.8 21.1L48.3 19.5L47.8 19.8L47.3 21.7L46.8 21.3L46.3 20.7L45.8 21.4L45.3 20.5L44.8 20.4L44.3 21.1L43.8 21.8L43.3 20.9L42.8 19.7L42.3 20.0L41.8 21.0L41.3 21.1L40.8 21.0L40.3 21.0L39.8 21.0L39.3 20.8L38.8 20.1L38.3 19.7L37.8 19.0L37.3 18.9L36.8 18.9L36.3 18.9L35.8 19.7L35.3 20.1L34.8 19.9L34.3 21.3L33.8 21.3L33.3 20.9L32.8 21.3L32.3 20.5L31.8 20.2L31.3 20.9L30.8 21.8L30.3 21.3L29.8 21.5L29.3 19.9L28.8 19.8L28.3 21.9L27.8 21.3L27.3 21.4L26.8 20.3L26.3 20.2L25.8 20.1L25.3 21.1L24.8 21.3L24.3 20.7L23.8 19.6L23.3 20.1L22.8 21.3L22.3 21.2L21.8 21.2L21.3 21.0L20.8 21.5L20.3 21.1L19.8 20.1L19.3 18.9L18.8 19.0L18.3 18.9L17.8 19.0L17.3 19.0L16.8 19.7L16.3 20.2L15.8 19.7L15.3 20.5L14.8 21.1L14.3 21.3L13.8 20.3L13.3 20.3L12.8 20.7L12.3 21.3L11.8 21.3L11.3 21.1L10.8 19.9L10.3 19.7L9.8 21.4L9.3 20.7L8.8 21.6L8.3 21.0L7.8 20.2L7.3 20.6L6.8 21.6L6.3 21.0L5.8 21.0L5.3 20.0L4.8 19.9L4.3 20.7L3.8 21.5L3.3 21.6L2.8 21.5L2.3 21.2L1.8 21.4L1.3 19.8L0.8 19.7Z" fill="#1c1c22"/><path d="M0.8 28.7L1.3 28.7L1.8 26.8L2.3 27.4L2.8 27.1L3.3 27.7L3.8 27.4L4.3 27.2L4.8 28.6L5.3 28.9L5.8 27.2L6.3 27.3L6.8 27.4L7.3 27.7L7.8 27.9L8.3 26.9L8.8 27.2L9.3 26.7L9.8 26.8L10.3 28.6L10.8 28.5L11.3 27.5L11.8 26.9L12.3 27.1L12.8 27.5L13.3 28.1L13.8 27.9L14.3 26.9L14.8 27.4L15.3 27.5L15.8 28.3L16.3 28.5L16.8 28.4L17.3 29.6L17.8 29.6L18.3 29.6L18.8 29.6L19.3 29.6L19.8 28.4L20.3 26.8L20.8 26.7L21.3 26.6L21.8 27.3L22.3 27.2L22.8 27.1L23.3 28.4L23.8 28.8L24.3 27.1L24.8 27.4L25.3 26.5L25.8 28.3L26.3 28.0L26.8 28.3L27.3 27.1L27.8 27.3L28.3 27.3L28.8 28.6L29.3 29.0L29.8 27.2L30.3 26.6L30.8 26.6L31.3 27.3L31.8 28.5L32.3 28.4L32.8 27.5L33.3 27.3L33.8 27.3L34.3 27.2L34.8 28.3L35.3 28.6L35.8 28.8L36.3 29.6L36.8 29.6L37.3 29.6L37.8 29.6L38.3 28.3L38.8 28.4L39.3 27.4L39.8 27.2L40.3 27.4L40.8 27.5L41.3 27.0L41.8 27.3L42.3 28.6L42.8 28.6L43.3 27.0L43.8 26.5L44.3 27.0L44.8 27.8L45.3 28.0L45.8 27.6L46.3 27.6L46.8 26.8L47.3 27.0L47.8 28.8L48.3 28.8L48.8 27.1L49.3 27.5L49.8 27.5L50.3 27.1L50.8 28.1L51.3 28.6L51.8 27.1L52.3 26.8L52.8 27.4L53.3 27.7L53.8 28.8L54.3 28.5L54.8 29.6L55.3 29.6L55.8 29.6L56.3 29.6L56.8 29.6L57.3 28.9L57.8 27.6L58.3 26.7L58.8 26.7L59.3 26.8L59.8 26.7L60.3 27.4L60.8 28.9L60.8 31.9L60.3 33.3L59.8 34.0L59.3 33.7L58.8 33.9L58.3 33.9L57.8 33.4L57.3 32.0L56.8 31.3L56.3 31.3L55.8 31.3L55.3 31.4L54.8 31.4L54.3 32.4L53.8 32.1L53.3 33.1L52.8 33.4L52.3 33.9L51.8 33.7L51.3 32.3L50.8 32.7L50.3 33.8L49.8 33.2L49.3 33.3L48.8 33.5L48.3 32.0L47.8 32.0L47.3 33.5L46.8 34.0L46.3 33.2L45.8 33.0L45.3 32.9L44.8 32.9L44.3 33.7L43.8 34.3L43.3 33.7L42.8 32.3L42.3 32.1L41.8 33.6L41.3 33.5L40.8 33.4L40.3 33.6L39.8 33.7L39.3 33.3L38.8 32.5L38.3 32.5L37.8 31.4L37.3 31.3L36.8 31.3L36.3 31.3L35.8 32.0L35.3 32.2L34.8 32.6L34.3 33.6L33.8 33.6L33.3 33.6L32.8 33.5L32.3 32.4L31.8 32.3L31.3 33.4L30.8 34.3L30.3 34.4L29.8 33.5L29.3 31.9L28.8 32.2L28.3 33.4L27.8 33.4L27.3 33.6L26.8 32.4L26.3 32.7L25.8 32.5L25.3 34.4L24.8 33.3L24.3 33.8L23.8 32.2L23.3 32.5L22.8 33.9L22.3 33.4L21.8 33.2L21.3 33.9L20.8 33.9L20.3 34.1L19.8 32.4L19.3 31.3L18.8 31.3L18.3 31.3L17.8 31.3L17.3 31.4L16.8 32.3L16.3 32.3L15.8 32.7L15.3 33.5L14.8 33.3L14.3 33.8L13.8 33.1L13.3 32.6L12.8 33.3L12.3 33.6L11.8 33.8L11.3 33.4L10.8 32.5L10.3 32.4L9.8 34.0L9.3 34.2L8.8 33.3L8.3 33.9L7.8 33.1L7.3 33.3L6.8 33.4L6.3 33.4L5.8 33.5L5.3 32.0L4.8 32.3L4.3 33.7L3.8 33.5L3.3 33.2L2.8 33.8L2.3 33.4L1.8 34.2L1.3 32.1L0.8 32.2Z" fill="#1c1c22"/></svg></div>
<div style="left:6.20px;top:141.70px;width:319.88px;height:2.20px;background:#86bff5;"></div>
<div style="left:25.60px;top:147.00px;width:751.20px;height:1.90px;background:#78aadc;"></div>
<div style="left:795.58px;top:143.60px;width:60.62px;height:1.20px;background:#7fb4e6;"></div>
<div style="left:795.58px;top:145.55px;width:60.62px;height:1.20px;background:#7fb4e6;"></div>
<div style="left:795.58px;top:147.50px;width:60.62px;height:1.20px;background:#7fb4e6;"></div>
<div style="left:776.80px;top:149.45px;width:79.40px;height:1.20px;background:#7fb4e6;"></div>
<div class="a" style="left:175.84px;top:153.80px;width:150.24px;height:36.90px;background:#5cffe8;overflow:hidden;"><div class="a" style="left:0;top:11.60px;width:100%;height:25.30px;background-image:repeating-linear-gradient(90deg,#51e1cd 0,#51e1cd 1px,rgba(0,0,0,0) 1px,rgba(0,0,0,0) 9.39px);background-position:-9.39px 0;"></div><div class="a" style="left:0;top:11.20px;width:100%;height:0.9px;background:#40b2a2"></div><div class="a" style="left:0;top:0;width:0.9px;height:100%;background:#40b2a2"></div><svg class="a" style="left:0;top:0" width="150.24" height="37.00"><path d="M0.50 15.30h3.70v1.30h-3.70zM27.90 15.30h1.90v1.30h-1.90zM65.60 15.30h1.90v1.30h-1.90zM75.62 15.30h3.70v1.30h-3.70zM103.02 15.30h1.90v1.30h-1.90zM140.72 15.30h1.90v1.30h-1.90zM13.60 28.20h4.60v1.30h-4.60zM32.38 28.20h4.60v1.30h-4.60zM51.16 28.20h4.60v1.30h-4.60zM69.94 28.20h4.60v1.30h-4.60zM88.72 28.20h4.60v1.30h-4.60zM107.50 28.20h4.60v1.30h-4.60zM126.28 28.20h4.60v1.30h-4.60zM145.06 28.20h4.60v1.30h-4.60zM6.10 32.50h4.70v1.30h-4.70zM18.60 32.50h4.70v1.30h-4.70zM43.66 32.50h4.70v1.30h-4.70zM56.16 32.50h4.70v1.30h-4.70zM81.22 32.50h4.70v1.30h-4.70zM93.72 32.50h4.70v1.30h-4.70zM118.78 32.50h4.70v1.30h-4.70zM131.28 32.50h4.70v1.30h-4.70z" fill="#2a2a2a"/></svg></div>
<div class="a" style="left:326.08px;top:153.80px;width:150.24px;height:36.90px;background:#5cffe8;overflow:hidden;"><div class="a" style="left:0;top:11.60px;width:100%;height:25.30px;background-image:repeating-linear-gradient(90deg,#51e1cd 0,#51e1cd 1px,rgba(0,0,0,0) 1px,rgba(0,0,0,0) 9.39px);background-position:-9.39px 0;"></div><div class="a" style="left:0;top:11.20px;width:100%;height:0.9px;background:#40b2a2"></div><div class="a" style="left:0;top:0;width:0.9px;height:100%;background:#40b2a2"></div><svg class="a" style="left:0;top:0" width="150.24" height="37.00"><path d="M0.50 15.30h3.70v1.30h-3.70zM27.90 15.30h1.90v1.30h-1.90zM65.60 15.30h1.90v1.30h-1.90zM75.62 15.30h3.70v1.30h-3.70zM103.02 15.30h1.90v1.30h-1.90zM140.72 15.30h1.90v1.30h-1.90zM13.60 28.20h4.60v1.30h-4.60zM32.38 28.20h4.60v1.30h-4.60zM51.16 28.20h4.60v1.30h-4.60zM69.94 28.20h4.60v1.30h-4.60zM88.72 28.20h4.60v1.30h-4.60zM107.50 28.20h4.60v1.30h-4.60zM126.28 28.20h4.60v1.30h-4.60zM145.06 28.20h4.60v1.30h-4.60zM6.10 32.50h4.70v1.30h-4.70zM18.60 32.50h4.70v1.30h-4.70zM43.66 32.50h4.70v1.30h-4.70zM56.16 32.50h4.70v1.30h-4.70zM81.22 32.50h4.70v1.30h-4.70zM93.72 32.50h4.70v1.30h-4.70zM118.78 32.50h4.70v1.30h-4.70zM131.28 32.50h4.70v1.30h-4.70z" fill="#2a2a2a"/></svg></div>
<div class="a" style="left:476.32px;top:153.80px;width:150.24px;height:36.90px;background:#5cffe8;overflow:hidden;"><div class="a" style="left:0;top:11.60px;width:100%;height:25.30px;background-image:repeating-linear-gradient(90deg,#51e1cd 0,#51e1cd 1px,rgba(0,0,0,0) 1px,rgba(0,0,0,0) 9.39px);background-position:-9.39px 0;"></div><div class="a" style="left:0;top:11.20px;width:100%;height:0.9px;background:#40b2a2"></div><div class="a" style="left:0;top:0;width:0.9px;height:100%;background:#40b2a2"></div><svg class="a" style="left:0;top:0" width="150.24" height="37.00"><path d="M0.50 15.30h3.70v1.30h-3.70zM27.90 15.30h1.90v1.30h-1.90zM65.60 15.30h1.90v1.30h-1.90zM75.62 15.30h3.70v1.30h-3.70zM103.02 15.30h1.90v1.30h-1.90zM140.72 15.30h1.90v1.30h-1.90zM13.60 28.20h4.60v1.30h-4.60zM32.38 28.20h4.60v1.30h-4.60zM51.16 28.20h4.60v1.30h-4.60zM69.94 28.20h4.60v1.30h-4.60zM88.72 28.20h4.60v1.30h-4.60zM107.50 28.20h4.60v1.30h-4.60zM126.28 28.20h4.60v1.30h-4.60zM145.06 28.20h4.60v1.30h-4.60zM6.10 32.50h4.70v1.30h-4.70zM18.60 32.50h4.70v1.30h-4.70zM43.66 32.50h4.70v1.30h-4.70zM56.16 32.50h4.70v1.30h-4.70zM81.22 32.50h4.70v1.30h-4.70zM93.72 32.50h4.70v1.30h-4.70zM118.78 32.50h4.70v1.30h-4.70zM131.28 32.50h4.70v1.30h-4.70z" fill="#2a2a2a"/></svg></div>
<div class="a" style="left:776.80px;top:153.80px;width:79.40px;height:36.90px;background:#5cffe8;overflow:hidden;"><div class="a" style="left:0;top:11.60px;width:100%;height:25.30px;background-image:repeating-linear-gradient(90deg,#51e1cd 0,#51e1cd 1px,rgba(0,0,0,0) 1px,rgba(0,0,0,0) 9.39px);background-position:-9.39px 0;"></div><div class="a" style="left:0;top:11.20px;width:100%;height:0.9px;background:#40b2a2"></div><div class="a" style="left:0;top:0;width:0.9px;height:100%;background:#40b2a2"></div><svg class="a" style="left:0;top:0" width="80.00" height="37.00"><path d="M27.40 15.30h1.50v1.30h-1.50zM65.60 15.30h1.50v1.30h-1.50zM74.20 15.30h5.00v1.30h-5.00zM32.30 28.10h3.70v1.30h-3.70zM52.60 28.10h4.80v1.30h-4.80zM70.50 28.10h3.00v1.30h-3.00zM18.00 32.30h4.90v1.30h-4.90zM43.50 32.30h5.10v1.30h-5.10zM55.50 32.30h3.70v1.30h-3.70z" fill="#2a2a2a"/></svg></div>
<div class="a" style="left:307.60px;top:192.30px;width:18.48px;height:11.40px;background:#5cffe8;overflow:hidden;"></div>
<div class="a" style="left:457.84px;top:192.30px;width:18.48px;height:11.40px;background:#5cffe8;overflow:hidden;"></div>
<div class="a" style="left:608.08px;top:192.30px;width:18.48px;height:11.40px;background:#5cffe8;overflow:hidden;"></div>
<div class="a" style="left:326.08px;top:205.40px;width:150.24px;height:24.80px;background:#edffae;overflow:hidden;"><div class="a" style="left:0;top:11.60px;width:100%;height:13.20px;background-image:repeating-linear-gradient(90deg,#d1e199 0,#d1e199 1px,rgba(0,0,0,0) 1px,rgba(0,0,0,0) 9.39px);background-position:-9.39px 0;"></div><div class="a" style="left:0;top:11.20px;width:100%;height:0.9px;background:#a5b279"></div><div class="a" style="left:0;top:0;width:0.9px;height:100%;background:#a5b279"></div><div class="a" style="left:1px;top:15.9px;width:100%;height:5.3px;background:#20201c"></div></div>
<div class="a" style="left:175.84px;top:231.90px;width:56.34px;height:36.90px;background:#f7f47c;overflow:hidden;"><div class="a" style="left:0;top:11.60px;width:100%;height:25.30px;background-image:repeating-linear-gradient(90deg,#dad76d 0,#dad76d 1px,rgba(0,0,0,0) 1px,rgba(0,0,0,0) 9.39px);background-position:-9.39px 0;"></div><div class="a" style="left:0;top:11.20px;width:100%;height:0.9px;background:#acaa56"></div><div class="a" style="left:0;top:0;width:0.9px;height:100%;background:#acaa56"></div><svg class="a" style="left:0;top:0" width="57.00" height="37.00"><path d="M0.50 21.90h3.60v1.00h-3.60zM27.70 21.90h1.80v1.00h-1.80zM6.40 30.00h4.70v1.00h-4.70zM13.40 27.90h5.00v1.00h-5.00zM18.50 30.00h4.70v1.00h-4.70zM32.60 27.90h4.10v1.00h-4.10zM44.20 30.00h4.40v1.00h-4.40zM51.40 27.90h4.40v1.00h-4.40z" fill="#4a4925"/></svg></div>
<div class="a" style="left:326.08px;top:231.90px;width:75.12px;height:36.90px;background:#f7f47c;overflow:hidden;"><div class="a" style="left:0;top:11.60px;width:100%;height:25.30px;background-image:repeating-linear-gradient(90deg,#dad76d 0,#dad76d 1px,rgba(0,0,0,0) 1px,rgba(0,0,0,0) 9.39px);background-position:-9.39px 0;"></div><div class="a" style="left:0;top:11.20px;width:100%;height:0.9px;background:#acaa56"></div><div class="a" style="left:0;top:0;width:0.9px;height:100%;background:#acaa56"></div><svg class="a" style="left:0;top:0" width="76.00" height="37.00"><path d="M0.00 18.10h37.60v0.90h-37.60zM0.00 20.90h37.60v0.90h-37.60zM0.00 23.10h37.60v0.90h-37.60zM37.60 19.80h18.20v0.90h-18.20zM55.80 17.30h19.00v0.90h-19.00z" fill="#4a4925"/></svg></div>
<div style="left:476.32px;top:271.20px;width:37.56px;height:3.10px;background:#ee9a6c;"></div>
<div style="left:551.44px;top:271.20px;width:225.36px;height:3.10px;background:#ee9a6c;"></div>
<div style="left:326.08px;top:275.10px;width:300.48px;height:3.10px;background:#ee9a6c;"></div>
<div style="left:776.80px;top:275.10px;width:79.40px;height:3.10px;background:#ee9a6c;"></div>
<div style="left:175.84px;top:278.90px;width:450.72px;height:3.20px;background:#ffa374;"></div>
<div class="a" style="left:6.20px;top:283.80px;width:19.40px;height:37.00px;background:#ff94a6;overflow:hidden;"><div class="a" style="left:0;top:11.60px;width:100%;height:25.40px;background-image:repeating-linear-gradient(90deg,#e18292 0,#e18292 1px,rgba(0,0,0,0) 1px,rgba(0,0,0,0) 9.39px);background-position:-8.77px 0;"></div><div class="a" style="left:0;top:11.20px;width:100%;height:0.9px;background:#b26774"></div><div class="a" style="left:0;top:0;width:0.9px;height:100%;background:#b26774"></div><div class="a" style="left:0;top:17.3px;width:100%;height:0.9px;background:#4a2a30"></div><div class="a" style="left:0;top:30.0px;width:100%;height:0.9px;background:#4a2a30"></div><div class="a" style="left:2.3px;top:3.2px;font-size:7px;color:#222;letter-spacing:0.3px;font-weight:bold">...</div></div>
<div class="a" style="left:25.60px;top:283.80px;width:150.24px;height:37.00px;background:#ff94a6;overflow:hidden;"><div class="a" style="left:0;top:11.60px;width:100%;height:25.40px;background-image:repeating-linear-gradient(90deg,#e18292 0,#e18292 1px,rgba(0,0,0,0) 1px,rgba(0,0,0,0) 9.39px);background-position:-9.39px 0;"></div><div class="a" style="left:0;top:11.20px;width:100%;height:0.9px;background:#b26774"></div><div class="a" style="left:0;top:0;width:0.9px;height:100%;background:#b26774"></div><div class="a" style="left:0;top:17.3px;width:100%;height:0.9px;background:#4a2a30"></div><div class="a" style="left:0;top:30.0px;width:100%;height:0.9px;background:#4a2a30"></div></div>
<div class="a" style="left:326.08px;top:283.80px;width:150.24px;height:37.00px;background:#ff94a6;overflow:hidden;"><div class="a" style="left:0;top:11.60px;width:100%;height:25.40px;background-image:repeating-linear-gradient(90deg,#e18292 0,#e18292 1px,rgba(0,0,0,0) 1px,rgba(0,0,0,0) 9.39px);background-position:-9.39px 0;"></div><div class="a" style="left:0;top:11.20px;width:100%;height:0.9px;background:#b26774"></div><div class="a" style="left:0;top:0;width:0.9px;height:100%;background:#b26774"></div><div class="a" style="left:0;top:17.3px;width:100%;height:0.9px;background:#4a2a30"></div><div class="a" style="left:0;top:30.0px;width:100%;height:0.9px;background:#4a2a30"></div><svg class="a" style="left:136.24px;top:11.6px" width="14" height="25.4"><path d="M0 0H14V25.4Q10 14 0 0Z" fill="rgba(110,40,60,0.2)"/></svg></div>
<div class="a" style="left:626.56px;top:283.80px;width:150.24px;height:37.00px;background:#ff94a6;overflow:hidden;"><div class="a" style="left:0;top:11.60px;width:100%;height:25.40px;background-image:repeating-linear-gradient(90deg,#e18292 0,#e18292 1px,rgba(0,0,0,0) 1px,rgba(0,0,0,0) 9.39px);background-position:-9.39px 0;"></div><div class="a" style="left:0;top:11.20px;width:100%;height:0.9px;background:#b26774"></div><div class="a" style="left:0;top:0;width:0.9px;height:100%;background:#b26774"></div><div class="a" style="left:0;top:17.3px;width:100%;height:0.9px;background:#4a2a30"></div><div class="a" style="left:0;top:30.0px;width:100%;height:0.9px;background:#4a2a30"></div><svg class="a" style="left:136.24px;top:11.6px" width="14" height="25.4"><path d="M0 0H14V25.4Q10 14 0 0Z" fill="rgba(110,40,60,0.2)"/></svg></div>
<div class="a" style="left:25.90px;top:322.40px;width:149.94px;height:11.40px;background:#ff94a6;overflow:hidden;"></div>
<svg class="a" style="left:312.00px;top:322.40px" width="18.50" height="11.40"><path d="M0 11.40L3.00 0H17.50L18.50 11.40Z" fill="#ff94a6"/></svg>
<svg class="a" style="left:401.20px;top:322.40px" width="75.12" height="11.40"><rect width="75.12" height="11.40" fill="#ff94a6"/><path d="M0 0H24.5Q12 6 3.5 11.40H0Z" fill="rgba(110,40,60,0.2)"/><path d="M65.12 0H75.12V11.40Z" fill="rgba(110,40,60,0.2)"/></svg>
<svg class="a" style="left:701.70px;top:322.40px" width="75.10" height="11.40"><rect width="75.10" height="11.40" fill="#ff94a6"/><path d="M0 0H24.5Q12 6 3.5 11.40H0Z" fill="rgba(110,40,60,0.2)"/><path d="M65.10 0H75.10V11.40Z" fill="rgba(110,40,60,0.2)"/></svg>
<svg class="a" style="left:612.70px;top:322.40px" width="13.86" height="11.40"><path d="M0 11.40L3.00 0H13.86L13.86 11.40Z" fill="#ff94a6"/></svg>
<div class="a" style="left:138.58px;top:335.70px;width:37.26px;height:11.70px;background:#d86ce4;overflow:hidden;"></div>
<div class="a" style="left:401.50px;top:335.70px;width:74.82px;height:11.70px;background:#d86ce4;overflow:hidden;"></div>
<div class="a" style="left:702.00px;top:335.70px;width:74.80px;height:11.70px;background:#d86ce4;overflow:hidden;"></div>
<div class="a" style="left:25.90px;top:349.20px;width:149.94px;height:11.60px;background:#d86ce4;overflow:hidden;"></div>
<div class="a" style="left:326.38px;top:349.20px;width:149.94px;height:11.60px;background:#d86ce4;overflow:hidden;"></div>
<div style="left:442.50px;top:63.00px;width:0.60px;height:329.50px;background:rgba(20,20,20,0.55);"></div>
<div style="left:443.10px;top:63.00px;width:1.00px;height:329.50px;background:#cfcfcf;"></div>
<div style="left:442.50px;top:63.10px;width:1.60px;height:37.30px;background:#8a8a8a;mix-blend-mode:multiply;"></div>
<div style="left:443.10px;top:63.10px;width:1.00px;height:37.30px;background:#26262a;"></div>
<div style="left:442.50px;top:102.10px;width:1.60px;height:36.40px;background:#8a8a8a;mix-blend-mode:multiply;"></div>
<div style="left:443.10px;top:102.10px;width:1.00px;height:36.40px;background:#26262a;"></div>
<div style="left:442.50px;top:153.80px;width:1.60px;height:36.90px;background:#8a8a8a;mix-blend-mode:multiply;"></div>
<div style="left:443.10px;top:153.80px;width:1.00px;height:36.90px;background:#26262a;"></div>
<div style="left:442.50px;top:205.40px;width:1.60px;height:24.80px;background:#8a8a8a;mix-blend-mode:multiply;"></div>
<div style="left:443.10px;top:205.40px;width:1.00px;height:24.80px;background:#26262a;"></div>
<div style="left:442.50px;top:283.80px;width:1.60px;height:37.00px;background:#8a8a8a;mix-blend-mode:multiply;"></div>
<div style="left:443.10px;top:283.80px;width:1.00px;height:37.00px;background:#26262a;"></div>
<div style="left:442.50px;top:335.70px;width:1.60px;height:11.70px;background:#8a8a8a;mix-blend-mode:multiply;"></div>
<div style="left:443.10px;top:335.70px;width:1.00px;height:11.70px;background:#26262a;"></div>
<div style="left:442.50px;top:349.20px;width:1.60px;height:11.60px;background:#8a8a8a;mix-blend-mode:multiply;"></div>
<div style="left:443.10px;top:349.20px;width:1.00px;height:11.60px;background:#26262a;"></div>
<div style="left:442.50px;top:141.60px;width:1.60px;height:2.40px;background:#8a8a8a;mix-blend-mode:multiply;"></div>
<div style="left:443.10px;top:141.60px;width:1.00px;height:2.40px;background:#26262a;"></div>
<div style="left:442.50px;top:146.90px;width:1.60px;height:2.10px;background:#8a8a8a;mix-blend-mode:multiply;"></div>
<div style="left:443.10px;top:146.90px;width:1.00px;height:2.10px;background:#26262a;"></div>
<div style="left:442.50px;top:275.10px;width:1.60px;height:7.00px;background:#8a8a8a;mix-blend-mode:multiply;"></div>
<div style="left:443.10px;top:275.10px;width:1.00px;height:7.00px;background:#26262a;"></div>
<div style="left:442.50px;top:322.40px;width:1.60px;height:11.40px;background:#8a8a8a;mix-blend-mode:multiply;"></div>
<div style="left:443.10px;top:322.40px;width:1.00px;height:11.40px;background:#26262a;"></div>
<div class="a" style="left:834px;top:377.5px;font-size:13.5px;font-weight:bold;color:#707070;letter-spacing:0.2px">1/2</div>
<div style="left:6.20px;top:392.60px;width:850.00px;height:15.00px;background:#363636;"></div>
<div class="a" style="left:12.70px;top:393.2px;width:0.9px;height:5.4px;background:#868686"></div>
<div class="a rl" style="left:14.40px;top:395.8px;font-size:7.1px;letter-spacing:0.3px;color:#a4a4a4">0:10</div>
<div class="a" style="left:81.12px;top:393.2px;width:0.9px;height:5.4px;background:#868686"></div>
<div class="a rl" style="left:82.82px;top:395.8px;font-size:7.1px;letter-spacing:0.3px;color:#a4a4a4">0:15</div>
<div class="a" style="left:149.55px;top:393.2px;width:0.9px;height:5.4px;background:#868686"></div>
<div class="a rl" style="left:151.25px;top:395.8px;font-size:7.1px;letter-spacing:0.3px;color:#a4a4a4">0:20</div>
<div class="a" style="left:217.97px;top:393.2px;width:0.9px;height:5.4px;background:#868686"></div>
<div class="a rl" style="left:219.68px;top:395.8px;font-size:7.1px;letter-spacing:0.3px;color:#a4a4a4">0:25</div>
<div class="a" style="left:286.40px;top:393.2px;width:0.9px;height:5.4px;background:#868686"></div>
<div class="a rl" style="left:288.10px;top:395.8px;font-size:7.1px;letter-spacing:0.3px;color:#a4a4a4">0:30</div>
<div class="a" style="left:354.83px;top:393.2px;width:0.9px;height:5.4px;background:#868686"></div>
<div class="a rl" style="left:356.53px;top:395.8px;font-size:7.1px;letter-spacing:0.3px;color:#a4a4a4">0:35</div>
<div class="a" style="left:423.25px;top:393.2px;width:0.9px;height:5.4px;background:#868686"></div>
<div class="a rl" style="left:424.95px;top:395.8px;font-size:7.1px;letter-spacing:0.3px;color:#a4a4a4">0:40</div>
<div class="a" style="left:491.68px;top:393.2px;width:0.9px;height:5.4px;background:#868686"></div>
<div class="a rl" style="left:493.38px;top:395.8px;font-size:7.1px;letter-spacing:0.3px;color:#a4a4a4">0:45</div>
<div class="a" style="left:560.10px;top:393.2px;width:0.9px;height:5.4px;background:#868686"></div>
<div class="a rl" style="left:561.80px;top:395.8px;font-size:7.1px;letter-spacing:0.3px;color:#a4a4a4">0:50</div>
<div class="a" style="left:628.53px;top:393.2px;width:0.9px;height:5.4px;background:#868686"></div>
<div class="a rl" style="left:630.23px;top:395.8px;font-size:7.1px;letter-spacing:0.3px;color:#a4a4a4">0:55</div>
<div class="a" style="left:696.95px;top:393.2px;width:0.9px;height:5.4px;background:#868686"></div>
<div class="a rl" style="left:698.65px;top:395.8px;font-size:7.1px;letter-spacing:0.3px;color:#a4a4a4">1:00</div>
<div class="a" style="left:765.38px;top:393.2px;width:0.9px;height:5.4px;background:#868686"></div>
<div class="a rl" style="left:767.08px;top:395.8px;font-size:7.1px;letter-spacing:0.3px;color:#a4a4a4">1:05</div>
<div class="a" style="left:833.80px;top:393.2px;width:0.9px;height:5.4px;background:#868686"></div>
<div class="a rl" style="left:835.50px;top:395.8px;font-size:7.1px;letter-spacing:0.3px;color:#a4a4a4">1:10</div>
<div class="a" style="left:26.39px;top:393.3px;width:0.8px;height:1.4px;background:#5c5c5c"></div>
<div class="a" style="left:40.07px;top:393.3px;width:0.8px;height:1.4px;background:#5c5c5c"></div>
<div class="a" style="left:53.76px;top:393.3px;width:0.8px;height:1.4px;background:#5c5c5c"></div>
<div class="a" style="left:67.44px;top:393.3px;width:0.8px;height:1.4px;background:#5c5c5c"></div>
<div class="a" style="left:94.81px;top:393.3px;width:0.8px;height:1.4px;background:#5c5c5c"></div>
<div class="a" style="left:108.49px;top:393.3px;width:0.8px;height:1.4px;background:#5c5c5c"></div>
<div class="a" style="left:122.18px;top:393.3px;width:0.8px;height:1.4px;background:#5c5c5c"></div>
<div class="a" style="left:135.87px;top:393.3px;width:0.8px;height:1.4px;background:#5c5c5c"></div>
<div class="a" style="left:163.23px;top:393.3px;width:0.8px;height:1.4px;background:#5c5c5c"></div>
<div class="a" style="left:176.92px;top:393.3px;width:0.8px;height:1.4px;background:#5c5c5c"></div>
<div class="a" style="left:190.60px;top:393.3px;width:0.8px;height:1.4px;background:#5c5c5c"></div>
<div class="a" style="left:204.29px;top:393.3px;width:0.8px;height:1.4px;background:#5c5c5c"></div>
<div class="a" style="left:231.66px;top:393.3px;width:0.8px;height:1.4px;background:#5c5c5c"></div>
<div class="a" style="left:245.34px;top:393.3px;width:0.8px;height:1.4px;background:#5c5c5c"></div>
<div class="a" style="left:259.03px;top:393.3px;width:0.8px;height:1.4px;background:#5c5c5c"></div>
<div class="a" style="left:272.72px;top:393.3px;width:0.8px;height:1.4px;background:#5c5c5c"></div>
<div class="a" style="left:300.09px;top:393.3px;width:0.8px;height:1.4px;background:#5c5c5c"></div>
<div class="a" style="left:313.77px;top:393.3px;width:0.8px;height:1.4px;background:#5c5c5c"></div>
<div class="a" style="left:327.46px;top:393.3px;width:0.8px;height:1.4px;background:#5c5c5c"></div>
<div class="a" style="left:341.14px;top:393.3px;width:0.8px;height:1.4px;background:#5c5c5c"></div>
<div class="a" style="left:368.51px;top:393.3px;width:0.8px;height:1.4px;background:#5c5c5c"></div>
<div class="a" style="left:382.20px;top:393.3px;width:0.8px;height:1.4px;background:#5c5c5c"></div>
<div class="a" style="left:395.88px;top:393.3px;width:0.8px;height:1.4px;background:#5c5c5c"></div>
<div class="a" style="left:409.57px;top:393.3px;width:0.8px;height:1.4px;background:#5c5c5c"></div>
<div class="a" style="left:436.94px;top:393.3px;width:0.8px;height:1.4px;background:#5c5c5c"></div>
<div class="a" style="left:450.62px;top:393.3px;width:0.8px;height:1.4px;background:#5c5c5c"></div>
<div class="a" style="left:464.31px;top:393.3px;width:0.8px;height:1.4px;background:#5c5c5c"></div>
<div class="a" style="left:477.99px;top:393.3px;width:0.8px;height:1.4px;background:#5c5c5c"></div>
<div class="a" style="left:505.36px;top:393.3px;width:0.8px;height:1.4px;background:#5c5c5c"></div>
<div class="a" style="left:519.05px;top:393.3px;width:0.8px;height:1.4px;background:#5c5c5c"></div>
<div class="a" style="left:532.73px;top:393.3px;width:0.8px;height:1.4px;background:#5c5c5c"></div>
<div class="a" style="left:546.42px;top:393.3px;width:0.8px;height:1.4px;background:#5c5c5c"></div>
<div class="a" style="left:573.79px;top:393.3px;width:0.8px;height:1.4px;background:#5c5c5c"></div>
<div class="a" style="left:587.47px;top:393.3px;width:0.8px;height:1.4px;background:#5c5c5c"></div>
<div class="a" style="left:601.16px;top:393.3px;width:0.8px;height:1.4px;background:#5c5c5c"></div>
<div class="a" style="left:614.84px;top:393.3px;width:0.8px;height:1.4px;background:#5c5c5c"></div>
<div class="a" style="left:642.21px;top:393.3px;width:0.8px;height:1.4px;background:#5c5c5c"></div>
<div class="a" style="left:655.90px;top:393.3px;width:0.8px;height:1.4px;background:#5c5c5c"></div>
<div class="a" style="left:669.58px;top:393.3px;width:0.8px;height:1.4px;background:#5c5c5c"></div>
<div class="a" style="left:683.27px;top:393.3px;width:0.8px;height:1.4px;background:#5c5c5c"></div>
<div class="a" style="left:710.64px;top:393.3px;width:0.8px;height:1.4px;background:#5c5c5c"></div>
<div class="a" style="left:724.32px;top:393.3px;width:0.8px;height:1.4px;background:#5c5c5c"></div>
<div class="a" style="left:738.01px;top:393.3px;width:0.8px;height:1.4px;background:#5c5c5c"></div>
<div class="a" style="left:751.69px;top:393.3px;width:0.8px;height:1.4px;background:#5c5c5c"></div>
<div class="a" style="left:779.06px;top:393.3px;width:0.8px;height:1.4px;background:#5c5c5c"></div>
<div class="a" style="left:792.75px;top:393.3px;width:0.8px;height:1.4px;background:#5c5c5c"></div>
<div class="a" style="left:806.43px;top:393.3px;width:0.8px;height:1.4px;background:#5c5c5c"></div>
<div class="a" style="left:820.12px;top:393.3px;width:0.8px;height:1.4px;background:#5c5c5c"></div>
<div class="a" style="left:847.49px;top:393.3px;width:0.8px;height:1.4px;background:#5c5c5c"></div>
<svg class="a" style="left:323.08px;top:393.8px" width="6" height="3.4"><path d="M0.2 3.2H5.8L3 0.2Z" fill="#19c8e4"/></svg>
<div style="left:856.20px;top:62.00px;width:1.10px;height:331.00px;background:#222222;"></div>
<div style="left:931.20px;top:100.60px;width:85.50px;height:1.10px;background:#2b2b2b;"></div>
<div class="a" style="left:857.30px;top:63.10px;width:73.90px;height:37.30px;background:#92a7ff;"><div class="a" style="left:2.2px;top:0.9px;line-height:0"><svg width="10.2" height="10.2" viewBox="0 0 9 9"><circle cx="4.5" cy="4.5" r="4.1" fill="none" stroke="#222" stroke-width="0.7"/><path d="M2.6 3.4H6.4L4.5 6.2Z" fill="#222"/></svg></div><div class="a tn" style="left:16.3px;top:1.3px">Drums</div></div>
<div class="cb dk" style="left:933.80px;top:64.80px;width:32.20px;height:8.40px;background:#ffad56;">1</div>
<div class="cb" style="left:969.00px;top:64.80px;width:14.90px;height:8.40px;background:#1e1e1e;">S</div>
<div class="cb" style="left:987.00px;top:64.80px;width:14.70px;height:8.40px;background:#1e1e1e;"><svg width="7" height="7" viewBox="0 0 7 7" style="transform:translateY(0.7px)"><circle cx="3.5" cy="3.5" r="2.5" fill="#c8c8c8"/><path d="M3.5 1V3.5L2 5.4" stroke="#1e1e1e" stroke-width="1" fill="none"/></svg></div>
<div class="cb" style="left:933.80px;top:76.80px;width:32.20px;height:8.50px;background:#1e1e1e;"><div class="a" style="left:0;top:0;height:8.5px;width:26.7px;background:#0f7a8c"></div><span style="position:relative">-1.0</span></div>
<div class="cb" style="left:969.00px;top:76.80px;width:32.70px;height:8.50px;background:#1e1e1e;">C</div>
<div class="cb" style="left:933.80px;top:88.80px;width:20.80px;height:8.50px;background:#1e1e1e;"><div class="a" style="left:0.8px;top:3px;height:4.6px;width:1.6px;background:#1592a8"></div><div class="a" style="left:-0.1px;top:-0.1px;width:2.9px;height:2.9px;border-radius:2px;background:#ff3636"></div><span style="position:relative">-52.8</span></div>
<div class="cb" style="left:957.30px;top:88.80px;width:20.80px;height:8.50px;background:#1e1e1e;"><div class="a" style="left:-0.1px;top:-0.1px;width:2.9px;height:2.9px;border-radius:2px;background:#ff3636"></div><span style="position:relative"><span style="line-height:8px"><span style="font-size:8px">&#8722;</span><span style="font-size:11px;margin-left:-0.3px">&#8734;</span></span></span></div>
<div style="left:1004.30px;top:65.10px;width:2.30px;height:33.70px;background:#1c1c1c;"></div>
<div style="left:1004.30px;top:81.95px;width:2.30px;height:16.85px;background:#2ee560;"></div>
<div style="left:1004.30px;top:71.84px;width:2.30px;height:0.90px;background:#d9a000;"></div>
<div style="left:1007.50px;top:65.10px;width:2.30px;height:33.70px;background:#1c1c1c;"></div>
<div style="left:1007.50px;top:81.95px;width:2.30px;height:16.85px;background:#2ee560;"></div>
<div style="left:1007.50px;top:72.44px;width:2.30px;height:0.90px;background:#d9a000;"></div>
<div style="left:931.20px;top:138.70px;width:85.50px;height:1.10px;background:#2b2b2b;"></div>
<div class="a" style="left:857.30px;top:102.10px;width:73.90px;height:36.40px;background:#92a7ff;"><div class="a" style="left:2.2px;top:0.9px;line-height:0"><svg width="10.2" height="10.2" viewBox="0 0 9 9"><circle cx="4.5" cy="4.5" r="4.1" fill="none" stroke="#222" stroke-width="0.7"/><path d="M2.6 3.4H6.4L4.5 6.2Z" fill="#222"/></svg></div><div class="a tn" style="left:16.3px;top:1.3px">Breaks</div></div>
<div class="cb dk" style="left:933.80px;top:103.80px;width:32.20px;height:8.40px;background:#ffad56;">2</div>
<div class="cb" style="left:969.00px;top:103.80px;width:14.90px;height:8.40px;background:#1e1e1e;">S</div>
<div class="cb" style="left:987.00px;top:103.80px;width:14.70px;height:8.40px;background:#1e1e1e;"><svg width="7" height="7" viewBox="0 0 7 7" style="transform:translateY(0.7px)"><circle cx="3.5" cy="3.5" r="2.6" fill="#727272"/></svg></div>
<div class="cb" style="left:933.80px;top:115.80px;width:32.20px;height:8.50px;background:#1e1e1e;"><div class="a" style="left:0;top:0;height:8.5px;width:20.0px;background:#0f7a8c"></div><span style="position:relative">-9.4</span></div>
<div class="cb" style="left:969.00px;top:115.80px;width:32.70px;height:8.50px;background:#1e1e1e;">C</div>
<div class="cb" style="left:933.80px;top:127.80px;width:20.80px;height:8.50px;background:#1e1e1e;"><div class="a" style="left:-0.1px;top:-0.1px;width:2.9px;height:2.9px;border-radius:2px;background:#ff3636"></div><span style="position:relative"><span style="line-height:8px"><span style="font-size:8px">&#8722;</span><span style="font-size:11px;margin-left:-0.3px">&#8734;</span></span></span></div>
<div class="cb" style="left:957.30px;top:127.80px;width:20.80px;height:8.50px;background:#1e1e1e;"><span style="position:relative"><span style="line-height:8px"><span style="font-size:8px">&#8722;</span><span style="font-size:11px;margin-left:-0.3px">&#8734;</span></span></span></div>
<div style="left:1004.30px;top:104.10px;width:2.30px;height:32.80px;background:#1c1c1c;"></div>
<div style="left:1004.30px;top:121.16px;width:2.30px;height:15.74px;background:#2ee560;"></div>
<div style="left:1004.30px;top:111.32px;width:2.30px;height:4.26px;background:#a9a018;"></div>
<div style="left:1004.30px;top:115.58px;width:2.30px;height:5.58px;background:#3f9a3a;"></div>
<div style="left:1007.50px;top:104.10px;width:2.30px;height:32.80px;background:#1c1c1c;"></div>
<div style="left:1007.50px;top:121.16px;width:2.30px;height:15.74px;background:#2ee560;"></div>
<div style="left:1007.50px;top:111.32px;width:2.30px;height:4.26px;background:#a9a018;"></div>
<div style="left:1007.50px;top:115.58px;width:2.30px;height:5.58px;background:#3f9a3a;"></div>
<div style="left:931.20px;top:152.40px;width:85.50px;height:1.10px;background:#2b2b2b;"></div>
<div class="a" style="left:857.30px;top:140.30px;width:73.90px;height:11.90px;background:#8bc5ff;"><div class="a" style="left:2.2px;top:0.8px;line-height:0"><svg width="10.2" height="10.2" viewBox="0 0 9 9"><circle cx="4.5" cy="4.5" r="4.1" fill="none" stroke="#222" stroke-width="0.7"/><path d="M2.8 3.3H6.2M2.8 4.5H6.2M2.8 5.7H6.2" stroke="#222" stroke-width="0.6"/></svg></div><div class="a tn" style="left:16.3px;top:1.2px">Percussion</div></div>
<div class="cb dk" style="left:933.80px;top:141.80px;width:32.20px;height:8.40px;background:#ffad56;">3</div>
<div class="cb" style="left:969.00px;top:141.80px;width:14.90px;height:8.40px;background:#1e1e1e;">S</div>
<div style="left:1004.30px;top:141.30px;width:2.30px;height:9.90px;background:#1c1c1c;background-image:repeating-linear-gradient(180deg,rgba(0,0,0,0) 0,rgba(0,0,0,0) 2px,#363636 2px,#363636 2.6px);"></div>
<div style="left:1004.30px;top:148.43px;width:2.30px;height:2.77px;background:#2ee560;"></div>
<div style="left:1007.50px;top:141.30px;width:2.30px;height:9.90px;background:#1c1c1c;background-image:repeating-linear-gradient(180deg,rgba(0,0,0,0) 0,rgba(0,0,0,0) 2px,#363636 2px,#363636 2.6px);"></div>
<div style="left:1007.50px;top:148.43px;width:2.30px;height:2.77px;background:#2ee560;"></div>
<div style="left:931.20px;top:153.00px;width:85.50px;height:38.50px;background:#464646;"></div>
<div style="left:931.20px;top:190.90px;width:85.50px;height:1.10px;background:#2b2b2b;"></div>
<div class="a" style="left:857.30px;top:153.80px;width:73.90px;height:36.90px;background:#5cffe8;"><div class="a" style="left:2.2px;top:0.9px;line-height:0"><svg width="10.2" height="10.2" viewBox="0 0 9 9"><circle cx="4.5" cy="4.5" r="4.1" fill="none" stroke="#222" stroke-width="0.7"/><path d="M2.6 3.4H6.4L4.5 6.2Z" fill="#222"/></svg></div><div class="a tn" style="left:16.3px;top:1.3px">Bass</div></div>
<div class="cb dk" style="left:933.80px;top:155.50px;width:32.20px;height:8.40px;background:#ffad56;">8</div>
<div class="cb" style="left:969.00px;top:155.50px;width:14.90px;height:8.40px;background:#1e1e1e;">S</div>
<div class="cb" style="left:987.00px;top:155.50px;width:14.70px;height:8.40px;background:#1e1e1e;"><svg width="7" height="7" viewBox="0 0 7 7" style="transform:translateY(0.7px)"><circle cx="3.5" cy="3.5" r="2.5" fill="#c8c8c8"/><path d="M3.5 1V3.5L2 5.4" stroke="#1e1e1e" stroke-width="1" fill="none"/></svg></div>
<div class="cb" style="left:933.80px;top:167.50px;width:32.20px;height:8.50px;background:#1e1e1e;"><div class="a" style="left:0;top:0;height:8.5px;width:21.3px;background:#0f7a8c"></div><span style="position:relative">-7.7</span></div>
<div class="cb" style="left:969.00px;top:167.50px;width:32.70px;height:8.50px;background:#1e1e1e;">C</div>
<div class="cb" style="left:933.80px;top:179.50px;width:20.80px;height:8.50px;background:#1e1e1e;"><span style="position:relative"><span style="line-height:8px"><span style="font-size:8px">&#8722;</span><span style="font-size:11px;margin-left:-0.3px">&#8734;</span></span></span></div>
<div class="cb" style="left:957.30px;top:179.50px;width:20.80px;height:8.50px;background:#1e1e1e;"><span style="position:relative"><span style="line-height:8px"><span style="font-size:8px">&#8722;</span><span style="font-size:11px;margin-left:-0.3px">&#8734;</span></span></span></div>
<div style="left:1004.30px;top:155.80px;width:2.30px;height:33.30px;background:#1c1c1c;"></div>
<div style="left:1004.30px;top:170.78px;width:2.30px;height:18.31px;background:#2ee560;"></div>
<div style="left:1004.30px;top:164.79px;width:2.30px;height:0.90px;background:#d9c000;"></div>
<div style="left:1007.50px;top:155.80px;width:2.30px;height:33.30px;background:#1c1c1c;"></div>
<div style="left:1007.50px;top:170.78px;width:2.30px;height:18.31px;background:#2ee560;"></div>
<div style="left:1007.50px;top:165.39px;width:2.30px;height:0.90px;background:#d9c000;"></div>
<div style="left:931.20px;top:203.90px;width:85.50px;height:1.10px;background:#2b2b2b;"></div>
<div class="a" style="left:857.30px;top:192.30px;width:73.90px;height:11.40px;background:#5cffe8;"><div class="a" style="left:2.2px;top:0.8px;line-height:0"><svg width="10.2" height="10.2" viewBox="0 0 9 9"><circle cx="4.5" cy="4.5" r="4.1" fill="none" stroke="#222" stroke-width="0.7"/><path d="M3.5 2.6V6.4L6.3 4.5Z" fill="#222"/></svg></div><div class="a tn" style="left:16.3px;top:1.2px">Bass Drop</div></div>
<div class="cb dk" style="left:933.80px;top:193.80px;width:32.20px;height:8.40px;background:#ffad56;">9</div>
<div class="cb" style="left:969.00px;top:193.80px;width:14.90px;height:8.40px;background:#1e1e1e;">S</div>
<div class="cb" style="left:987.00px;top:193.80px;width:14.70px;height:8.40px;background:#1e1e1e;"><svg width="7" height="7" viewBox="0 0 7 7" style="transform:translateY(0.7px)"><circle cx="3.5" cy="3.5" r="2.5" fill="#c8c8c8"/><path d="M3.5 1V3.5L2 5.4" stroke="#1e1e1e" stroke-width="1" fill="none"/></svg></div>
<div style="left:1004.30px;top:193.30px;width:2.30px;height:9.40px;background:#1c1c1c;background-image:repeating-linear-gradient(180deg,rgba(0,0,0,0) 0,rgba(0,0,0,0) 2px,#363636 2px,#363636 2.6px);"></div>
<div style="left:1007.50px;top:193.30px;width:2.30px;height:9.40px;background:#1c1c1c;background-image:repeating-linear-gradient(180deg,rgba(0,0,0,0) 0,rgba(0,0,0,0) 2px,#363636 2px,#363636 2.6px);"></div>
<div style="left:931.20px;top:230.40px;width:85.50px;height:1.10px;background:#2b2b2b;"></div>
<div class="a" style="left:857.30px;top:205.40px;width:73.90px;height:24.80px;background:#edffae;"><div class="a" style="left:2.2px;top:0.9px;line-height:0"><svg width="10.2" height="10.2" viewBox="0 0 9 9"><circle cx="4.5" cy="4.5" r="4.1" fill="none" stroke="#222" stroke-width="0.7"/><path d="M2.6 3.4H6.4L4.5 6.2Z" fill="#222"/></svg></div><div class="a tn" style="left:16.3px;top:1.3px">Synth Riser</div></div>
<div class="cb dk" style="left:933.80px;top:207.10px;width:32.20px;height:8.40px;background:#ffad56;">10</div>
<div class="cb" style="left:969.00px;top:207.10px;width:14.90px;height:8.40px;background:#1e1e1e;">S</div>
<div class="cb" style="left:987.00px;top:207.10px;width:14.70px;height:8.40px;background:#1e1e1e;"><svg width="7" height="7" viewBox="0 0 7 7" style="transform:translateY(0.7px)"><circle cx="3.5" cy="3.5" r="2.5" fill="#c8c8c8"/><path d="M3.5 1V3.5L2 5.4" stroke="#1e1e1e" stroke-width="1" fill="none"/></svg></div>
<div class="cb" style="left:933.80px;top:219.10px;width:32.20px;height:8.50px;background:#1e1e1e;"><div class="a" style="left:0;top:0;height:8.5px;width:12.9px;background:#0f7a8c"></div><span style="position:relative">-18.0</span></div>
<div class="cb" style="left:969.00px;top:219.10px;width:32.70px;height:8.50px;background:#1e1e1e;">C</div>
<div style="left:1004.30px;top:207.40px;width:2.30px;height:21.20px;background:#1c1c1c;"></div>
<div style="left:1004.30px;top:219.06px;width:2.30px;height:9.54px;background:#2ee560;"></div>
<div style="left:1007.50px;top:207.40px;width:2.30px;height:21.20px;background:#1c1c1c;"></div>
<div style="left:1007.50px;top:219.06px;width:2.30px;height:9.54px;background:#2ee560;"></div>
<div style="left:931.20px;top:269.00px;width:85.50px;height:1.10px;background:#2b2b2b;"></div>
<div class="a" style="left:857.30px;top:231.90px;width:73.90px;height:36.90px;background:#f7f47c;"><div class="a" style="left:2.2px;top:0.9px;line-height:0"><svg width="10.2" height="10.2" viewBox="0 0 9 9"><circle cx="4.5" cy="4.5" r="4.1" fill="none" stroke="#222" stroke-width="0.7"/><path d="M2.6 3.4H6.4L4.5 6.2Z" fill="#222"/></svg></div><div class="a tn" style="left:16.3px;top:1.3px">Keys</div></div>
<div class="cb dk" style="left:933.80px;top:233.60px;width:32.20px;height:8.40px;background:#ffad56;">11</div>
<div class="cb" style="left:969.00px;top:233.60px;width:14.90px;height:8.40px;background:#1e1e1e;">S</div>
<div class="cb" style="left:987.00px;top:233.60px;width:14.70px;height:8.40px;background:#1e1e1e;"><svg width="7" height="7" viewBox="0 0 7 7" style="transform:translateY(0.7px)"><circle cx="3.5" cy="3.5" r="2.5" fill="#c8c8c8"/><path d="M3.5 1V3.5L2 5.4" stroke="#1e1e1e" stroke-width="1" fill="none"/></svg></div>
<div class="cb" style="left:933.80px;top:245.60px;width:32.20px;height:8.50px;background:#1e1e1e;"><div class="a" style="left:0;top:0;height:8.5px;width:22.2px;background:#0f7a8c"></div><span style="position:relative">-6.6</span></div>
<div class="cb" style="left:969.00px;top:245.60px;width:32.70px;height:8.50px;background:#1e1e1e;">C</div>
<div class="cb" style="left:933.80px;top:257.60px;width:20.80px;height:8.50px;background:#1e1e1e;"><span style="position:relative"><span style="line-height:8px"><span style="font-size:8px">&#8722;</span><span style="font-size:11px;margin-left:-0.3px">&#8734;</span></span></span></div>
<div class="cb" style="left:957.30px;top:257.60px;width:20.80px;height:8.50px;background:#1e1e1e;"><span style="position:relative"><span style="line-height:8px"><span style="font-size:8px">&#8722;</span><span style="font-size:11px;margin-left:-0.3px">&#8734;</span></span></span></div>
<div style="left:1004.30px;top:233.90px;width:2.30px;height:33.30px;background:#1c1c1c;"></div>
<div style="left:1004.30px;top:266.20px;width:2.30px;height:1.00px;background:#2ee560;"></div>
<div style="left:1004.30px;top:245.89px;width:2.30px;height:0.90px;background:#9acd32;"></div>
<div style="left:1007.50px;top:233.90px;width:2.30px;height:33.30px;background:#1c1c1c;"></div>
<div style="left:1007.50px;top:266.20px;width:2.30px;height:1.00px;background:#2ee560;"></div>
<div style="left:1007.50px;top:246.49px;width:2.30px;height:0.90px;background:#9acd32;"></div>
<div style="left:931.20px;top:282.40px;width:85.50px;height:1.10px;background:#2b2b2b;"></div>
<div class="a" style="left:857.30px;top:270.40px;width:73.90px;height:11.80px;background:#ffa374;"><div class="a" style="left:2.2px;top:0.8px;line-height:0"><svg width="10.2" height="10.2" viewBox="0 0 9 9"><circle cx="4.5" cy="4.5" r="4.1" fill="none" stroke="#222" stroke-width="0.7"/><path d="M2.8 3.3H6.2M2.8 4.5H6.2M2.8 5.7H6.2" stroke="#222" stroke-width="0.6"/></svg></div><div class="a tn" style="left:16.3px;top:1.2px">Pads</div></div>
<div class="cb dk" style="left:933.80px;top:271.90px;width:32.20px;height:8.40px;background:#ffad56;">12</div>
<div class="cb" style="left:969.00px;top:271.90px;width:14.90px;height:8.40px;background:#1e1e1e;">S</div>
<div style="left:1004.30px;top:271.40px;width:2.30px;height:9.80px;background:#1c1c1c;background-image:repeating-linear-gradient(180deg,rgba(0,0,0,0) 0,rgba(0,0,0,0) 2px,#363636 2px,#363636 2.6px);"></div>
<div style="left:1004.30px;top:275.81px;width:2.30px;height:5.39px;background:#2ee560;"></div>
<div style="left:1004.30px;top:272.38px;width:2.30px;height:0.90px;background:#d9c000;"></div>
<div style="left:1007.50px;top:271.40px;width:2.30px;height:9.80px;background:#1c1c1c;background-image:repeating-linear-gradient(180deg,rgba(0,0,0,0) 0,rgba(0,0,0,0) 2px,#363636 2px,#363636 2.6px);"></div>
<div style="left:1007.50px;top:275.81px;width:2.30px;height:5.39px;background:#2ee560;"></div>
<div style="left:1007.50px;top:272.98px;width:2.30px;height:0.90px;background:#d9c000;"></div>
<div style="left:931.20px;top:321.00px;width:85.50px;height:1.10px;background:#2b2b2b;"></div>
<div class="a" style="left:857.30px;top:283.80px;width:73.90px;height:37.00px;background:#ff94a6;"><div class="a" style="left:2.2px;top:0.9px;line-height:0"><svg width="10.2" height="10.2" viewBox="0 0 9 9"><circle cx="4.5" cy="4.5" r="4.1" fill="none" stroke="#222" stroke-width="0.7"/><path d="M2.6 3.4H6.4L4.5 6.2Z" fill="#222"/></svg></div><div class="a tn" style="left:16.3px;top:1.3px">Ambience</div></div>
<div class="cb dk" style="left:933.80px;top:285.50px;width:32.20px;height:8.40px;background:#ffad56;">16</div>
<div class="cb" style="left:969.00px;top:285.50px;width:14.90px;height:8.40px;background:#1e1e1e;">S</div>
<div class="cb" style="left:987.00px;top:285.50px;width:14.70px;height:8.40px;background:#1e1e1e;"><svg width="7" height="7" viewBox="0 0 7 7" style="transform:translateY(0.7px)"><circle cx="3.5" cy="3.5" r="2.6" fill="#727272"/></svg></div>
<div class="cb" style="left:933.80px;top:297.50px;width:32.20px;height:8.50px;background:#1e1e1e;"><div class="a" style="left:0;top:0;height:8.5px;width:20.6px;background:#0f7a8c"></div><span style="position:relative">-8.3</span></div>
<div class="cb" style="left:969.00px;top:297.50px;width:32.70px;height:8.50px;background:#1e1e1e;">C</div>
<div class="cb" style="left:933.80px;top:309.50px;width:20.80px;height:8.50px;background:#1e1e1e;"><span style="position:relative"><span style="line-height:8px"><span style="font-size:8px">&#8722;</span><span style="font-size:11px;margin-left:-0.3px">&#8734;</span></span></span></div>
<div class="cb" style="left:957.30px;top:309.50px;width:20.80px;height:8.50px;background:#1e1e1e;"><span style="position:relative"><span style="line-height:8px"><span style="font-size:8px">&#8722;</span><span style="font-size:11px;margin-left:-0.3px">&#8734;</span></span></span></div>
<div style="left:1004.30px;top:285.80px;width:2.30px;height:33.40px;background:#1c1c1c;"></div>
<div style="left:1004.30px;top:305.84px;width:2.30px;height:13.36px;background:#2ee560;"></div>
<div style="left:1007.50px;top:285.80px;width:2.30px;height:33.40px;background:#1c1c1c;"></div>
<div style="left:1007.50px;top:305.84px;width:2.30px;height:13.36px;background:#2ee560;"></div>
<div style="left:931.20px;top:334.00px;width:85.50px;height:1.10px;background:#2b2b2b;"></div>
<div class="a" style="left:857.30px;top:322.40px;width:73.90px;height:11.40px;background:#ff94a6;"><div class="a" style="left:2.2px;top:0.8px;line-height:0"><svg width="10.2" height="10.2" viewBox="0 0 9 9"><circle cx="4.5" cy="4.5" r="4.1" fill="none" stroke="#222" stroke-width="0.7"/><path d="M3.5 2.6V6.4L6.3 4.5Z" fill="#222"/></svg></div><div class="a tn" style="left:16.3px;top:1.2px">Drone</div></div>
<div class="cb dk" style="left:933.80px;top:323.90px;width:32.20px;height:8.40px;background:#ffad56;">17</div>
<div class="cb" style="left:969.00px;top:323.90px;width:14.90px;height:8.40px;background:#1e1e1e;">S</div>
<div class="cb" style="left:987.00px;top:323.90px;width:14.70px;height:8.40px;background:#1e1e1e;"><svg width="7" height="7" viewBox="0 0 7 7" style="transform:translateY(0.7px)"><circle cx="3.5" cy="3.5" r="2.6" fill="#727272"/></svg></div>
<div style="left:1004.30px;top:323.40px;width:2.30px;height:9.40px;background:#1c1c1c;background-image:repeating-linear-gradient(180deg,rgba(0,0,0,0) 0,rgba(0,0,0,0) 2px,#363636 2px,#363636 2.6px);"></div>
<div style="left:1004.30px;top:327.16px;width:2.30px;height:5.64px;background:#2ee560;"></div>
<div style="left:1007.50px;top:323.40px;width:2.30px;height:9.40px;background:#1c1c1c;background-image:repeating-linear-gradient(180deg,rgba(0,0,0,0) 0,rgba(0,0,0,0) 2px,#363636 2px,#363636 2.6px);"></div>
<div style="left:1007.50px;top:327.16px;width:2.30px;height:5.64px;background:#2ee560;"></div>
<div style="left:931.20px;top:347.60px;width:85.50px;height:1.10px;background:#2b2b2b;"></div>
<div class="a" style="left:857.30px;top:335.70px;width:73.90px;height:11.70px;background:#d86ce4;"><div class="a" style="left:2.2px;top:0.8px;line-height:0"><svg width="10.2" height="10.2" viewBox="0 0 9 9"><circle cx="4.5" cy="4.5" r="4.1" fill="none" stroke="#222" stroke-width="0.7"/><path d="M3.5 2.6V6.4L6.3 4.5Z" fill="#222"/></svg></div><div class="a tn" style="left:16.3px;top:1.2px">FX</div></div>
<div class="cb dk" style="left:933.80px;top:337.20px;width:32.20px;height:8.40px;background:#ffad56;">18</div>
<div class="cb" style="left:969.00px;top:337.20px;width:14.90px;height:8.40px;background:#1e1e1e;">S</div>
<div class="cb" style="left:987.00px;top:337.20px;width:14.70px;height:8.40px;background:#1e1e1e;"><svg width="7" height="7" viewBox="0 0 7 7" style="transform:translateY(0.7px)"><circle cx="3.5" cy="3.5" r="2.6" fill="#727272"/></svg></div>
<div style="left:1004.30px;top:336.70px;width:2.30px;height:9.70px;background:#1c1c1c;background-image:repeating-linear-gradient(180deg,rgba(0,0,0,0) 0,rgba(0,0,0,0) 2px,#363636 2px,#363636 2.6px);"></div>
<div style="left:1004.30px;top:339.61px;width:2.30px;height:6.79px;background:#2ee560;"></div>
<div style="left:1007.50px;top:336.70px;width:2.30px;height:9.70px;background:#1c1c1c;background-image:repeating-linear-gradient(180deg,rgba(0,0,0,0) 0,rgba(0,0,0,0) 2px,#363636 2px,#363636 2.6px);"></div>
<div style="left:1007.50px;top:339.61px;width:2.30px;height:6.79px;background:#2ee560;"></div>
<div style="left:931.20px;top:361.00px;width:85.50px;height:1.10px;background:#2b2b2b;"></div>
<div class="a" style="left:857.30px;top:349.20px;width:73.90px;height:11.60px;background:#d86ce4;"><div class="a" style="left:2.2px;top:0.8px;line-height:0"><svg width="10.2" height="10.2" viewBox="0 0 9 9"><circle cx="4.5" cy="4.5" r="4.1" fill="none" stroke="#222" stroke-width="0.7"/><path d="M3.5 2.6V6.4L6.3 4.5Z" fill="#222"/></svg></div><div class="a tn" style="left:16.3px;top:1.2px">Zap</div></div>
<div class="cb dk" style="left:933.80px;top:350.70px;width:32.20px;height:8.40px;background:#ffad56;">19</div>
<div class="cb" style="left:969.00px;top:350.70px;width:14.90px;height:8.40px;background:#1e1e1e;">S</div>
<div class="cb" style="left:987.00px;top:350.70px;width:14.70px;height:8.40px;background:#1e1e1e;"><svg width="7" height="7" viewBox="0 0 7 7" style="transform:translateY(0.7px)"><circle cx="3.5" cy="3.5" r="2.5" fill="#c8c8c8"/><path d="M3.5 1V3.5L2 5.4" stroke="#1e1e1e" stroke-width="1" fill="none"/></svg></div>
<div style="left:1004.30px;top:350.20px;width:2.30px;height:9.60px;background:#1c1c1c;background-image:repeating-linear-gradient(180deg,rgba(0,0,0,0) 0,rgba(0,0,0,0) 2px,#363636 2px,#363636 2.6px);"></div>
<div style="left:1004.30px;top:353.56px;width:2.30px;height:6.24px;background:#2ee560;"></div>
<div style="left:1007.50px;top:350.20px;width:2.30px;height:9.60px;background:#1c1c1c;background-image:repeating-linear-gradient(180deg,rgba(0,0,0,0) 0,rgba(0,0,0,0) 2px,#363636 2px,#363636 2.6px);"></div>
<div style="left:1007.50px;top:353.56px;width:2.30px;height:6.24px;background:#2ee560;"></div>
<div style="left:857.30px;top:362.50px;width:73.90px;height:15.20px;background:#363636;"></div>
<div class="a" style="left:857.30px;top:379.60px;width:73.90px;height:12.20px;background:#ffffff;"><div class="a" style="left:2.6px;top:1.5px;line-height:0"><svg width="10.2" height="10.2" viewBox="0 0 9 9"><circle cx="4.5" cy="4.5" r="4.1" fill="none" stroke="#222" stroke-width="0.7"/><path d="M3.5 2.6V6.4L6.3 4.5Z" fill="#222"/></svg></div><div class="a tn" style="left:18.6px;top:1.2px">Main</div></div>
<div class="cb" style="left:934.00px;top:381.00px;width:31.60px;height:9.20px;background:#1e1e1e;"><div class="a" style="left:0;top:0;height:9.2px;width:27px;background:#0f7a8c"></div><span style="position:relative;left:-2.5px">0</span></div>
<div class="cb" style="left:969.50px;top:381.00px;width:31.60px;height:9.20px;background:#1e1e1e;"><div class="a" style="left:0;top:0;height:9.2px;width:27px;background:#3b6fc6"></div><span style="position:relative;left:-2.5px">0</span></div>
<div style="left:1004.30px;top:381.00px;width:2.30px;height:9.60px;background:#1c1c1c;"></div>
<div style="left:1004.30px;top:384.60px;width:2.30px;height:6.00px;background:#2ee560;"></div>
<div style="left:1004.30px;top:382.40px;width:2.30px;height:0.90px;background:#e03030;"></div>
<div style="left:1007.50px;top:381.00px;width:2.30px;height:9.60px;background:#1c1c1c;"></div>
<div style="left:1007.50px;top:384.60px;width:2.30px;height:6.00px;background:#2ee560;"></div>
<div style="left:1007.50px;top:382.40px;width:2.30px;height:0.90px;background:#e03030;"></div>
<div class="cb" style="left:859.00px;top:37.20px;width:20.40px;height:9.20px;background:#1e1e1e;border-radius:5px;">Set</div>
<div class="cb" style="left:887.00px;top:37.20px;width:17.00px;height:9.20px;background:#1e1e1e;"><svg width="9" height="9" viewBox="0 0 9 9"><path d="M2.5 6.5L6.5 2.5" stroke="#d0d0d0" stroke-width="1"/><path d="M4.6 2.2H6.8V4.4ZM2.2 4.6V6.8H4.4Z" fill="#d0d0d0"/></svg></div>
<div class="cb" style="left:906.30px;top:37.20px;width:16.60px;height:9.20px;background:#1e1e1e;"><svg width="9" height="9" viewBox="0 0 9 9"><rect x="2.3" y="4.2" width="4.4" height="3" fill="#d0d0d0"/><path d="M3.3 4.2V3.2A1.2 1.2 0 0 1 5.7 3.2V4.2" stroke="#d0d0d0" stroke-width="0.8" fill="none"/></svg></div>
<svg class="a" style="left:858.8px;top:50px" width="21" height="9.4"><circle cx="4.7" cy="4.7" r="4.5" fill="#1e1e1e"/><circle cx="15.8" cy="4.7" r="4.5" fill="#1e1e1e"/><path d="M2.3 4.7H7M2.3 4.7L4.4 2.8M2.3 4.7L4.4 6.6" stroke="#d0d0d0" stroke-width="0.9" fill="none"/><path d="M13.5 4.7H18.2M18.2 4.7L16.1 2.8M18.2 4.7L16.1 6.6" stroke="#d0d0d0" stroke-width="0.9" fill="none"/></svg>
<div class="cb" style="left:857.70px;top:396.30px;width:10.00px;height:8.70px;background:#1e1e1e;"><svg width="9" height="8" viewBox="0 0 9 8"><path d="M4.5 1V7M3 2.2V5.8M6 2.2V5.8M1.6 3.3V4.7M7.4 3.3V4.7" stroke="#b9b9b9" stroke-width="0.8"/></svg></div>
<div class="cb" style="left:870.60px;top:396.30px;width:23.80px;height:8.70px;background:#1e1e1e;">1.00x</div>
<div class="cb" style="left:907.00px;top:396.30px;width:9.90px;height:8.70px;background:#1e1e1e;">H</div>
<div class="cb" style="left:919.30px;top:396.30px;width:10.30px;height:8.70px;background:#1e1e1e;">W</div>
<div style="left:6.20px;top:407.80px;width:1010.50px;height:2.20px;background:#2a2a2a;"></div>
<div style="left:6.20px;top:410.00px;width:1010.50px;height:194.30px;background:#363636;border-radius:0 0 4px 4px;"></div>
<div class="a" style="left:6.20px;top:410.20px;width:66.50px;height:12.60px;background:#92a7ff;"><div class="a tn" style="left:2.4px;top:1.5px">Drums</div><div class="a" style="left:54.90px;top:1.2px;width:10px;height:10px;line-height:0"><svg width="10.2" height="10.2" viewBox="0 0 9 9"><circle cx="4.5" cy="4.5" r="4.1" fill="none" stroke="#222" stroke-width="0.7"/><path d="M2.6 3.4H6.4L4.5 6.2Z" fill="#222"/></svg></div></div>
<div style="left:6.20px;top:599.40px;width:66.50px;height:4.60px;background:#92a7ff;border-radius:0 0 0 3px;"></div>
<div class="cb" style="left:11.40px;top:427.40px;width:24.80px;height:9.20px;background:#1e1e1e;border-radius:5px;">-6.44</div>
<div class="cb" style="left:11.40px;top:440.40px;width:24.80px;height:8.80px;background:#1e1e1e;">-1.0</div>
<div style="left:47.90px;top:427.30px;width:4.00px;height:166.10px;background:#191919;border-radius:1px 1px 0 0;"></div>
<div style="left:47.90px;top:511.70px;width:3.90px;height:81.70px;background:#2ee560;"></div>
<div style="left:52.80px;top:427.30px;width:4.00px;height:166.10px;background:#191919;border-radius:1px 1px 0 0;"></div>
<div style="left:52.80px;top:511.70px;width:3.90px;height:81.70px;background:#2ee560;"></div>
<div style="left:47.90px;top:462.00px;width:3.90px;height:1.10px;background:#d9a000;"></div>
<div style="left:52.80px;top:462.00px;width:3.90px;height:1.10px;background:#d9a000;"></div>
<div style="left:47.70px;top:443.90px;width:9.00px;height:0.80px;background:#7c7c7c;"></div>
<div style="left:44.30px;top:427.90px;width:2.20px;height:0.80px;background:#686868;"></div>
<div class="a sl" style="left:59.10px;top:426.00px">6</div>
<div style="left:44.30px;top:443.90px;width:2.20px;height:0.80px;background:#686868;"></div>
<div class="a sl" style="left:59.10px;top:439.70px">0</div>
<div style="left:44.30px;top:460.00px;width:2.20px;height:0.80px;background:#686868;"></div>
<div class="a sl" style="left:59.10px;top:455.80px">6</div>
<div style="left:44.30px;top:476.40px;width:2.20px;height:0.80px;background:#686868;"></div>
<div class="a sl" style="left:59.10px;top:472.20px">12</div>
<div style="left:44.30px;top:493.20px;width:2.20px;height:0.80px;background:#686868;"></div>
<div class="a sl" style="left:59.10px;top:489.00px">18</div>
<div style="left:44.30px;top:509.40px;width:2.20px;height:0.80px;background:#686868;"></div>
<div class="a sl" style="left:59.10px;top:505.20px">24</div>
<div style="left:44.30px;top:526.30px;width:2.20px;height:0.80px;background:#686868;"></div>
<div class="a sl" style="left:59.10px;top:522.10px">30</div>
<div style="left:44.30px;top:540.70px;width:2.20px;height:0.80px;background:#686868;"></div>
<div class="a sl" style="left:59.10px;top:536.50px">36</div>
<div style="left:44.30px;top:553.40px;width:2.20px;height:0.80px;background:#686868;"></div>
<div class="a sl" style="left:59.10px;top:549.20px">42</div>
<div style="left:44.30px;top:564.00px;width:2.20px;height:0.80px;background:#686868;"></div>
<div class="a sl" style="left:59.10px;top:559.80px">48</div>
<div style="left:44.30px;top:574.00px;width:2.20px;height:0.80px;background:#686868;"></div>
<div class="a sl" style="left:59.10px;top:569.80px">54</div>
<div style="left:44.30px;top:583.20px;width:2.20px;height:0.80px;background:#686868;"></div>
<div class="a sl" style="left:59.10px;top:579.00px">60</div>
<div style="left:44.30px;top:589.60px;width:2.20px;height:0.80px;background:#686868;"></div>
<svg class="a" style="left:39.10px;top:442.70px" width="8.4" height="9.2"><path d="M0.3 0.3L8 4.6L0.3 8.9Z" fill="#b4b4b4"/></svg>
<svg class="a" style="left:13.80px;top:529.5px" width="20" height="24"><path d="M4.3 19.6A8.4 8.4 0 1 1 15.7 19.6" fill="none" stroke="#161616" stroke-width="1.45"/><path d="M10 5.2V12.8" stroke="#161616" stroke-width="1.45"/><path d="M7.6 0.4H12.4L10 3Z" fill="#1a1a1a"/></svg>
<div class="cb dk" style="left:15.80px;top:553.80px;width:16.00px;height:15.60px;background:#ffad56;font-size:9.5px;font-weight:bold;">1</div>
<div class="cb" style="left:15.80px;top:572.30px;width:16.00px;height:9.30px;background:#1e1e1e;">S</div>
<div class="cb" style="left:15.80px;top:584.50px;width:16.00px;height:9.30px;background:#1e1e1e;"><svg width="7" height="7" viewBox="0 0 7 7" style="transform:translateY(0.7px)"><circle cx="3.5" cy="3.5" r="2.5" fill="#c8c8c8"/><path d="M3.5 1V3.5L2 5.4" stroke="#1e1e1e" stroke-width="1" fill="none"/></svg></div>
<div style="left:72.70px;top:410.00px;width:1.20px;height:194.00px;background:#2a2a2a;"></div>
<div class="a" style="left:73.90px;top:410.20px;width:66.20px;height:12.60px;background:#92a7ff;"><div class="a tn" style="left:2.4px;top:1.5px">Breaks</div></div>
<div style="left:73.90px;top:599.40px;width:66.20px;height:4.60px;background:#92a7ff;"></div>
<div class="cb" style="left:79.10px;top:427.40px;width:24.80px;height:9.20px;background:#1e1e1e;border-radius:5px;">-10.2</div>
<div class="cb" style="left:79.10px;top:440.40px;width:24.80px;height:8.80px;background:#1e1e1e;">-9.4</div>
<div style="left:115.60px;top:427.30px;width:4.00px;height:166.10px;background:#191919;border-radius:1px 1px 0 0;"></div>
<div style="left:115.60px;top:472.40px;width:3.90px;height:22.20px;background:linear-gradient(180deg,#b0a010 0,#a09c14 55%,#4f9a30 85%,#2aa84a 100%);"></div>
<div style="left:115.60px;top:494.00px;width:3.90px;height:20.30px;background:#2aa84a;"></div>
<div style="left:115.60px;top:513.70px;width:3.90px;height:79.70px;background:#2ee560;"></div>
<div style="left:120.50px;top:427.30px;width:4.00px;height:166.10px;background:#191919;border-radius:1px 1px 0 0;"></div>
<div style="left:120.50px;top:472.40px;width:3.90px;height:22.20px;background:linear-gradient(180deg,#b0a010 0,#a09c14 55%,#4f9a30 85%,#2aa84a 100%);"></div>
<div style="left:120.50px;top:494.00px;width:3.90px;height:20.30px;background:#2aa84a;"></div>
<div style="left:120.50px;top:513.70px;width:3.90px;height:79.70px;background:#2ee560;"></div>
<div style="left:115.40px;top:443.90px;width:9.00px;height:0.80px;background:#7c7c7c;"></div>
<div style="left:112.00px;top:427.90px;width:2.20px;height:0.80px;background:#686868;"></div>
<div class="a sl" style="left:126.80px;top:426.00px">6</div>
<div style="left:112.00px;top:443.90px;width:2.20px;height:0.80px;background:#686868;"></div>
<div class="a sl" style="left:126.80px;top:439.70px">0</div>
<div style="left:112.00px;top:460.00px;width:2.20px;height:0.80px;background:#686868;"></div>
<div class="a sl" style="left:126.80px;top:455.80px">6</div>
<div style="left:112.00px;top:476.40px;width:2.20px;height:0.80px;background:#686868;"></div>
<div class="a sl" style="left:126.80px;top:472.20px">12</div>
<div style="left:112.00px;top:493.20px;width:2.20px;height:0.80px;background:#686868;"></div>
<div class="a sl" style="left:126.80px;top:489.00px">18</div>
<div style="left:112.00px;top:509.40px;width:2.20px;height:0.80px;background:#686868;"></div>
<div class="a sl" style="left:126.80px;top:505.20px">24</div>
<div style="left:112.00px;top:526.30px;width:2.20px;height:0.80px;background:#686868;"></div>
<div class="a sl" style="left:126.80px;top:522.10px">30</div>
<div style="left:112.00px;top:540.70px;width:2.20px;height:0.80px;background:#686868;"></div>
<div class="a sl" style="left:126.80px;top:536.50px">36</div>
<div style="left:112.00px;top:553.40px;width:2.20px;height:0.80px;background:#686868;"></div>
<div class="a sl" style="left:126.80px;top:549.20px">42</div>
<div style="left:112.00px;top:564.00px;width:2.20px;height:0.80px;background:#686868;"></div>
<div class="a sl" style="left:126.80px;top:559.80px">48</div>
<div style="left:112.00px;top:574.00px;width:2.20px;height:0.80px;background:#686868;"></div>
<div class="a sl" style="left:126.80px;top:569.80px">54</div>
<div style="left:112.00px;top:583.20px;width:2.20px;height:0.80px;background:#686868;"></div>
<div class="a sl" style="left:126.80px;top:579.00px">60</div>
<div style="left:112.00px;top:589.60px;width:2.20px;height:0.80px;background:#686868;"></div>
<svg class="a" style="left:106.80px;top:465.60px" width="8.4" height="9.2"><path d="M0.3 0.3L8 4.6L0.3 8.9Z" fill="#b4b4b4"/></svg>
<svg class="a" style="left:81.50px;top:529.5px" width="20" height="24"><path d="M4.3 19.6A8.4 8.4 0 1 1 15.7 19.6" fill="none" stroke="#161616" stroke-width="1.45"/><path d="M10 5.2V12.8" stroke="#161616" stroke-width="1.45"/><path d="M7.6 0.4H12.4L10 3Z" fill="#1a1a1a"/></svg>
<div class="cb dk" style="left:83.50px;top:553.80px;width:16.00px;height:15.60px;background:#ffad56;font-size:9.5px;font-weight:bold;">2</div>
<div class="cb" style="left:83.50px;top:572.30px;width:16.00px;height:9.30px;background:#1e1e1e;">S</div>
<div class="cb" style="left:83.50px;top:584.50px;width:16.00px;height:9.30px;background:#1e1e1e;"><svg width="7" height="7" viewBox="0 0 7 7" style="transform:translateY(0.7px)"><circle cx="3.5" cy="3.5" r="2.6" fill="#727272"/></svg></div>
<div style="left:140.10px;top:410.00px;width:1.20px;height:194.00px;background:#2a2a2a;"></div>
<div class="a" style="left:141.30px;top:410.20px;width:66.30px;height:12.60px;background:#8bc5ff;"><div class="a tn" style="left:2.4px;top:1.5px">Percussion</div><div class="a" style="left:54.70px;top:1.2px;width:10px;height:10px;line-height:0"><svg width="10.2" height="10.2" viewBox="0 0 9 9"><circle cx="4.5" cy="4.5" r="4.1" fill="none" stroke="#222" stroke-width="0.7"/><path d="M2.8 3.3H6.2M2.8 4.5H6.2M2.8 5.7H6.2" stroke="#222" stroke-width="0.6"/></svg></div></div>
<div style="left:141.30px;top:599.40px;width:66.30px;height:4.60px;background:#8bc5ff;"></div>
<div class="cb" style="left:146.50px;top:427.40px;width:24.80px;height:9.20px;background:#1e1e1e;border-radius:5px;">-21.2</div>
<div class="cb" style="left:146.50px;top:440.40px;width:24.80px;height:8.80px;background:#1e1e1e;">0</div>
<div style="left:183.00px;top:427.30px;width:4.00px;height:166.10px;background:#191919;border-radius:1px 1px 0 0;"></div>
<div style="left:183.00px;top:553.70px;width:3.90px;height:11.90px;background:#2aa84a;"></div>
<div style="left:183.00px;top:565.00px;width:3.90px;height:28.40px;background:#2ee560;"></div>
<div style="left:187.90px;top:427.30px;width:4.00px;height:166.10px;background:#191919;border-radius:1px 1px 0 0;"></div>
<div style="left:187.90px;top:559.30px;width:3.90px;height:11.30px;background:#2aa84a;"></div>
<div style="left:187.90px;top:570.00px;width:3.90px;height:23.40px;background:#2ee560;"></div>
<div style="left:183.00px;top:502.50px;width:3.90px;height:1.10px;background:#2ee560;"></div>
<div style="left:187.90px;top:526.50px;width:3.90px;height:1.10px;background:#2ee560;"></div>
<div style="left:182.80px;top:443.90px;width:9.00px;height:0.80px;background:#7c7c7c;"></div>
<div style="left:179.40px;top:427.90px;width:2.20px;height:0.80px;background:#686868;"></div>
<div class="a sl" style="left:194.20px;top:426.00px">6</div>
<div style="left:179.40px;top:443.90px;width:2.20px;height:0.80px;background:#686868;"></div>
<div class="a sl" style="left:194.20px;top:439.70px">0</div>
<div style="left:179.40px;top:460.00px;width:2.20px;height:0.80px;background:#686868;"></div>
<div class="a sl" style="left:194.20px;top:455.80px">6</div>
<div style="left:179.40px;top:476.40px;width:2.20px;height:0.80px;background:#686868;"></div>
<div class="a sl" style="left:194.20px;top:472.20px">12</div>
<div style="left:179.40px;top:493.20px;width:2.20px;height:0.80px;background:#686868;"></div>
<div class="a sl" style="left:194.20px;top:489.00px">18</div>
<div style="left:179.40px;top:509.40px;width:2.20px;height:0.80px;background:#686868;"></div>
<div class="a sl" style="left:194.20px;top:505.20px">24</div>
<div style="left:179.40px;top:526.30px;width:2.20px;height:0.80px;background:#686868;"></div>
<div class="a sl" style="left:194.20px;top:522.10px">30</div>
<div style="left:179.40px;top:540.70px;width:2.20px;height:0.80px;background:#686868;"></div>
<div class="a sl" style="left:194.20px;top:536.50px">36</div>
<div style="left:179.40px;top:553.40px;width:2.20px;height:0.80px;background:#686868;"></div>
<div class="a sl" style="left:194.20px;top:549.20px">42</div>
<div style="left:179.40px;top:564.00px;width:2.20px;height:0.80px;background:#686868;"></div>
<div class="a sl" style="left:194.20px;top:559.80px">48</div>
<div style="left:179.40px;top:574.00px;width:2.20px;height:0.80px;background:#686868;"></div>
<div class="a sl" style="left:194.20px;top:569.80px">54</div>
<div style="left:179.40px;top:583.20px;width:2.20px;height:0.80px;background:#686868;"></div>
<div class="a sl" style="left:194.20px;top:579.00px">60</div>
<div style="left:179.40px;top:589.60px;width:2.20px;height:0.80px;background:#686868;"></div>
<svg class="a" style="left:174.20px;top:439.70px" width="8.4" height="9.2"><path d="M0.3 0.3L8 4.6L0.3 8.9Z" fill="#b4b4b4"/></svg>
<svg class="a" style="left:148.90px;top:529.5px" width="20" height="24"><path d="M4.3 19.6A8.4 8.4 0 1 1 15.7 19.6" fill="none" stroke="#161616" stroke-width="1.45"/><path d="M10 5.2V12.8" stroke="#161616" stroke-width="1.45"/><path d="M7.6 0.4H12.4L10 3Z" fill="#1a1a1a"/></svg>
<div class="cb dk" style="left:150.90px;top:553.80px;width:16.00px;height:15.60px;background:#ffad56;font-size:9.5px;font-weight:bold;">3</div>
<div class="cb" style="left:150.90px;top:572.30px;width:16.00px;height:9.30px;background:#1e1e1e;">S</div>
<div style="left:208.20px;top:422.60px;width:67.40px;height:176.40px;background:#464646;"></div>
<div style="left:207.60px;top:410.00px;width:1.20px;height:194.00px;background:#2a2a2a;"></div>
<div class="a" style="left:208.80px;top:410.20px;width:66.20px;height:12.60px;background:#5cffe8;"><div class="a tn" style="left:2.4px;top:1.5px">Bass</div></div>
<div style="left:208.80px;top:599.40px;width:66.20px;height:4.60px;background:#5cffe8;"></div>
<div class="cb" style="left:214.00px;top:427.40px;width:24.80px;height:9.20px;background:#1e1e1e;border-radius:5px;">-10.8</div>
<div class="cb" style="left:214.00px;top:440.40px;width:24.80px;height:8.80px;background:#1e1e1e;">-7.7</div>
<div style="left:250.50px;top:427.30px;width:4.00px;height:166.10px;background:#191919;border-radius:1px 1px 0 0;"></div>
<div style="left:250.50px;top:501.80px;width:3.90px;height:91.60px;background:#2ee560;"></div>
<div style="left:255.40px;top:427.30px;width:4.00px;height:166.10px;background:#191919;border-radius:1px 1px 0 0;"></div>
<div style="left:255.40px;top:501.80px;width:3.90px;height:91.60px;background:#2ee560;"></div>
<div style="left:250.50px;top:473.90px;width:3.90px;height:1.10px;background:#d9b400;"></div>
<div style="left:255.40px;top:473.90px;width:3.90px;height:1.10px;background:#d9b400;"></div>
<div style="left:250.30px;top:443.90px;width:9.00px;height:0.80px;background:#7c7c7c;"></div>
<div style="left:246.90px;top:427.90px;width:2.20px;height:0.80px;background:#686868;"></div>
<div class="a sl" style="left:261.70px;top:426.00px">6</div>
<div style="left:246.90px;top:443.90px;width:2.20px;height:0.80px;background:#686868;"></div>
<div class="a sl" style="left:261.70px;top:439.70px">0</div>
<div style="left:246.90px;top:460.00px;width:2.20px;height:0.80px;background:#686868;"></div>
<div class="a sl" style="left:261.70px;top:455.80px">6</div>
<div style="left:246.90px;top:476.40px;width:2.20px;height:0.80px;background:#686868;"></div>
<div class="a sl" style="left:261.70px;top:472.20px">12</div>
<div style="left:246.90px;top:493.20px;width:2.20px;height:0.80px;background:#686868;"></div>
<div class="a sl" style="left:261.70px;top:489.00px">18</div>
<div style="left:246.90px;top:509.40px;width:2.20px;height:0.80px;background:#686868;"></div>
<div class="a sl" style="left:261.70px;top:505.20px">24</div>
<div style="left:246.90px;top:526.30px;width:2.20px;height:0.80px;background:#686868;"></div>
<div class="a sl" style="left:261.70px;top:522.10px">30</div>
<div style="left:246.90px;top:540.70px;width:2.20px;height:0.80px;background:#686868;"></div>
<div class="a sl" style="left:261.70px;top:536.50px">36</div>
<div style="left:246.90px;top:553.40px;width:2.20px;height:0.80px;background:#686868;"></div>
<div class="a sl" style="left:261.70px;top:549.20px">42</div>
<div style="left:246.90px;top:564.00px;width:2.20px;height:0.80px;background:#686868;"></div>
<div class="a sl" style="left:261.70px;top:559.80px">48</div>
<div style="left:246.90px;top:574.00px;width:2.20px;height:0.80px;background:#686868;"></div>
<div class="a sl" style="left:261.70px;top:569.80px">54</div>
<div style="left:246.90px;top:583.20px;width:2.20px;height:0.80px;background:#686868;"></div>
<div class="a sl" style="left:261.70px;top:579.00px">60</div>
<div style="left:246.90px;top:589.60px;width:2.20px;height:0.80px;background:#686868;"></div>
<svg class="a" style="left:241.70px;top:461.40px" width="8.4" height="9.2"><path d="M0.3 0.3L8 4.6L0.3 8.9Z" fill="#b4b4b4"/></svg>
<svg class="a" style="left:216.40px;top:529.5px" width="20" height="24"><path d="M4.3 19.6A8.4 8.4 0 1 1 15.7 19.6" fill="none" stroke="#161616" stroke-width="1.45"/><path d="M10 5.2V12.8" stroke="#161616" stroke-width="1.45"/><path d="M7.6 0.4H12.4L10 3Z" fill="#1a1a1a"/></svg>
<div class="cb dk" style="left:218.40px;top:553.80px;width:16.00px;height:15.60px;background:#ffad56;font-size:9.5px;font-weight:bold;">8</div>
<div class="cb" style="left:218.40px;top:572.30px;width:16.00px;height:9.30px;background:#1e1e1e;">S</div>
<div class="cb" style="left:218.40px;top:584.50px;width:16.00px;height:9.30px;background:#1e1e1e;"><svg width="7" height="7" viewBox="0 0 7 7" style="transform:translateY(0.7px)"><circle cx="3.5" cy="3.5" r="2.5" fill="#c8c8c8"/><path d="M3.5 1V3.5L2 5.4" stroke="#1e1e1e" stroke-width="1" fill="none"/></svg></div>
<div style="left:275.00px;top:410.00px;width:1.20px;height:194.00px;background:#2a2a2a;"></div>
<div class="a" style="left:276.20px;top:410.20px;width:66.60px;height:12.60px;background:#5cffe8;"><div class="a tn" style="left:2.4px;top:1.5px">Bass Drop</div><div class="a" style="left:55.00px;top:1.2px;width:10px;height:10px;line-height:0"><svg width="10.2" height="10.2" viewBox="0 0 9 9"><circle cx="4.5" cy="4.5" r="4.1" fill="none" stroke="#222" stroke-width="0.7"/><path d="M2.6 3.4H6.4L4.5 6.2Z" fill="#222"/></svg></div></div>
<div style="left:276.20px;top:599.40px;width:66.60px;height:4.60px;background:#5cffe8;"></div>
<div class="cb" style="left:281.40px;top:427.40px;width:24.80px;height:9.20px;background:#1e1e1e;border-radius:5px;"><span style="line-height:8px"><span style="font-size:8px">&#8722;</span><span style="font-size:11px;margin-left:-0.3px">&#8734;</span></span></div>
<div class="cb" style="left:281.40px;top:440.40px;width:24.80px;height:8.80px;background:#1e1e1e;">-0.2</div>
<div style="left:317.90px;top:427.30px;width:4.00px;height:166.10px;background:#191919;border-radius:1px 1px 0 0;"></div>
<div style="left:322.80px;top:427.30px;width:4.00px;height:166.10px;background:#191919;border-radius:1px 1px 0 0;"></div>
<div style="left:317.70px;top:443.90px;width:9.00px;height:0.80px;background:#7c7c7c;"></div>
<div style="left:314.30px;top:427.90px;width:2.20px;height:0.80px;background:#686868;"></div>
<div class="a sl" style="left:329.10px;top:426.00px">6</div>
<div style="left:314.30px;top:443.90px;width:2.20px;height:0.80px;background:#686868;"></div>
<div class="a sl" style="left:329.10px;top:439.70px">0</div>
<div style="left:314.30px;top:460.00px;width:2.20px;height:0.80px;background:#686868;"></div>
<div class="a sl" style="left:329.10px;top:455.80px">6</div>
<div style="left:314.30px;top:476.40px;width:2.20px;height:0.80px;background:#686868;"></div>
<div class="a sl" style="left:329.10px;top:472.20px">12</div>
<div style="left:314.30px;top:493.20px;width:2.20px;height:0.80px;background:#686868;"></div>
<div class="a sl" style="left:329.10px;top:489.00px">18</div>
<div style="left:314.30px;top:509.40px;width:2.20px;height:0.80px;background:#686868;"></div>
<div class="a sl" style="left:329.10px;top:505.20px">24</div>
<div style="left:314.30px;top:526.30px;width:2.20px;height:0.80px;background:#686868;"></div>
<div class="a sl" style="left:329.10px;top:522.10px">30</div>
<div style="left:314.30px;top:540.70px;width:2.20px;height:0.80px;background:#686868;"></div>
<div class="a sl" style="left:329.10px;top:536.50px">36</div>
<div style="left:314.30px;top:553.40px;width:2.20px;height:0.80px;background:#686868;"></div>
<div class="a sl" style="left:329.10px;top:549.20px">42</div>
<div style="left:314.30px;top:564.00px;width:2.20px;height:0.80px;background:#686868;"></div>
<div class="a sl" style="left:329.10px;top:559.80px">48</div>
<div style="left:314.30px;top:574.00px;width:2.20px;height:0.80px;background:#686868;"></div>
<div class="a sl" style="left:329.10px;top:569.80px">54</div>
<div style="left:314.30px;top:583.20px;width:2.20px;height:0.80px;background:#686868;"></div>
<div class="a sl" style="left:329.10px;top:579.00px">60</div>
<div style="left:314.30px;top:589.60px;width:2.20px;height:0.80px;background:#686868;"></div>
<svg class="a" style="left:309.10px;top:440.20px" width="8.4" height="9.2"><path d="M0.3 0.3L8 4.6L0.3 8.9Z" fill="#b4b4b4"/></svg>
<svg class="a" style="left:283.80px;top:529.5px" width="20" height="24"><path d="M4.3 19.6A8.4 8.4 0 1 1 15.7 19.6" fill="none" stroke="#161616" stroke-width="1.45"/><path d="M10 5.2V12.8" stroke="#161616" stroke-width="1.45"/><path d="M7.6 0.4H12.4L10 3Z" fill="#1a1a1a"/></svg>
<div class="cb dk" style="left:285.80px;top:553.80px;width:16.00px;height:15.60px;background:#ffad56;font-size:9.5px;font-weight:bold;">9</div>
<div class="cb" style="left:285.80px;top:572.30px;width:16.00px;height:9.30px;background:#1e1e1e;">S</div>
<div class="cb" style="left:285.80px;top:584.50px;width:16.00px;height:9.30px;background:#1e1e1e;"><svg width="7" height="7" viewBox="0 0 7 7" style="transform:translateY(0.7px)"><circle cx="3.5" cy="3.5" r="2.5" fill="#c8c8c8"/><path d="M3.5 1V3.5L2 5.4" stroke="#1e1e1e" stroke-width="1" fill="none"/></svg></div>
<div style="left:342.80px;top:410.00px;width:1.20px;height:194.00px;background:#2a2a2a;"></div>
<div class="a" style="left:344.00px;top:410.20px;width:66.30px;height:12.60px;background:#edffae;"><div class="a tn" style="left:2.4px;top:1.5px">Synth Riser</div><div class="a" style="left:54.70px;top:1.2px;width:10px;height:10px;line-height:0"><svg width="10.2" height="10.2" viewBox="0 0 9 9"><circle cx="4.5" cy="4.5" r="4.1" fill="none" stroke="#222" stroke-width="0.7"/><path d="M2.6 3.4H6.4L4.5 6.2Z" fill="#222"/></svg></div></div>
<div style="left:344.00px;top:599.40px;width:66.30px;height:4.60px;background:#edffae;"></div>
<div class="cb" style="left:349.20px;top:427.40px;width:24.80px;height:9.20px;background:#1e1e1e;border-radius:5px;">-28.2</div>
<div class="cb" style="left:349.20px;top:440.40px;width:24.80px;height:8.80px;background:#1e1e1e;">-18.0</div>
<div style="left:385.70px;top:427.30px;width:4.00px;height:166.10px;background:#191919;border-radius:1px 1px 0 0;"></div>
<div style="left:385.70px;top:532.70px;width:3.90px;height:11.70px;background:#2aa84a;"></div>
<div style="left:385.70px;top:543.80px;width:3.90px;height:49.60px;background:#2ee560;"></div>
<div style="left:390.60px;top:427.30px;width:4.00px;height:166.10px;background:#191919;border-radius:1px 1px 0 0;"></div>
<div style="left:390.60px;top:530.70px;width:3.90px;height:13.70px;background:#2aa84a;"></div>
<div style="left:390.60px;top:543.80px;width:3.90px;height:49.60px;background:#2ee560;"></div>
<div style="left:385.70px;top:523.10px;width:3.90px;height:1.10px;background:#2ee560;"></div>
<div style="left:390.60px;top:521.10px;width:3.90px;height:1.10px;background:#2ee560;"></div>
<div style="left:385.50px;top:443.90px;width:9.00px;height:0.80px;background:#7c7c7c;"></div>
<div style="left:382.10px;top:427.90px;width:2.20px;height:0.80px;background:#686868;"></div>
<div class="a sl" style="left:396.90px;top:426.00px">6</div>
<div style="left:382.10px;top:443.90px;width:2.20px;height:0.80px;background:#686868;"></div>
<div class="a sl" style="left:396.90px;top:439.70px">0</div>
<div style="left:382.10px;top:460.00px;width:2.20px;height:0.80px;background:#686868;"></div>
<div class="a sl" style="left:396.90px;top:455.80px">6</div>
<div style="left:382.10px;top:476.40px;width:2.20px;height:0.80px;background:#686868;"></div>
<div class="a sl" style="left:396.90px;top:472.20px">12</div>
<div style="left:382.10px;top:493.20px;width:2.20px;height:0.80px;background:#686868;"></div>
<div class="a sl" style="left:396.90px;top:489.00px">18</div>
<div style="left:382.10px;top:509.40px;width:2.20px;height:0.80px;background:#686868;"></div>
<div class="a sl" style="left:396.90px;top:505.20px">24</div>
<div style="left:382.10px;top:526.30px;width:2.20px;height:0.80px;background:#686868;"></div>
<div class="a sl" style="left:396.90px;top:522.10px">30</div>
<div style="left:382.10px;top:540.70px;width:2.20px;height:0.80px;background:#686868;"></div>
<div class="a sl" style="left:396.90px;top:536.50px">36</div>
<div style="left:382.10px;top:553.40px;width:2.20px;height:0.80px;background:#686868;"></div>
<div class="a sl" style="left:396.90px;top:549.20px">42</div>
<div style="left:382.10px;top:564.00px;width:2.20px;height:0.80px;background:#686868;"></div>
<div class="a sl" style="left:396.90px;top:559.80px">48</div>
<div style="left:382.10px;top:574.00px;width:2.20px;height:0.80px;background:#686868;"></div>
<div class="a sl" style="left:396.90px;top:569.80px">54</div>
<div style="left:382.10px;top:583.20px;width:2.20px;height:0.80px;background:#686868;"></div>
<div class="a sl" style="left:396.90px;top:579.00px">60</div>
<div style="left:382.10px;top:589.60px;width:2.20px;height:0.80px;background:#686868;"></div>
<svg class="a" style="left:376.90px;top:489.20px" width="8.4" height="9.2"><path d="M0.3 0.3L8 4.6L0.3 8.9Z" fill="#b4b4b4"/></svg>
<svg class="a" style="left:351.60px;top:529.5px" width="20" height="24"><path d="M4.3 19.6A8.4 8.4 0 1 1 15.7 19.6" fill="none" stroke="#161616" stroke-width="1.45"/><path d="M10 5.2V12.8" stroke="#161616" stroke-width="1.45"/><path d="M7.6 0.4H12.4L10 3Z" fill="#1a1a1a"/></svg>
<div class="cb dk" style="left:353.60px;top:553.80px;width:16.00px;height:15.60px;background:#ffad56;font-size:9.5px;font-weight:bold;">10</div>
<div class="cb" style="left:353.60px;top:572.30px;width:16.00px;height:9.30px;background:#1e1e1e;">S</div>
<div class="cb" style="left:353.60px;top:584.50px;width:16.00px;height:9.30px;background:#1e1e1e;"><svg width="7" height="7" viewBox="0 0 7 7" style="transform:translateY(0.7px)"><circle cx="3.5" cy="3.5" r="2.5" fill="#c8c8c8"/><path d="M3.5 1V3.5L2 5.4" stroke="#1e1e1e" stroke-width="1" fill="none"/></svg></div>
<div style="left:410.30px;top:410.00px;width:1.20px;height:194.00px;background:#2a2a2a;"></div>
<div class="a" style="left:411.50px;top:410.20px;width:66.30px;height:12.60px;background:#f7f47c;"><div class="a tn" style="left:2.4px;top:1.5px">Keys</div></div>
<div style="left:411.50px;top:599.40px;width:66.30px;height:4.60px;background:#f7f47c;"></div>
<div class="cb" style="left:416.70px;top:427.40px;width:24.80px;height:9.20px;background:#1e1e1e;border-radius:5px;">-16.0</div>
<div class="cb" style="left:416.70px;top:440.40px;width:24.80px;height:8.80px;background:#1e1e1e;">-6.6</div>
<div style="left:453.20px;top:427.30px;width:4.00px;height:166.10px;background:#191919;border-radius:1px 1px 0 0;"></div>
<div style="left:453.20px;top:591.40px;width:3.90px;height:2.00px;background:#2ee560;"></div>
<div style="left:458.10px;top:427.30px;width:4.00px;height:166.10px;background:#191919;border-radius:1px 1px 0 0;"></div>
<div style="left:458.10px;top:591.40px;width:3.90px;height:2.00px;background:#2ee560;"></div>
<div style="left:453.20px;top:503.30px;width:3.90px;height:1.10px;background:#2ee560;"></div>
<div style="left:458.10px;top:487.80px;width:3.90px;height:1.10px;background:#a8d020;"></div>
<div style="left:453.00px;top:443.90px;width:9.00px;height:0.80px;background:#7c7c7c;"></div>
<div style="left:449.60px;top:427.90px;width:2.20px;height:0.80px;background:#686868;"></div>
<div class="a sl" style="left:464.40px;top:426.00px">6</div>
<div style="left:449.60px;top:443.90px;width:2.20px;height:0.80px;background:#686868;"></div>
<div class="a sl" style="left:464.40px;top:439.70px">0</div>
<div style="left:449.60px;top:460.00px;width:2.20px;height:0.80px;background:#686868;"></div>
<div class="a sl" style="left:464.40px;top:455.80px">6</div>
<div style="left:449.60px;top:476.40px;width:2.20px;height:0.80px;background:#686868;"></div>
<div class="a sl" style="left:464.40px;top:472.20px">12</div>
<div style="left:449.60px;top:493.20px;width:2.20px;height:0.80px;background:#686868;"></div>
<div class="a sl" style="left:464.40px;top:489.00px">18</div>
<div style="left:449.60px;top:509.40px;width:2.20px;height:0.80px;background:#686868;"></div>
<div class="a sl" style="left:464.40px;top:505.20px">24</div>
<div style="left:449.60px;top:526.30px;width:2.20px;height:0.80px;background:#686868;"></div>
<div class="a sl" style="left:464.40px;top:522.10px">30</div>
<div style="left:449.60px;top:540.70px;width:2.20px;height:0.80px;background:#686868;"></div>
<div class="a sl" style="left:464.40px;top:536.50px">36</div>
<div style="left:449.60px;top:553.40px;width:2.20px;height:0.80px;background:#686868;"></div>
<div class="a sl" style="left:464.40px;top:549.20px">42</div>
<div style="left:449.60px;top:564.00px;width:2.20px;height:0.80px;background:#686868;"></div>
<div class="a sl" style="left:464.40px;top:559.80px">48</div>
<div style="left:449.60px;top:574.00px;width:2.20px;height:0.80px;background:#686868;"></div>
<div class="a sl" style="left:464.40px;top:569.80px">54</div>
<div style="left:449.60px;top:583.20px;width:2.20px;height:0.80px;background:#686868;"></div>
<div class="a sl" style="left:464.40px;top:579.00px">60</div>
<div style="left:449.60px;top:589.60px;width:2.20px;height:0.80px;background:#686868;"></div>
<svg class="a" style="left:444.40px;top:458.30px" width="8.4" height="9.2"><path d="M0.3 0.3L8 4.6L0.3 8.9Z" fill="#b4b4b4"/></svg>
<svg class="a" style="left:419.10px;top:529.5px" width="20" height="24"><path d="M4.3 19.6A8.4 8.4 0 1 1 15.7 19.6" fill="none" stroke="#161616" stroke-width="1.45"/><path d="M10 5.2V12.8" stroke="#161616" stroke-width="1.45"/><path d="M7.6 0.4H12.4L10 3Z" fill="#1a1a1a"/></svg>
<div class="cb dk" style="left:421.10px;top:553.80px;width:16.00px;height:15.60px;background:#ffad56;font-size:9.5px;font-weight:bold;">11</div>
<div class="cb" style="left:421.10px;top:572.30px;width:16.00px;height:9.30px;background:#1e1e1e;">S</div>
<div class="cb" style="left:421.10px;top:584.50px;width:16.00px;height:9.30px;background:#1e1e1e;"><svg width="7" height="7" viewBox="0 0 7 7" style="transform:translateY(0.7px)"><circle cx="3.5" cy="3.5" r="2.5" fill="#c8c8c8"/><path d="M3.5 1V3.5L2 5.4" stroke="#1e1e1e" stroke-width="1" fill="none"/></svg></div>
<div style="left:477.80px;top:410.00px;width:1.20px;height:194.00px;background:#2a2a2a;"></div>
<div class="a" style="left:479.00px;top:410.20px;width:66.30px;height:12.60px;background:#ffa374;"><div class="a tn" style="left:2.4px;top:1.5px">Pads</div><div class="a" style="left:54.70px;top:1.2px;width:10px;height:10px;line-height:0"><svg width="10.2" height="10.2" viewBox="0 0 9 9"><circle cx="4.5" cy="4.5" r="4.1" fill="none" stroke="#222" stroke-width="0.7"/><path d="M2.8 3.3H6.2M2.8 4.5H6.2M2.8 5.7H6.2" stroke="#222" stroke-width="0.6"/></svg></div></div>
<div style="left:479.00px;top:599.40px;width:66.30px;height:4.60px;background:#ffa374;"></div>
<div class="cb" style="left:484.20px;top:427.40px;width:24.80px;height:9.20px;background:#1e1e1e;border-radius:5px;">-14.4</div>
<div class="cb" style="left:484.20px;top:440.40px;width:24.80px;height:8.80px;background:#1e1e1e;">0</div>
<div style="left:520.70px;top:427.30px;width:4.00px;height:166.10px;background:#191919;border-radius:1px 1px 0 0;"></div>
<div style="left:520.70px;top:540.60px;width:3.90px;height:52.80px;background:#2ee560;"></div>
<div style="left:525.60px;top:427.30px;width:4.00px;height:166.10px;background:#191919;border-radius:1px 1px 0 0;"></div>
<div style="left:525.60px;top:537.90px;width:3.90px;height:55.50px;background:#2ee560;"></div>
<div style="left:520.70px;top:483.80px;width:3.90px;height:1.10px;background:#d9c000;"></div>
<div style="left:525.60px;top:488.50px;width:3.90px;height:1.10px;background:#a8d020;"></div>
<div style="left:520.50px;top:443.90px;width:9.00px;height:0.80px;background:#7c7c7c;"></div>
<div style="left:517.10px;top:427.90px;width:2.20px;height:0.80px;background:#686868;"></div>
<div class="a sl" style="left:531.90px;top:426.00px">6</div>
<div style="left:517.10px;top:443.90px;width:2.20px;height:0.80px;background:#686868;"></div>
<div class="a sl" style="left:531.90px;top:439.70px">0</div>
<div style="left:517.10px;top:460.00px;width:2.20px;height:0.80px;background:#686868;"></div>
<div class="a sl" style="left:531.90px;top:455.80px">6</div>
<div style="left:517.10px;top:476.40px;width:2.20px;height:0.80px;background:#686868;"></div>
<div class="a sl" style="left:531.90px;top:472.20px">12</div>
<div style="left:517.10px;top:493.20px;width:2.20px;height:0.80px;background:#686868;"></div>
<div class="a sl" style="left:531.90px;top:489.00px">18</div>
<div style="left:517.10px;top:509.40px;width:2.20px;height:0.80px;background:#686868;"></div>
<div class="a sl" style="left:531.90px;top:505.20px">24</div>
<div style="left:517.10px;top:526.30px;width:2.20px;height:0.80px;background:#686868;"></div>
<div class="a sl" style="left:531.90px;top:522.10px">30</div>
<div style="left:517.10px;top:540.70px;width:2.20px;height:0.80px;background:#686868;"></div>
<div class="a sl" style="left:531.90px;top:536.50px">36</div>
<div style="left:517.10px;top:553.40px;width:2.20px;height:0.80px;background:#686868;"></div>
<div class="a sl" style="left:531.90px;top:549.20px">42</div>
<div style="left:517.10px;top:564.00px;width:2.20px;height:0.80px;background:#686868;"></div>
<div class="a sl" style="left:531.90px;top:559.80px">48</div>
<div style="left:517.10px;top:574.00px;width:2.20px;height:0.80px;background:#686868;"></div>
<div class="a sl" style="left:531.90px;top:569.80px">54</div>
<div style="left:517.10px;top:583.20px;width:2.20px;height:0.80px;background:#686868;"></div>
<div class="a sl" style="left:531.90px;top:579.00px">60</div>
<div style="left:517.10px;top:589.60px;width:2.20px;height:0.80px;background:#686868;"></div>
<svg class="a" style="left:511.90px;top:439.70px" width="8.4" height="9.2"><path d="M0.3 0.3L8 4.6L0.3 8.9Z" fill="#b4b4b4"/></svg>
<svg class="a" style="left:486.60px;top:529.5px" width="20" height="24"><path d="M4.3 19.6A8.4 8.4 0 1 1 15.7 19.6" fill="none" stroke="#161616" stroke-width="1.45"/><path d="M10 5.2V12.8" stroke="#161616" stroke-width="1.45"/><path d="M7.6 0.4H12.4L10 3Z" fill="#1a1a1a"/></svg>
<div class="cb dk" style="left:488.60px;top:553.80px;width:16.00px;height:15.60px;background:#ffad56;font-size:9.5px;font-weight:bold;">12</div>
<div class="cb" style="left:488.60px;top:572.30px;width:16.00px;height:9.30px;background:#1e1e1e;">S</div>
<div style="left:545.30px;top:410.00px;width:1.20px;height:194.00px;background:#2a2a2a;"></div>
<div class="a" style="left:546.50px;top:410.20px;width:66.20px;height:12.60px;background:#ff94a6;"><div class="a tn" style="left:2.4px;top:1.5px">Ambience</div></div>
<div style="left:546.50px;top:599.40px;width:66.20px;height:4.60px;background:#ff94a6;"></div>
<div class="cb" style="left:551.70px;top:427.40px;width:24.80px;height:9.20px;background:#1e1e1e;border-radius:5px;">-29.7</div>
<div class="cb" style="left:551.70px;top:440.40px;width:24.80px;height:8.80px;background:#1e1e1e;">-8.3</div>
<div style="left:588.20px;top:427.30px;width:4.00px;height:166.10px;background:#191919;border-radius:1px 1px 0 0;"></div>
<div style="left:588.20px;top:535.90px;width:3.90px;height:19.20px;background:#2aa84a;"></div>
<div style="left:588.20px;top:554.50px;width:3.90px;height:38.90px;background:#2ee560;"></div>
<div style="left:593.10px;top:427.30px;width:4.00px;height:166.10px;background:#191919;border-radius:1px 1px 0 0;"></div>
<div style="left:593.10px;top:539.90px;width:3.90px;height:15.20px;background:#2aa84a;"></div>
<div style="left:593.10px;top:554.50px;width:3.90px;height:38.90px;background:#2ee560;"></div>
<div style="left:588.20px;top:528.20px;width:3.90px;height:1.10px;background:#2ee560;"></div>
<div style="left:593.10px;top:525.50px;width:3.90px;height:1.10px;background:#2ee560;"></div>
<div style="left:588.00px;top:443.90px;width:9.00px;height:0.80px;background:#7c7c7c;"></div>
<div style="left:584.60px;top:427.90px;width:2.20px;height:0.80px;background:#686868;"></div>
<div class="a sl" style="left:599.40px;top:426.00px">6</div>
<div style="left:584.60px;top:443.90px;width:2.20px;height:0.80px;background:#686868;"></div>
<div class="a sl" style="left:599.40px;top:439.70px">0</div>
<div style="left:584.60px;top:460.00px;width:2.20px;height:0.80px;background:#686868;"></div>
<div class="a sl" style="left:599.40px;top:455.80px">6</div>
<div style="left:584.60px;top:476.40px;width:2.20px;height:0.80px;background:#686868;"></div>
<div class="a sl" style="left:599.40px;top:472.20px">12</div>
<div style="left:584.60px;top:493.20px;width:2.20px;height:0.80px;background:#686868;"></div>
<div class="a sl" style="left:599.40px;top:489.00px">18</div>
<div style="left:584.60px;top:509.40px;width:2.20px;height:0.80px;background:#686868;"></div>
<div class="a sl" style="left:599.40px;top:505.20px">24</div>
<div style="left:584.60px;top:526.30px;width:2.20px;height:0.80px;background:#686868;"></div>
<div class="a sl" style="left:599.40px;top:522.10px">30</div>
<div style="left:584.60px;top:540.70px;width:2.20px;height:0.80px;background:#686868;"></div>
<div class="a sl" style="left:599.40px;top:536.50px">36</div>
<div style="left:584.60px;top:553.40px;width:2.20px;height:0.80px;background:#686868;"></div>
<div class="a sl" style="left:599.40px;top:549.20px">42</div>
<div style="left:584.60px;top:564.00px;width:2.20px;height:0.80px;background:#686868;"></div>
<div class="a sl" style="left:599.40px;top:559.80px">48</div>
<div style="left:584.60px;top:574.00px;width:2.20px;height:0.80px;background:#686868;"></div>
<div class="a sl" style="left:599.40px;top:569.80px">54</div>
<div style="left:584.60px;top:583.20px;width:2.20px;height:0.80px;background:#686868;"></div>
<div class="a sl" style="left:599.40px;top:579.00px">60</div>
<div style="left:584.60px;top:589.60px;width:2.20px;height:0.80px;background:#686868;"></div>
<svg class="a" style="left:579.40px;top:462.70px" width="8.4" height="9.2"><path d="M0.3 0.3L8 4.6L0.3 8.9Z" fill="#b4b4b4"/></svg>
<svg class="a" style="left:554.10px;top:529.5px" width="20" height="24"><path d="M4.3 19.6A8.4 8.4 0 1 1 15.7 19.6" fill="none" stroke="#161616" stroke-width="1.45"/><path d="M10 5.2V12.8" stroke="#161616" stroke-width="1.45"/><path d="M7.6 0.4H12.4L10 3Z" fill="#1a1a1a"/></svg>
<div class="cb dk" style="left:556.10px;top:553.80px;width:16.00px;height:15.60px;background:#ffad56;font-size:9.5px;font-weight:bold;">16</div>
<div class="cb" style="left:556.10px;top:572.30px;width:16.00px;height:9.30px;background:#1e1e1e;">S</div>
<div class="cb" style="left:556.10px;top:584.50px;width:16.00px;height:9.30px;background:#1e1e1e;"><svg width="7" height="7" viewBox="0 0 7 7" style="transform:translateY(0.7px)"><circle cx="3.5" cy="3.5" r="2.6" fill="#727272"/></svg></div>
<div style="left:612.70px;top:410.00px;width:1.20px;height:194.00px;background:#2a2a2a;"></div>
<div class="a" style="left:613.90px;top:410.20px;width:66.30px;height:12.60px;background:#ff94a6;"><div class="a tn" style="left:2.4px;top:1.5px">Drone</div></div>
<div style="left:613.90px;top:599.40px;width:66.30px;height:4.60px;background:#ff94a6;"></div>
<div class="cb" style="left:619.10px;top:427.40px;width:24.80px;height:9.20px;background:#1e1e1e;border-radius:5px;">-25.0</div>
<div class="cb" style="left:619.10px;top:440.40px;width:24.80px;height:8.80px;background:#1e1e1e;">-15.6</div>
<div style="left:655.60px;top:427.30px;width:4.00px;height:166.10px;background:#191919;border-radius:1px 1px 0 0;"></div>
<div style="left:655.60px;top:520.00px;width:3.90px;height:73.40px;background:#2ee560;"></div>
<div style="left:660.50px;top:427.30px;width:4.00px;height:166.10px;background:#191919;border-radius:1px 1px 0 0;"></div>
<div style="left:660.50px;top:524.80px;width:3.90px;height:13.70px;background:#2aa84a;"></div>
<div style="left:660.50px;top:537.90px;width:3.90px;height:55.50px;background:#2ee560;"></div>
<div style="left:660.50px;top:512.40px;width:3.90px;height:1.10px;background:#2ee560;"></div>
<div style="left:655.40px;top:443.90px;width:9.00px;height:0.80px;background:#7c7c7c;"></div>
<div style="left:652.00px;top:427.90px;width:2.20px;height:0.80px;background:#686868;"></div>
<div class="a sl" style="left:666.80px;top:426.00px">6</div>
<div style="left:652.00px;top:443.90px;width:2.20px;height:0.80px;background:#686868;"></div>
<div class="a sl" style="left:666.80px;top:439.70px">0</div>
<div style="left:652.00px;top:460.00px;width:2.20px;height:0.80px;background:#686868;"></div>
<div class="a sl" style="left:666.80px;top:455.80px">6</div>
<div style="left:652.00px;top:476.40px;width:2.20px;height:0.80px;background:#686868;"></div>
<div class="a sl" style="left:666.80px;top:472.20px">12</div>
<div style="left:652.00px;top:493.20px;width:2.20px;height:0.80px;background:#686868;"></div>
<div class="a sl" style="left:666.80px;top:489.00px">18</div>
<div style="left:652.00px;top:509.40px;width:2.20px;height:0.80px;background:#686868;"></div>
<div class="a sl" style="left:666.80px;top:505.20px">24</div>
<div style="left:652.00px;top:526.30px;width:2.20px;height:0.80px;background:#686868;"></div>
<div class="a sl" style="left:666.80px;top:522.10px">30</div>
<div style="left:652.00px;top:540.70px;width:2.20px;height:0.80px;background:#686868;"></div>
<div class="a sl" style="left:666.80px;top:536.50px">36</div>
<div style="left:652.00px;top:553.40px;width:2.20px;height:0.80px;background:#686868;"></div>
<div class="a sl" style="left:666.80px;top:549.20px">42</div>
<div style="left:652.00px;top:564.00px;width:2.20px;height:0.80px;background:#686868;"></div>
<div class="a sl" style="left:666.80px;top:559.80px">48</div>
<div style="left:652.00px;top:574.00px;width:2.20px;height:0.80px;background:#686868;"></div>
<div class="a sl" style="left:666.80px;top:569.80px">54</div>
<div style="left:652.00px;top:583.20px;width:2.20px;height:0.80px;background:#686868;"></div>
<div class="a sl" style="left:666.80px;top:579.00px">60</div>
<div style="left:652.00px;top:589.60px;width:2.20px;height:0.80px;background:#686868;"></div>
<svg class="a" style="left:646.80px;top:482.50px" width="8.4" height="9.2"><path d="M0.3 0.3L8 4.6L0.3 8.9Z" fill="#b4b4b4"/></svg>
<svg class="a" style="left:621.50px;top:529.5px" width="20" height="24"><path d="M4.3 19.6A8.4 8.4 0 1 1 15.7 19.6" fill="none" stroke="#161616" stroke-width="1.45"/><path d="M10 5.2V12.8" stroke="#161616" stroke-width="1.45"/><path d="M7.6 0.4H12.4L10 3Z" fill="#1a1a1a"/></svg>
<div class="cb dk" style="left:623.50px;top:553.80px;width:16.00px;height:15.60px;background:#ffad56;font-size:9.5px;font-weight:bold;">17</div>
<div class="cb" style="left:623.50px;top:572.30px;width:16.00px;height:9.30px;background:#1e1e1e;">S</div>
<div class="cb" style="left:623.50px;top:584.50px;width:16.00px;height:9.30px;background:#1e1e1e;"><svg width="7" height="7" viewBox="0 0 7 7" style="transform:translateY(0.7px)"><circle cx="3.5" cy="3.5" r="2.6" fill="#727272"/></svg></div>
<div style="left:680.30px;top:410.00px;width:1.20px;height:194.00px;background:#2a2a2a;"></div>
<div class="a" style="left:681.50px;top:410.20px;width:66.00px;height:12.60px;background:#d86ce4;"><div class="a tn" style="left:2.4px;top:1.5px">FX</div></div>
<div style="left:681.50px;top:599.40px;width:66.00px;height:4.60px;background:#d86ce4;"></div>
<div class="cb" style="left:686.70px;top:427.40px;width:24.80px;height:9.20px;background:#1e1e1e;border-radius:5px;">-19.6</div>
<div class="cb" style="left:686.70px;top:440.40px;width:24.80px;height:8.80px;background:#1e1e1e;">-4.1</div>
<div style="left:723.20px;top:427.30px;width:4.00px;height:166.10px;background:#191919;border-radius:1px 1px 0 0;"></div>
<div style="left:723.20px;top:505.00px;width:3.90px;height:20.40px;background:#2aa84a;"></div>
<div style="left:723.20px;top:524.80px;width:3.90px;height:68.60px;background:#2ee560;"></div>
<div style="left:728.10px;top:427.30px;width:4.00px;height:166.10px;background:#191919;border-radius:1px 1px 0 0;"></div>
<div style="left:728.10px;top:501.80px;width:3.90px;height:18.40px;background:#2aa84a;"></div>
<div style="left:728.10px;top:519.60px;width:3.90px;height:73.80px;background:#2ee560;"></div>
<div style="left:723.20px;top:502.50px;width:3.90px;height:1.10px;background:#2ee560;"></div>
<div style="left:728.10px;top:497.70px;width:3.90px;height:1.10px;background:#2ee560;"></div>
<div style="left:723.00px;top:443.90px;width:9.00px;height:0.80px;background:#7c7c7c;"></div>
<div style="left:719.60px;top:427.90px;width:2.20px;height:0.80px;background:#686868;"></div>
<div class="a sl" style="left:734.40px;top:426.00px">6</div>
<div style="left:719.60px;top:443.90px;width:2.20px;height:0.80px;background:#686868;"></div>
<div class="a sl" style="left:734.40px;top:439.70px">0</div>
<div style="left:719.60px;top:460.00px;width:2.20px;height:0.80px;background:#686868;"></div>
<div class="a sl" style="left:734.40px;top:455.80px">6</div>
<div style="left:719.60px;top:476.40px;width:2.20px;height:0.80px;background:#686868;"></div>
<div class="a sl" style="left:734.40px;top:472.20px">12</div>
<div style="left:719.60px;top:493.20px;width:2.20px;height:0.80px;background:#686868;"></div>
<div class="a sl" style="left:734.40px;top:489.00px">18</div>
<div style="left:719.60px;top:509.40px;width:2.20px;height:0.80px;background:#686868;"></div>
<div class="a sl" style="left:734.40px;top:505.20px">24</div>
<div style="left:719.60px;top:526.30px;width:2.20px;height:0.80px;background:#686868;"></div>
<div class="a sl" style="left:734.40px;top:522.10px">30</div>
<div style="left:719.60px;top:540.70px;width:2.20px;height:0.80px;background:#686868;"></div>
<div class="a sl" style="left:734.40px;top:536.50px">36</div>
<div style="left:719.60px;top:553.40px;width:2.20px;height:0.80px;background:#686868;"></div>
<div class="a sl" style="left:734.40px;top:549.20px">42</div>
<div style="left:719.60px;top:564.00px;width:2.20px;height:0.80px;background:#686868;"></div>
<div class="a sl" style="left:734.40px;top:559.80px">48</div>
<div style="left:719.60px;top:574.00px;width:2.20px;height:0.80px;background:#686868;"></div>
<div class="a sl" style="left:734.40px;top:569.80px">54</div>
<div style="left:719.60px;top:583.20px;width:2.20px;height:0.80px;background:#686868;"></div>
<div class="a sl" style="left:734.40px;top:579.00px">60</div>
<div style="left:719.60px;top:589.60px;width:2.20px;height:0.80px;background:#686868;"></div>
<svg class="a" style="left:714.40px;top:451.20px" width="8.4" height="9.2"><path d="M0.3 0.3L8 4.6L0.3 8.9Z" fill="#b4b4b4"/></svg>
<svg class="a" style="left:689.10px;top:529.5px" width="20" height="24"><path d="M4.3 19.6A8.4 8.4 0 1 1 15.7 19.6" fill="none" stroke="#161616" stroke-width="1.45"/><path d="M10 5.2V12.8" stroke="#161616" stroke-width="1.45"/><path d="M7.6 0.4H12.4L10 3Z" fill="#1a1a1a"/></svg>
<div class="cb dk" style="left:691.10px;top:553.80px;width:16.00px;height:15.60px;background:#ffad56;font-size:9.5px;font-weight:bold;">18</div>
<div class="cb" style="left:691.10px;top:572.30px;width:16.00px;height:9.30px;background:#1e1e1e;">S</div>
<div class="cb" style="left:691.10px;top:584.50px;width:16.00px;height:9.30px;background:#1e1e1e;"><svg width="7" height="7" viewBox="0 0 7 7" style="transform:translateY(0.7px)"><circle cx="3.5" cy="3.5" r="2.6" fill="#727272"/></svg></div>
<div style="left:747.60px;top:410.00px;width:1.20px;height:194.00px;background:#2a2a2a;"></div>
<div class="a" style="left:748.80px;top:410.20px;width:60.50px;height:12.60px;background:#d86ce4;"><div class="a tn" style="left:2.4px;top:1.5px">Zap</div></div>
<div style="left:748.80px;top:599.40px;width:60.50px;height:4.60px;background:#d86ce4;"></div>
<div class="cb" style="left:762.00px;top:427.40px;width:24.80px;height:9.20px;background:#1e1e1e;border-radius:5px;">-24.6</div>
<div class="cb" style="left:762.00px;top:440.40px;width:24.80px;height:8.80px;background:#1e1e1e;">-19.4</div>
<div style="left:797.80px;top:427.30px;width:4.00px;height:166.10px;background:#191919;border-radius:1px 1px 0 0;"></div>
<div style="left:797.80px;top:522.80px;width:3.90px;height:20.40px;background:#2aa84a;"></div>
<div style="left:797.80px;top:542.60px;width:3.90px;height:50.80px;background:#2ee560;"></div>
<div style="left:802.70px;top:427.30px;width:4.00px;height:166.10px;background:#191919;border-radius:1px 1px 0 0;"></div>
<div style="left:802.70px;top:519.60px;width:3.90px;height:23.60px;background:#2aa84a;"></div>
<div style="left:802.70px;top:542.60px;width:3.90px;height:50.80px;background:#2ee560;"></div>
<div style="left:797.80px;top:511.50px;width:3.90px;height:1.10px;background:#2ee560;"></div>
<div style="left:802.70px;top:514.40px;width:3.90px;height:1.10px;background:#2ee560;"></div>
<div style="left:797.60px;top:443.90px;width:9.00px;height:0.80px;background:#7c7c7c;"></div>
<div style="left:794.20px;top:427.90px;width:2.20px;height:0.80px;background:#686868;"></div>
<div style="left:794.20px;top:443.90px;width:2.20px;height:0.80px;background:#686868;"></div>
<div style="left:794.20px;top:460.00px;width:2.20px;height:0.80px;background:#686868;"></div>
<div style="left:794.20px;top:476.40px;width:2.20px;height:0.80px;background:#686868;"></div>
<div style="left:794.20px;top:493.20px;width:2.20px;height:0.80px;background:#686868;"></div>
<div style="left:794.20px;top:509.40px;width:2.20px;height:0.80px;background:#686868;"></div>
<div style="left:794.20px;top:526.30px;width:2.20px;height:0.80px;background:#686868;"></div>
<div style="left:794.20px;top:540.70px;width:2.20px;height:0.80px;background:#686868;"></div>
<div style="left:794.20px;top:553.40px;width:2.20px;height:0.80px;background:#686868;"></div>
<div style="left:794.20px;top:564.00px;width:2.20px;height:0.80px;background:#686868;"></div>
<div style="left:794.20px;top:574.00px;width:2.20px;height:0.80px;background:#686868;"></div>
<div style="left:794.20px;top:583.20px;width:2.20px;height:0.80px;background:#686868;"></div>
<div style="left:794.20px;top:589.60px;width:2.20px;height:0.80px;background:#686868;"></div>
<svg class="a" style="left:789.00px;top:493.20px" width="8.4" height="9.2"><path d="M0.3 0.3L8 4.6L0.3 8.9Z" fill="#b4b4b4"/></svg>
<svg class="a" style="left:764.40px;top:529.5px" width="20" height="24"><path d="M4.3 19.6A8.4 8.4 0 1 1 15.7 19.6" fill="none" stroke="#161616" stroke-width="1.45"/><path d="M10 5.2V12.8" stroke="#161616" stroke-width="1.45"/><path d="M7.6 0.4H12.4L10 3Z" fill="#1a1a1a"/></svg>
<div class="cb dk" style="left:766.40px;top:553.80px;width:16.00px;height:15.60px;background:#ffad56;font-size:9.5px;font-weight:bold;">19</div>
<div class="cb" style="left:766.40px;top:572.30px;width:16.00px;height:9.30px;background:#1e1e1e;">S</div>
<div class="cb" style="left:766.40px;top:584.50px;width:16.00px;height:9.30px;background:#1e1e1e;"><svg width="7" height="7" viewBox="0 0 7 7" style="transform:translateY(0.7px)"><circle cx="3.5" cy="3.5" r="2.5" fill="#c8c8c8"/><path d="M3.5 1V3.5L2 5.4" stroke="#1e1e1e" stroke-width="1" fill="none"/></svg></div>
<div style="left:810.10px;top:410.00px;width:1.20px;height:194.00px;background:#2a2a2a;"></div>
<div class="a" style="left:811.30px;top:410.20px;width:66.00px;height:12.60px;background:#d0d0d0;"><div class="a tn" style="left:2.4px;top:1.5px">A Reverb</div></div>
<div style="left:811.30px;top:599.40px;width:66.00px;height:4.60px;background:#d0d0d0;"></div>
<div class="cb" style="left:816.50px;top:427.40px;width:24.80px;height:9.20px;background:#1e1e1e;border-radius:5px;">-50.9</div>
<div class="cb" style="left:816.50px;top:440.40px;width:24.80px;height:8.80px;background:#1e1e1e;">0</div>
<div style="left:853.00px;top:427.30px;width:4.00px;height:166.10px;background:#191919;border-radius:1px 1px 0 0;"></div>
<div style="left:853.00px;top:573.30px;width:3.90px;height:11.70px;background:#2aa84a;"></div>
<div style="left:853.00px;top:584.40px;width:3.90px;height:9.00px;background:#2ee560;"></div>
<div style="left:857.90px;top:427.30px;width:4.00px;height:166.10px;background:#191919;border-radius:1px 1px 0 0;"></div>
<div style="left:857.90px;top:572.50px;width:3.90px;height:15.10px;background:#2aa84a;"></div>
<div style="left:857.90px;top:587.00px;width:3.90px;height:6.40px;background:#2ee560;"></div>
<div style="left:853.00px;top:569.20px;width:3.90px;height:1.10px;background:#2ee560;"></div>
<div style="left:852.80px;top:443.90px;width:9.00px;height:0.80px;background:#7c7c7c;"></div>
<div style="left:849.40px;top:427.90px;width:2.20px;height:0.80px;background:#686868;"></div>
<div class="a sl" style="left:864.20px;top:426.00px">6</div>
<div style="left:849.40px;top:443.90px;width:2.20px;height:0.80px;background:#686868;"></div>
<div class="a sl" style="left:864.20px;top:439.70px">0</div>
<div style="left:849.40px;top:460.00px;width:2.20px;height:0.80px;background:#686868;"></div>
<div class="a sl" style="left:864.20px;top:455.80px">6</div>
<div style="left:849.40px;top:476.40px;width:2.20px;height:0.80px;background:#686868;"></div>
<div class="a sl" style="left:864.20px;top:472.20px">12</div>
<div style="left:849.40px;top:493.20px;width:2.20px;height:0.80px;background:#686868;"></div>
<div class="a sl" style="left:864.20px;top:489.00px">18</div>
<div style="left:849.40px;top:509.40px;width:2.20px;height:0.80px;background:#686868;"></div>
<div class="a sl" style="left:864.20px;top:505.20px">24</div>
<div style="left:849.40px;top:526.30px;width:2.20px;height:0.80px;background:#686868;"></div>
<div class="a sl" style="left:864.20px;top:522.10px">30</div>
<div style="left:849.40px;top:540.70px;width:2.20px;height:0.80px;background:#686868;"></div>
<div class="a sl" style="left:864.20px;top:536.50px">36</div>
<div style="left:849.40px;top:553.40px;width:2.20px;height:0.80px;background:#686868;"></div>
<div class="a sl" style="left:864.20px;top:549.20px">42</div>
<div style="left:849.40px;top:564.00px;width:2.20px;height:0.80px;background:#686868;"></div>
<div class="a sl" style="left:864.20px;top:559.80px">48</div>
<div style="left:849.40px;top:574.00px;width:2.20px;height:0.80px;background:#686868;"></div>
<div class="a sl" style="left:864.20px;top:569.80px">54</div>
<div style="left:849.40px;top:583.20px;width:2.20px;height:0.80px;background:#686868;"></div>
<div class="a sl" style="left:864.20px;top:579.00px">60</div>
<div style="left:849.40px;top:589.60px;width:2.20px;height:0.80px;background:#686868;"></div>
<svg class="a" style="left:844.20px;top:439.70px" width="8.4" height="9.2"><path d="M0.3 0.3L8 4.6L0.3 8.9Z" fill="#b4b4b4"/></svg>
<svg class="a" style="left:818.90px;top:529.5px" width="20" height="24"><path d="M4.3 19.6A8.4 8.4 0 1 1 15.7 19.6" fill="none" stroke="#161616" stroke-width="1.45"/><path d="M10 5.2V12.8" stroke="#161616" stroke-width="1.45"/><path d="M7.6 0.4H12.4L10 3Z" fill="#1a1a1a"/></svg>
<div class="cb dk" style="left:820.90px;top:553.80px;width:16.00px;height:15.60px;background:#ffad56;font-size:9.5px;font-weight:bold;">A</div>
<div class="cb" style="left:820.90px;top:572.30px;width:16.00px;height:9.30px;background:#1e1e1e;">S</div>
<div style="left:877.80px;top:410.00px;width:1.20px;height:194.00px;background:#2a2a2a;"></div>
<div class="a" style="left:879.00px;top:410.20px;width:65.70px;height:12.60px;background:#d0d0d0;"><div class="a tn" style="left:2.4px;top:1.5px">B Delay</div></div>
<div style="left:879.00px;top:599.40px;width:65.70px;height:4.60px;background:#d0d0d0;"></div>
<div class="cb" style="left:884.20px;top:427.40px;width:24.80px;height:9.20px;background:#1e1e1e;border-radius:5px;">-55.2</div>
<div class="cb" style="left:884.20px;top:440.40px;width:24.80px;height:8.80px;background:#1e1e1e;">0</div>
<div style="left:920.70px;top:427.30px;width:4.00px;height:166.10px;background:#191919;border-radius:1px 1px 0 0;"></div>
<div style="left:920.70px;top:589.00px;width:3.90px;height:4.40px;background:#2ee560;"></div>
<div style="left:925.60px;top:427.30px;width:4.00px;height:166.10px;background:#191919;border-radius:1px 1px 0 0;"></div>
<div style="left:925.60px;top:577.00px;width:3.90px;height:7.20px;background:#2aa84a;"></div>
<div style="left:925.60px;top:583.60px;width:3.90px;height:9.80px;background:#2ee560;"></div>
<div style="left:920.70px;top:576.50px;width:3.90px;height:1.10px;background:#2ee560;"></div>
<div style="left:925.60px;top:574.50px;width:3.90px;height:1.10px;background:#2ee560;"></div>
<div style="left:920.50px;top:443.90px;width:9.00px;height:0.80px;background:#7c7c7c;"></div>
<div style="left:917.10px;top:427.90px;width:2.20px;height:0.80px;background:#686868;"></div>
<div class="a sl" style="left:931.90px;top:426.00px">6</div>
<div style="left:917.10px;top:443.90px;width:2.20px;height:0.80px;background:#686868;"></div>
<div class="a sl" style="left:931.90px;top:439.70px">0</div>
<div style="left:917.10px;top:460.00px;width:2.20px;height:0.80px;background:#686868;"></div>
<div class="a sl" style="left:931.90px;top:455.80px">6</div>
<div style="left:917.10px;top:476.40px;width:2.20px;height:0.80px;background:#686868;"></div>
<div class="a sl" style="left:931.90px;top:472.20px">12</div>
<div style="left:917.10px;top:493.20px;width:2.20px;height:0.80px;background:#686868;"></div>
<div class="a sl" style="left:931.90px;top:489.00px">18</div>
<div style="left:917.10px;top:509.40px;width:2.20px;height:0.80px;background:#686868;"></div>
<div class="a sl" style="left:931.90px;top:505.20px">24</div>
<div style="left:917.10px;top:526.30px;width:2.20px;height:0.80px;background:#686868;"></div>
<div class="a sl" style="left:931.90px;top:522.10px">30</div>
<div style="left:917.10px;top:540.70px;width:2.20px;height:0.80px;background:#686868;"></div>
<div class="a sl" style="left:931.90px;top:536.50px">36</div>
<div style="left:917.10px;top:553.40px;width:2.20px;height:0.80px;background:#686868;"></div>
<div class="a sl" style="left:931.90px;top:549.20px">42</div>
<div style="left:917.10px;top:564.00px;width:2.20px;height:0.80px;background:#686868;"></div>
<div class="a sl" style="left:931.90px;top:559.80px">48</div>
<div style="left:917.10px;top:574.00px;width:2.20px;height:0.80px;background:#686868;"></div>
<div class="a sl" style="left:931.90px;top:569.80px">54</div>
<div style="left:917.10px;top:583.20px;width:2.20px;height:0.80px;background:#686868;"></div>
<div class="a sl" style="left:931.90px;top:579.00px">60</div>
<div style="left:917.10px;top:589.60px;width:2.20px;height:0.80px;background:#686868;"></div>
<svg class="a" style="left:911.90px;top:439.70px" width="8.4" height="9.2"><path d="M0.3 0.3L8 4.6L0.3 8.9Z" fill="#b4b4b4"/></svg>
<svg class="a" style="left:886.60px;top:529.5px" width="20" height="24"><path d="M4.3 19.6A8.4 8.4 0 1 1 15.7 19.6" fill="none" stroke="#161616" stroke-width="1.45"/><path d="M10 5.2V12.8" stroke="#161616" stroke-width="1.45"/><path d="M7.6 0.4H12.4L10 3Z" fill="#1a1a1a"/></svg>
<div class="cb dk" style="left:888.60px;top:553.80px;width:16.00px;height:15.60px;background:#ffad56;font-size:9.5px;font-weight:bold;">B</div>
<div class="cb" style="left:888.60px;top:572.30px;width:16.00px;height:9.30px;background:#1e1e1e;">S</div>
<div style="left:945.20px;top:410.00px;width:1.20px;height:194.00px;background:#2a2a2a;"></div>
<div class="a" style="left:946.40px;top:410.20px;width:70.30px;height:12.60px;background:#ffffff;"><div class="a tn" style="left:2.4px;top:1.5px">Main</div></div>
<div style="left:946.40px;top:599.40px;width:70.30px;height:4.60px;background:#ffffff;border-radius:0 0 3px 0;"></div>
<div class="cb" style="left:953.50px;top:427.40px;width:24.80px;height:9.20px;background:#1e1e1e;border-radius:5px;">-0.30</div>
<div class="cb" style="left:953.50px;top:440.40px;width:24.80px;height:8.80px;background:#1e1e1e;">0</div>
<div style="left:989.80px;top:427.30px;width:4.00px;height:166.10px;background:#191919;border-radius:1px 1px 0 0;"></div>
<div style="left:989.80px;top:485.20px;width:3.90px;height:7.70px;background:#a4d81c;"></div>
<div style="left:989.80px;top:492.30px;width:3.90px;height:101.10px;background:#2ee560;"></div>
<div style="left:994.70px;top:427.30px;width:4.00px;height:166.10px;background:#191919;border-radius:1px 1px 0 0;"></div>
<div style="left:994.70px;top:485.20px;width:3.90px;height:7.70px;background:#a4d81c;"></div>
<div style="left:994.70px;top:492.30px;width:3.90px;height:101.10px;background:#2ee560;"></div>
<div style="left:989.80px;top:443.50px;width:3.90px;height:1.10px;background:#e03a30;"></div>
<div style="left:994.70px;top:443.50px;width:3.90px;height:1.10px;background:#e03a30;"></div>
<div style="left:986.20px;top:427.90px;width:2.20px;height:0.80px;background:#686868;"></div>
<div class="a sl" style="left:1001.30px;top:426.00px">6</div>
<div style="left:986.20px;top:443.90px;width:2.20px;height:0.80px;background:#686868;"></div>
<div class="a sl" style="left:1001.30px;top:439.70px">0</div>
<div style="left:986.20px;top:460.00px;width:2.20px;height:0.80px;background:#686868;"></div>
<div class="a sl" style="left:1001.30px;top:455.80px">6</div>
<div style="left:986.20px;top:476.40px;width:2.20px;height:0.80px;background:#686868;"></div>
<div class="a sl" style="left:1001.30px;top:472.20px">12</div>
<div style="left:986.20px;top:493.20px;width:2.20px;height:0.80px;background:#686868;"></div>
<div class="a sl" style="left:1001.30px;top:489.00px">18</div>
<div style="left:986.20px;top:509.40px;width:2.20px;height:0.80px;background:#686868;"></div>
<div class="a sl" style="left:1001.30px;top:505.20px">24</div>
<div style="left:986.20px;top:526.30px;width:2.20px;height:0.80px;background:#686868;"></div>
<div class="a sl" style="left:1001.30px;top:522.10px">30</div>
<div style="left:986.20px;top:540.70px;width:2.20px;height:0.80px;background:#686868;"></div>
<div class="a sl" style="left:1001.30px;top:536.50px">36</div>
<div style="left:986.20px;top:553.40px;width:2.20px;height:0.80px;background:#686868;"></div>
<div class="a sl" style="left:1001.30px;top:549.20px">42</div>
<div style="left:986.20px;top:564.00px;width:2.20px;height:0.80px;background:#686868;"></div>
<div class="a sl" style="left:1001.30px;top:559.80px">48</div>
<div style="left:986.20px;top:574.00px;width:2.20px;height:0.80px;background:#686868;"></div>
<div class="a sl" style="left:1001.30px;top:569.80px">54</div>
<div style="left:986.20px;top:583.20px;width:2.20px;height:0.80px;background:#686868;"></div>
<div class="a sl" style="left:1001.30px;top:579.00px">60</div>
<div style="left:986.20px;top:589.60px;width:2.20px;height:0.80px;background:#686868;"></div>
<svg class="a" style="left:981.00px;top:439.70px" width="8.4" height="9.2"><path d="M0.3 0.3L8 4.6L0.3 8.9Z" fill="#b4b4b4"/></svg>
<svg class="a" style="left:955.40px;top:529.5px" width="20" height="24"><path d="M4.3 19.6A8.4 8.4 0 1 1 15.7 19.6" fill="none" stroke="#161616" stroke-width="1.45"/><path d="M10 5.2V12.8" stroke="#161616" stroke-width="1.45"/><path d="M7.6 0.4H12.4L10 3Z" fill="#1a1a1a"/></svg>
<div class="cb" style="left:956.80px;top:560.60px;width:17.20px;height:8.40px;background:#6e6e6e;color:#3a3a3a;">Solo</div>
<svg class="a" style="left:955.40px;top:571.5px" width="20" height="20"><path d="M5.2 16.6A8 8 0 1 1 16.9 13.7" fill="none" stroke="#3c6fdc" stroke-width="1.3"/><path d="M8 17.6V15.6A2 2 0 0 1 12 15.6V17.6" fill="none" stroke="#c8c8c8" stroke-width="0.9"/><path d="M7.4 16.2V17.9M12.6 16.2V17.9" stroke="#c8c8c8" stroke-width="1.3"/></svg>
<svg class="a" style="left:7.5px;top:611.3px" width="11" height="11"><circle cx="5.5" cy="5.5" r="5.2" fill="#444"/><path d="M5.5 4.8V8.3" stroke="#2a2a2a" stroke-width="1.3"/><circle cx="5.5" cy="3.1" r="0.8" fill="#2a2a2a"/></svg>
<div style="left:30.00px;top:610.20px;width:640.00px;height:13.60px;background:#353535;border-radius:2px;"></div>
<div style="left:676.30px;top:610.20px;width:156.60px;height:13.60px;background:#353535;border-radius:2px;"></div>
<svg class="a" style="left:681px;top:614px" width="6" height="6"><path d="M0.5 0.3L5 3L0.5 5.7Z" fill="#b9b9b9"/></svg>
<div style="left:690.50px;top:611.20px;width:142.00px;height:11.60px;background:#3b3b3b;border-radius:1px;"></div>
<svg class="a" style="left:691px;top:611px" width="140" height="12"><path d="M2.0 9h4M9.0 6h2M13.0 4.5h2M16.0 3h4M22.0 4.5h5M30.0 3h3M34.0 4.5h5M41.0 4.5h5M47.0 3h3M53.0 9h5M59.0 4.5h2M62.0 4.5h3M66.0 4.5h4M72.0 4.5h3M76.0 4.5h5M83.0 3h4M89.0 4.5h3M94.0 3h4M100.0 9h2M105.0 6h2M109.0 6h4M115.0 6h3M120.0 7.5h3M124.0 6h2M129.0 6h5M135.0 9h5" stroke="#2c2c2c" stroke-width="0.9"/></svg>
<div style="left:801.40px;top:610.60px;width:1.00px;height:12.80px;background:#e0e0e0;"></div>
<div style="left:839.00px;top:610.20px;width:13.50px;height:13.60px;background:#353535;border-radius:2px 0 0 2px;"></div>
<div style="left:853.40px;top:610.20px;width:129.30px;height:13.60px;background:#353535;border-radius:0 2px 2px 0;"></div>
<svg class="a" style="left:843.5px;top:614px" width="6" height="6"><path d="M0.5 0.3L5 3L0.5 5.7Z" fill="#b9b9b9"/></svg>
<div class="a" style="left:857.5px;top:612.3px;font-size:7.6px;color:#c4c4c4;-webkit-text-stroke:0.25px #c4c4c4">Bass</div>
<svg class="a" style="left:878.2px;top:610.1px" width="104.6" height="13.4"><rect x="0" y="0" width="9.2" height="13.4" fill="#1d1f21"/><rect x="9.8" y="0" width="8.6" height="13.4" fill="#1d1f21"/><rect x="18.8" y="0" width="13.4" height="13.4" fill="#1d1f21"/><rect x="32.8" y="0" width="15" height="13.4" fill="#1d1f21"/><rect x="48.3" y="0" width="8.7" height="13.4" fill="#1d1f21"/><rect x="57.5" y="0" width="9.3" height="13.4" fill="#1d1f21"/><rect x="67.5" y="0" width="9.7" height="13.4" fill="#1d1f21"/><rect x="77.8" y="0" width="9.2" height="13.4" fill="#1d1f21"/><rect x="87.8" y="0" width="16.6" height="13.4" fill="#1d1f21"/><rect x="0.6" y="0.8" width="8" height="1.6" fill="#1f8299"/><rect x="0.6" y="3.2" width="8" height="0.6" fill="#2a5a66"/><rect x="0.6" y="7.6" width="8" height="1.4" fill="#c07e2c"/><rect x="2" y="10.2" width="5" height="2.2" fill="#7a5526"/><rect x="4" y="4.5" width="1" height="2.5" fill="#1f8299"/><rect x="10.6" y="1.2" width="2" height="0.8" fill="#4a4a4a"/><rect x="14" y="2.2" width="2.6" height="1" fill="#1f8299"/><rect x="11" y="5" width="1.4" height="1.4" fill="#4a4a4a"/><rect x="15" y="6" width="1.6" height="1.6" fill="#1f8299"/><rect x="11" y="9.4" width="1.6" height="1.6" fill="#c07e2c"/><rect x="15" y="10" width="1.4" height="1.4" fill="#4a4a4a"/><rect x="19.4" y="0.8" width="3" height="0.7" fill="#4a4a4a"/><rect x="23" y="0.8" width="5.5" height="1.4" fill="#1f8299"/><path d="M19.6 9V4.6H27.5L30.6 10.4" fill="none" stroke="#1f8299" stroke-width="0.7"/><rect x="19.4" y="11.4" width="12" height="0.8" fill="#2a5a66"/><rect x="33.4" y="0.8" width="4" height="0.7" fill="#4a4a4a"/><path d="M33.6 10.2V3.4L36 7.6H46.8" fill="none" stroke="#1f8299" stroke-width="0.7"/><rect x="40" y="1.2" width="5" height="0.8" fill="#2a5a66"/><rect x="33.4" y="11.6" width="9" height="0.8" fill="#2a5a66"/><rect x="49.099999999999994" y="1" width="2.2" height="1.6" fill="#4a4a4a"/><rect x="52.9" y="1.4" width="2.2" height="1.6" fill="#4a4a4a"/><rect x="49.099999999999994" y="4.6" width="2.2" height="1.6" fill="#4a4a4a"/><rect x="52.9" y="5" width="2.2" height="1.6" fill="#4a4a4a"/><rect x="49.3" y="8.4" width="2.2" height="1.6" fill="#4a4a4a"/><rect x="53.099999999999994" y="9" width="2.2" height="1.6" fill="#4a4a4a"/><rect x="49" y="11.6" width="4" height="0.8" fill="#1f8299"/><rect x="58" y="1" width="3" height="1.2" fill="#4a4a4a"/><rect x="62.2" y="0.8" width="4.2" height="3" fill="#c07e2c"/><rect x="58" y="4.8" width="2.2" height="1.6" fill="#5a5a5a"/><rect x="61.6" y="5.6" width="4.6" height="1.2" fill="#4a4a4a"/><rect x="58.4" y="8.4" width="1.6" height="3.4" fill="#5a5a5a"/><rect x="62" y="9" width="4" height="2.6" fill="#4a4a4a"/><rect x="68" y="0.8" width="3.2" height="1" fill="#1f8299"/><rect x="73" y="1.4" width="2" height="1.6" fill="#1f8299"/><rect x="68" y="3.6" width="2" height="1.2" fill="#4a4a4a"/><rect x="68.2" y="6.4" width="6.2" height="4.2" fill="#111111"/><rect x="75" y="7.4" width="1.6" height="1.4" fill="#1f8299"/><rect x="68.4" y="11.4" width="5" height="1" fill="#c07e2c"/><rect x="78.4" y="1" width="2" height="1.2" fill="#1f8299"/><rect x="82" y="0.8" width="4.4" height="1.2" fill="#c07e2c"/><rect x="79" y="3.8" width="1.6" height="1.6" fill="#1f8299"/><rect x="82.6" y="4" width="3.6" height="1.6" fill="#c07e2c"/><rect x="78.4" y="7" width="3" height="1.2" fill="#4a4a4a"/><rect x="82.6" y="7.4" width="3.6" height="1.4" fill="#c07e2c"/><rect x="78.4" y="10.6" width="3.4" height="1.6" fill="#1f8299"/><rect x="82.8" y="10.8" width="3.2" height="1.4" fill="#c07e2c"/><rect x="88.4" y="1" width="1.4" height="1.2" fill="#1f8299"/><rect x="88.4" y="3.6" width="1.4" height="1.2" fill="#1f8299"/><rect x="88.4" y="6.4" width="1.4" height="1.2" fill="#1f8299"/><rect x="90.6" y="1.2" width="9.8" height="9.6" fill="#111111"/><rect x="95.4" y="1.2" width="0.5" height="9.6" fill="#2a2a2a"/><rect x="101.2" y="1" width="2.8" height="1.6" fill="#c07e2c"/><rect x="101.2" y="4.4" width="2.8" height="0.9" fill="#c07e2c"/><rect x="101.2" y="7.2" width="2.8" height="0.9" fill="#c07e2c"/><rect x="101.2" y="10.6" width="2.8" height="1.2" fill="#c07e2c"/><rect x="88.4" y="11.6" width="8" height="0.7" fill="#2a5a66"/></svg>
<svg class="a" style="left:994.5px;top:611px" width="22" height="12"><path d="M1.2 11V5.5M3.9 11V1.5M6.6 11V4M9.3 11V6.5" stroke="#ffad56" stroke-width="1.5"/><path d="M15.5 5H20L17.75 7.8Z" fill="#4a4a4a"/></svg>
</div></body></html>
